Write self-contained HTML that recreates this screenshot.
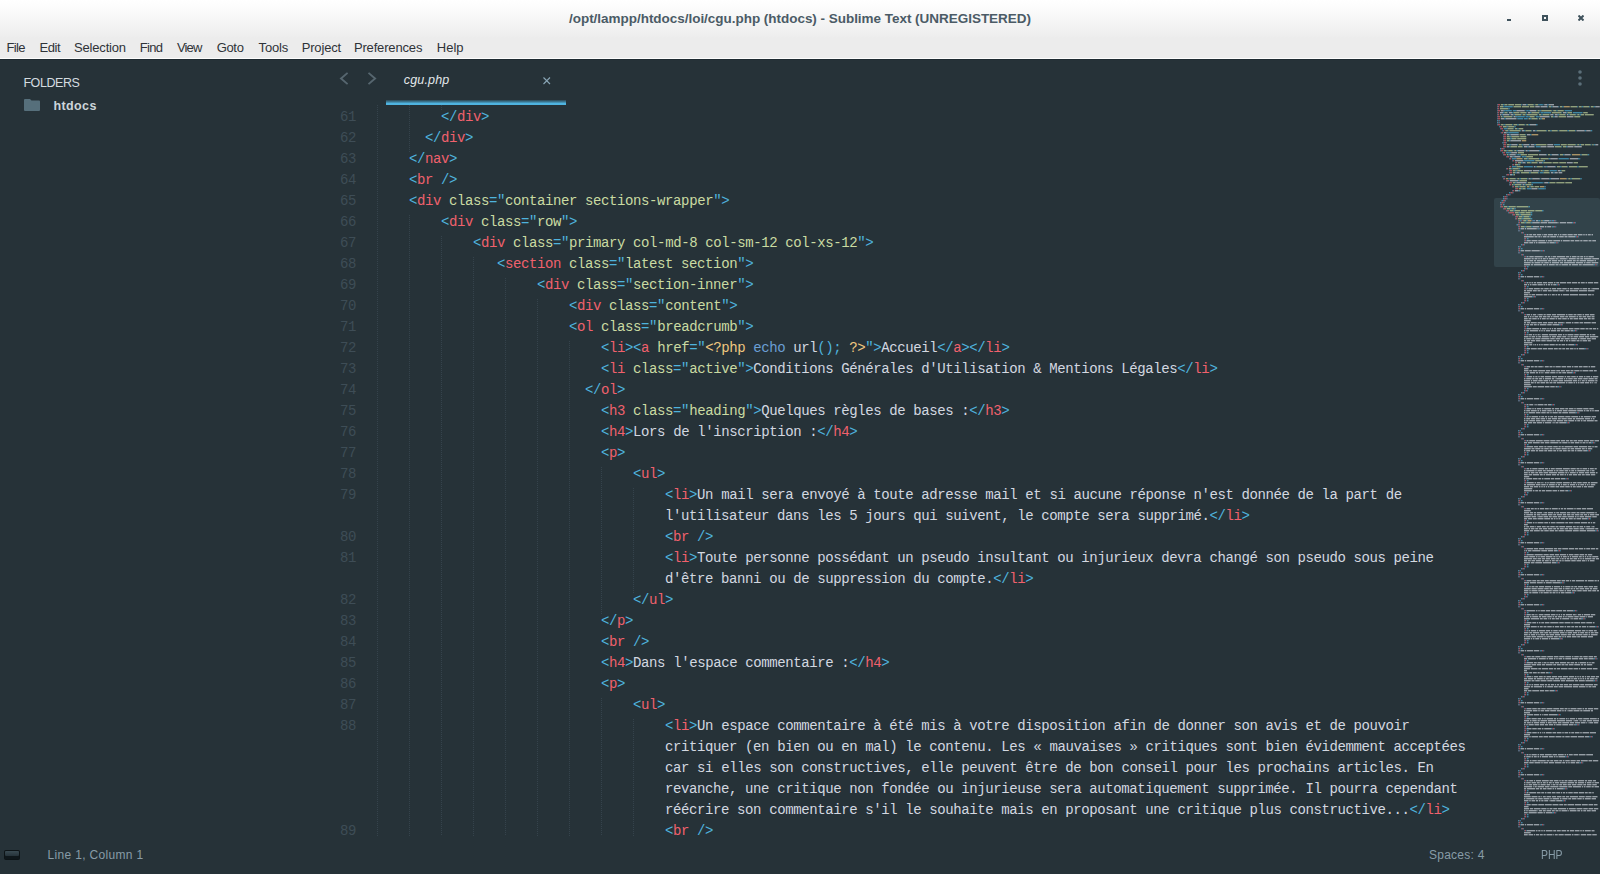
<!DOCTYPE html>
<html><head><meta charset="utf-8">
<style>
*{margin:0;padding:0;box-sizing:border-box}
html,body{width:1600px;height:874px;overflow:hidden;background:#263238}
body{position:relative;font-family:"Liberation Sans",sans-serif}
.abs{position:absolute}
.lb{position:absolute;white-space:pre;line-height:16px}
#titlebar{position:absolute;left:0;top:0;width:1600px;height:58px;background:linear-gradient(#ffffff 0px,#fbfbfb 10px,#efefef 34px,#ececec 38px,#ececec 58px)}
#wline{position:absolute;left:0;top:58px;width:1600px;height:1px;background:#fdfdfd}
#dline{position:absolute;left:0;top:59px;width:1600px;height:1px;background:#1e2a31}
#title{position:absolute;left:0;top:10px;width:1600px;text-align:center;font-weight:bold;font-size:13px;color:#4b5b66;line-height:16px}
.menu{position:absolute;top:40px;font-size:12.5px;color:#2f3338;line-height:14px}
.wb{position:absolute;background:#3f525c}
.r{position:absolute;left:377px;height:21px;line-height:21px;white-space:pre;font-family:"Liberation Mono",monospace;font-size:14px;letter-spacing:-0.4px;color:#d3d8e0}
.ln{position:absolute;left:300px;width:56px;text-align:right;height:21px;line-height:21px;font-family:"Liberation Mono",monospace;font-size:14px;letter-spacing:-0.4px;color:#3e4d56}
.p{color:#4fb3dd} .t{color:#f0616d} .a{color:#cadba2} .s{color:#cadba2} .x{color:#d3d8e0} .ph{color:#f0c880} .k{color:#6a9fd4} .f{color:#d3d8e0}
.g{position:absolute;width:1px;background:repeating-linear-gradient(to bottom,#35434c 0px,#35434c 1px,transparent 1px,transparent 2px)}
#tabline{position:absolute;left:386px;top:100px;width:180px;height:5px;background:linear-gradient(rgba(79,180,224,0.15),rgba(79,180,224,0.6) 40%,#4fb4e0 70%,#4fb4e0)}
</style></head><body>
<div id="titlebar"></div>
<div id="wline"></div>
<div id="dline"></div>
<div class="wb" style="left:1507px;top:19px;width:4px;height:2px"></div>
<div class="wb" style="left:1542px;top:15px;width:6px;height:6px;background:transparent;border:2px solid #3f525c"></div>
<svg class="abs" style="left:1578px;top:15px" width="6" height="6" viewBox="0 0 6 6"><path d="M0.5 0.5L5.5 5.5M5.5 0.5L0.5 5.5" stroke="#3f525c" stroke-width="2"/></svg>

<svg class="abs" style="left:24px;top:99px" width="16" height="12" viewBox="0 0 16 12"><path d="M0 1Q0 0 1 0H6L7.5 1.5H15Q16 1.5 16 2.5V11Q16 12 15 12H1Q0 12 0 11Z" fill="#566f7b"/></svg>

<svg class="abs" style="left:330px;top:62px" width="60" height="30" viewBox="0 0 60 30"><path d="M17.6 10.9L11 16.5L17.6 22.1M38.5 10.9L45.1 16.5L38.5 22.1" fill="none" stroke="#56666f" stroke-width="1.9"/></svg>
<svg class="abs" style="left:543px;top:77px" width="8" height="8" viewBox="0 0 8 8"><path d="M0.5 0.5L7 7M7 0.5L0.5 7" stroke="#89a6b6" stroke-width="1.1"/></svg>
<div id="tabline"></div>
<svg class="abs" style="left:1576px;top:69px" width="8" height="18" viewBox="0 0 8 18"><circle cx="4" cy="3" r="1.8" fill="#5b6f79"/><circle cx="4" cy="9" r="1.8" fill="#5b6f79"/><circle cx="4" cy="15" r="1.8" fill="#5b6f79"/></svg>

<div class="g" style="left:377px;top:105px;height:731px"></div>
<div class="g" style="left:409px;top:105px;height:47px"></div>
<div class="g" style="left:409px;top:215px;height:621px"></div>
<div class="g" style="left:441px;top:105px;height:5px"></div>
<div class="g" style="left:441px;top:236px;height:600px"></div>
<div class="g" style="left:473px;top:257px;height:579px"></div>
<div class="g" style="left:505px;top:278px;height:558px"></div>
<div class="g" style="left:537px;top:299px;height:537px"></div>
<div class="g" style="left:569px;top:341px;height:495px"></div>
<div class="g" style="left:601px;top:467px;height:147px"></div>
<div class="g" style="left:601px;top:698px;height:138px"></div>
<div class="g" style="left:633px;top:488px;height:105px"></div>
<div class="g" style="left:633px;top:719px;height:117px"></div>
<div class="r" style="top:106.5px">        <span class="p">&lt;/</span><span class="t">div</span><span class="p">&gt;</span></div>
<div class="ln" style="top:106.5px">61</div>
<div class="r" style="top:127.5px">      <span class="p">&lt;/</span><span class="t">div</span><span class="p">&gt;</span></div>
<div class="ln" style="top:127.5px">62</div>
<div class="r" style="top:148.5px">    <span class="p">&lt;/</span><span class="t">nav</span><span class="p">&gt;</span></div>
<div class="ln" style="top:148.5px">63</div>
<div class="r" style="top:169.5px">    <span class="p">&lt;</span><span class="t">br</span> <span class="p">/&gt;</span></div>
<div class="ln" style="top:169.5px">64</div>
<div class="r" style="top:190.5px">    <span class="p">&lt;</span><span class="t">div</span> <span class="a">class</span><span class="p">="</span><span class="s">container sections-wrapper</span><span class="p">"&gt;</span></div>
<div class="ln" style="top:190.5px">65</div>
<div class="r" style="top:211.5px">        <span class="p">&lt;</span><span class="t">div</span> <span class="a">class</span><span class="p">="</span><span class="s">row</span><span class="p">"&gt;</span></div>
<div class="ln" style="top:211.5px">66</div>
<div class="r" style="top:232.5px">            <span class="p">&lt;</span><span class="t">div</span> <span class="a">class</span><span class="p">="</span><span class="s">primary col-md-8 col-sm-12 col-xs-12</span><span class="p">"&gt;</span></div>
<div class="ln" style="top:232.5px">67</div>
<div class="r" style="top:253.5px">               <span class="p">&lt;</span><span class="t">section</span> <span class="a">class</span><span class="p">="</span><span class="s">latest section</span><span class="p">"&gt;</span></div>
<div class="ln" style="top:253.5px">68</div>
<div class="r" style="top:274.5px">                    <span class="p">&lt;</span><span class="t">div</span> <span class="a">class</span><span class="p">="</span><span class="s">section-inner</span><span class="p">"&gt;</span></div>
<div class="ln" style="top:274.5px">69</div>
<div class="r" style="top:295.5px">                        <span class="p">&lt;</span><span class="t">div</span> <span class="a">class</span><span class="p">="</span><span class="s">content</span><span class="p">"&gt;</span></div>
<div class="ln" style="top:295.5px">70</div>
<div class="r" style="top:316.5px">                        <span class="p">&lt;</span><span class="t">ol</span> <span class="a">class</span><span class="p">="</span><span class="s">breadcrumb</span><span class="p">"&gt;</span></div>
<div class="ln" style="top:316.5px">71</div>
<div class="r" style="top:337.5px">                            <span class="p">&lt;</span><span class="t">li</span><span class="p">&gt;&lt;</span><span class="t">a</span> <span class="a">href</span><span class="p">="</span><span class="ph">&lt;?php</span> <span class="k">echo</span> <span class="f">url</span><span class="p">();</span> <span class="ph">?&gt;</span><span class="p">"&gt;</span><span class="x">Accueil</span><span class="p">&lt;/</span><span class="t">a</span><span class="p">&gt;&lt;/</span><span class="t">li</span><span class="p">&gt;</span></div>
<div class="ln" style="top:337.5px">72</div>
<div class="r" style="top:358.5px">                            <span class="p">&lt;</span><span class="t">li</span> <span class="a">class</span><span class="p">="</span><span class="s">active</span><span class="p">"&gt;</span><span class="x">Conditions</span> <span class="x">Générales</span> <span class="x">d'Utilisation</span> <span class="x">&amp;</span> <span class="x">Mentions</span> <span class="x">Légales</span><span class="p">&lt;/</span><span class="t">li</span><span class="p">&gt;</span></div>
<div class="ln" style="top:358.5px">73</div>
<div class="r" style="top:379.5px">                          <span class="p">&lt;/</span><span class="t">ol</span><span class="p">&gt;</span></div>
<div class="ln" style="top:379.5px">74</div>
<div class="r" style="top:400.5px">                            <span class="p">&lt;</span><span class="t">h3</span> <span class="a">class</span><span class="p">="</span><span class="s">heading</span><span class="p">"&gt;</span><span class="x">Quelques</span> <span class="x">règles</span> <span class="x">de</span> <span class="x">bases</span> <span class="x">:</span><span class="p">&lt;/</span><span class="t">h3</span><span class="p">&gt;</span></div>
<div class="ln" style="top:400.5px">75</div>
<div class="r" style="top:421.5px">                            <span class="p">&lt;</span><span class="t">h4</span><span class="p">&gt;</span><span class="x">Lors</span> <span class="x">de</span> <span class="x">l'inscription</span> <span class="x">:</span><span class="p">&lt;/</span><span class="t">h4</span><span class="p">&gt;</span></div>
<div class="ln" style="top:421.5px">76</div>
<div class="r" style="top:442.5px">                            <span class="p">&lt;</span><span class="t">p</span><span class="p">&gt;</span></div>
<div class="ln" style="top:442.5px">77</div>
<div class="r" style="top:463.5px">                                <span class="p">&lt;</span><span class="t">ul</span><span class="p">&gt;</span></div>
<div class="ln" style="top:463.5px">78</div>
<div class="r" style="top:484.5px">                                    <span class="p">&lt;</span><span class="t">li</span><span class="p">&gt;</span><span class="x">Un</span> <span class="x">mail</span> <span class="x">sera</span> <span class="x">envoyé</span> <span class="x">à</span> <span class="x">toute</span> <span class="x">adresse</span> <span class="x">mail</span> <span class="x">et</span> <span class="x">si</span> <span class="x">aucune</span> <span class="x">réponse</span> <span class="x">n'est</span> <span class="x">donnée</span> <span class="x">de</span> <span class="x">la</span> <span class="x">part</span> <span class="x">de</span></div>
<div class="ln" style="top:484.5px">79</div>
<div class="r" style="top:505.5px">                                    <span class="x">l'utilisateur</span> <span class="x">dans</span> <span class="x">les</span> <span class="x">5</span> <span class="x">jours</span> <span class="x">qui</span> <span class="x">suivent,</span> <span class="x">le</span> <span class="x">compte</span> <span class="x">sera</span> <span class="x">supprimé.</span><span class="p">&lt;/</span><span class="t">li</span><span class="p">&gt;</span></div>
<div class="r" style="top:526.5px">                                    <span class="p">&lt;</span><span class="t">br</span> <span class="p">/&gt;</span></div>
<div class="ln" style="top:526.5px">80</div>
<div class="r" style="top:547.5px">                                    <span class="p">&lt;</span><span class="t">li</span><span class="p">&gt;</span><span class="x">Toute</span> <span class="x">personne</span> <span class="x">possédant</span> <span class="x">un</span> <span class="x">pseudo</span> <span class="x">insultant</span> <span class="x">ou</span> <span class="x">injurieux</span> <span class="x">devra</span> <span class="x">changé</span> <span class="x">son</span> <span class="x">pseudo</span> <span class="x">sous</span> <span class="x">peine</span></div>
<div class="ln" style="top:547.5px">81</div>
<div class="r" style="top:568.5px">                                    <span class="x">d'être</span> <span class="x">banni</span> <span class="x">ou</span> <span class="x">de</span> <span class="x">suppression</span> <span class="x">du</span> <span class="x">compte.</span><span class="p">&lt;/</span><span class="t">li</span><span class="p">&gt;</span></div>
<div class="r" style="top:589.5px">                                <span class="p">&lt;/</span><span class="t">ul</span><span class="p">&gt;</span></div>
<div class="ln" style="top:589.5px">82</div>
<div class="r" style="top:610.5px">                            <span class="p">&lt;/</span><span class="t">p</span><span class="p">&gt;</span></div>
<div class="ln" style="top:610.5px">83</div>
<div class="r" style="top:631.5px">                            <span class="p">&lt;</span><span class="t">br</span> <span class="p">/&gt;</span></div>
<div class="ln" style="top:631.5px">84</div>
<div class="r" style="top:652.5px">                            <span class="p">&lt;</span><span class="t">h4</span><span class="p">&gt;</span><span class="x">Dans</span> <span class="x">l'espace</span> <span class="x">commentaire</span> <span class="x">:</span><span class="p">&lt;/</span><span class="t">h4</span><span class="p">&gt;</span></div>
<div class="ln" style="top:652.5px">85</div>
<div class="r" style="top:673.5px">                            <span class="p">&lt;</span><span class="t">p</span><span class="p">&gt;</span></div>
<div class="ln" style="top:673.5px">86</div>
<div class="r" style="top:694.5px">                                <span class="p">&lt;</span><span class="t">ul</span><span class="p">&gt;</span></div>
<div class="ln" style="top:694.5px">87</div>
<div class="r" style="top:715.5px">                                    <span class="p">&lt;</span><span class="t">li</span><span class="p">&gt;</span><span class="x">Un</span> <span class="x">espace</span> <span class="x">commentaire</span> <span class="x">à</span> <span class="x">été</span> <span class="x">mis</span> <span class="x">à</span> <span class="x">votre</span> <span class="x">disposition</span> <span class="x">afin</span> <span class="x">de</span> <span class="x">donner</span> <span class="x">son</span> <span class="x">avis</span> <span class="x">et</span> <span class="x">de</span> <span class="x">pouvoir</span></div>
<div class="ln" style="top:715.5px">88</div>
<div class="r" style="top:736.5px">                                    <span class="x">critiquer</span> <span class="x">(en</span> <span class="x">bien</span> <span class="x">ou</span> <span class="x">en</span> <span class="x">mal)</span> <span class="x">le</span> <span class="x">contenu.</span> <span class="x">Les</span> <span class="x">«</span> <span class="x">mauvaises</span> <span class="x">»</span> <span class="x">critiques</span> <span class="x">sont</span> <span class="x">bien</span> <span class="x">évidemment</span> <span class="x">acceptées</span></div>
<div class="r" style="top:757.5px">                                    <span class="x">car</span> <span class="x">si</span> <span class="x">elles</span> <span class="x">son</span> <span class="x">constructives,</span> <span class="x">elle</span> <span class="x">peuvent</span> <span class="x">être</span> <span class="x">de</span> <span class="x">bon</span> <span class="x">conseil</span> <span class="x">pour</span> <span class="x">les</span> <span class="x">prochains</span> <span class="x">articles.</span> <span class="x">En</span></div>
<div class="r" style="top:778.5px">                                    <span class="x">revanche,</span> <span class="x">une</span> <span class="x">critique</span> <span class="x">non</span> <span class="x">fondée</span> <span class="x">ou</span> <span class="x">injurieuse</span> <span class="x">sera</span> <span class="x">automatiquement</span> <span class="x">supprimée.</span> <span class="x">Il</span> <span class="x">pourra</span> <span class="x">cependant</span></div>
<div class="r" style="top:799.5px">                                    <span class="x">réécrire</span> <span class="x">son</span> <span class="x">commentaire</span> <span class="x">s'il</span> <span class="x">le</span> <span class="x">souhaite</span> <span class="x">mais</span> <span class="x">en</span> <span class="x">proposant</span> <span class="x">une</span> <span class="x">critique</span> <span class="x">plus</span> <span class="x">constructive...</span><span class="p">&lt;/</span><span class="t">li</span><span class="p">&gt;</span></div>
<div class="r" style="top:820.5px">                                    <span class="p">&lt;</span><span class="t">br</span> <span class="p">/&gt;</span></div>
<div class="ln" style="top:820.5px">89</div>

<svg class="abs" style="left:0;top:0" width="1600" height="874">
<rect x="1494" y="198" width="106" height="69" rx="2" fill="#32434a"/>
<defs><filter id="bl" x="-1%" y="-1%" width="102%" height="102%"><feGaussianBlur stdDeviation="0.35"/></filter></defs>
<g opacity="0.65" filter="url(#bl)">
<rect x="1497.00" y="104.0" width="0.75" height="1.4" fill="#4fb3dd"/>
<rect x="1497.75" y="104.0" width="2.25" height="1.4" fill="#f0616d"/>
<rect x="1500.75" y="104.0" width="2.25" height="1.4" fill="#cadba2"/>
<rect x="1503.00" y="104.0" width="1.50" height="1.4" fill="#4fb3dd"/>
<rect x="1504.50" y="104.0" width="3.00" height="1.4" fill="#cadba2"/>
<rect x="1508.25" y="104.0" width="6.00" height="1.4" fill="#cadba2"/>
<rect x="1515.00" y="104.0" width="6.00" height="1.4" fill="#cadba2"/>
<rect x="1521.00" y="104.0" width="0.75" height="1.4" fill="#4fb3dd"/>
<rect x="1522.50" y="104.0" width="3.75" height="1.4" fill="#d3d8e0"/>
<rect x="1526.25" y="104.0" width="1.50" height="1.4" fill="#4fb3dd"/>
<rect x="1527.75" y="104.0" width="6.00" height="1.4" fill="#cadba2"/>
<rect x="1533.75" y="104.0" width="0.75" height="1.4" fill="#4fb3dd"/>
<rect x="1535.25" y="104.0" width="3.00" height="1.4" fill="#cadba2"/>
<rect x="1538.25" y="104.0" width="1.50" height="1.4" fill="#4fb3dd"/>
<rect x="1539.75" y="104.0" width="3.00" height="1.4" fill="#4fb3dd"/>
<rect x="1542.75" y="104.0" width="0.75" height="1.4" fill="#4fb3dd"/>
<rect x="1544.25" y="104.0" width="3.00" height="1.4" fill="#d3d8e0"/>
<rect x="1547.25" y="104.0" width="1.50" height="1.4" fill="#4fb3dd"/>
<rect x="1548.75" y="104.0" width="5.25" height="1.4" fill="#d3d8e0"/>
<rect x="1497.00" y="106.0" width="0.75" height="1.4" fill="#4fb3dd"/>
<rect x="1497.75" y="106.0" width="1.50" height="1.4" fill="#f0616d"/>
<rect x="1500.00" y="106.0" width="3.00" height="1.4" fill="#cadba2"/>
<rect x="1503.00" y="106.0" width="1.50" height="1.4" fill="#4fb3dd"/>
<rect x="1504.50" y="106.0" width="8.25" height="1.4" fill="#4fb3dd"/>
<rect x="1513.50" y="106.0" width="7.50" height="1.4" fill="#cadba2"/>
<rect x="1521.75" y="106.0" width="7.50" height="1.4" fill="#cadba2"/>
<rect x="1530.00" y="106.0" width="4.50" height="1.4" fill="#cadba2"/>
<rect x="1535.25" y="106.0" width="4.50" height="1.4" fill="#d3d8e0"/>
<rect x="1540.50" y="106.0" width="6.75" height="1.4" fill="#d3d8e0"/>
<rect x="1547.25" y="106.0" width="0.75" height="1.4" fill="#4fb3dd"/>
<rect x="1548.75" y="106.0" width="2.25" height="1.4" fill="#cadba2"/>
<rect x="1551.00" y="106.0" width="1.50" height="1.4" fill="#4fb3dd"/>
<rect x="1552.50" y="106.0" width="6.00" height="1.4" fill="#d3d8e0"/>
<rect x="1558.50" y="106.0" width="0.75" height="1.4" fill="#4fb3dd"/>
<rect x="1560.00" y="106.0" width="2.25" height="1.4" fill="#cadba2"/>
<rect x="1562.25" y="106.0" width="1.50" height="1.4" fill="#4fb3dd"/>
<rect x="1563.75" y="106.0" width="6.00" height="1.4" fill="#f0c880"/>
<rect x="1570.50" y="106.0" width="6.75" height="1.4" fill="#cadba2"/>
<rect x="1577.25" y="106.0" width="0.75" height="1.4" fill="#4fb3dd"/>
<rect x="1578.75" y="106.0" width="3.00" height="1.4" fill="#cadba2"/>
<rect x="1581.75" y="106.0" width="1.50" height="1.4" fill="#4fb3dd"/>
<rect x="1583.25" y="106.0" width="6.00" height="1.4" fill="#cadba2"/>
<rect x="1589.25" y="106.0" width="0.75" height="1.4" fill="#4fb3dd"/>
<rect x="1590.75" y="106.0" width="3.00" height="1.4" fill="#cadba2"/>
<rect x="1593.75" y="106.0" width="1.50" height="1.4" fill="#4fb3dd"/>
<rect x="1595.25" y="106.0" width="4.50" height="1.4" fill="#d3d8e0"/>
<rect x="1497.00" y="108.0" width="0.75" height="1.4" fill="#4fb3dd"/>
<rect x="1497.75" y="108.0" width="1.50" height="1.4" fill="#f0616d"/>
<rect x="1500.00" y="108.0" width="8.25" height="1.4" fill="#cadba2"/>
<rect x="1508.25" y="108.0" width="1.50" height="1.4" fill="#4fb3dd"/>
<rect x="1497.00" y="110.0" width="0.75" height="1.4" fill="#4fb3dd"/>
<rect x="1497.75" y="110.0" width="2.25" height="1.4" fill="#f0616d"/>
<rect x="1500.75" y="110.0" width="3.00" height="1.4" fill="#d3d8e0"/>
<rect x="1503.75" y="110.0" width="1.50" height="1.4" fill="#4fb3dd"/>
<rect x="1505.25" y="110.0" width="6.00" height="1.4" fill="#4fb3dd"/>
<rect x="1511.25" y="110.0" width="0.75" height="1.4" fill="#4fb3dd"/>
<rect x="1512.75" y="110.0" width="2.25" height="1.4" fill="#4fb3dd"/>
<rect x="1515.00" y="110.0" width="1.50" height="1.4" fill="#4fb3dd"/>
<rect x="1516.50" y="110.0" width="8.25" height="1.4" fill="#d3d8e0"/>
<rect x="1524.75" y="110.0" width="0.75" height="1.4" fill="#4fb3dd"/>
<rect x="1526.25" y="110.0" width="2.25" height="1.4" fill="#4fb3dd"/>
<rect x="1528.50" y="110.0" width="1.50" height="1.4" fill="#4fb3dd"/>
<rect x="1530.00" y="110.0" width="6.00" height="1.4" fill="#d3d8e0"/>
<rect x="1536.00" y="110.0" width="0.75" height="1.4" fill="#4fb3dd"/>
<rect x="1537.50" y="110.0" width="2.25" height="1.4" fill="#cadba2"/>
<rect x="1539.75" y="110.0" width="1.50" height="1.4" fill="#4fb3dd"/>
<rect x="1541.25" y="110.0" width="10.50" height="1.4" fill="#cadba2"/>
<rect x="1551.75" y="110.0" width="0.75" height="1.4" fill="#4fb3dd"/>
<rect x="1553.25" y="110.0" width="3.00" height="1.4" fill="#cadba2"/>
<rect x="1556.25" y="110.0" width="1.50" height="1.4" fill="#4fb3dd"/>
<rect x="1557.75" y="110.0" width="6.00" height="1.4" fill="#cadba2"/>
<rect x="1564.50" y="110.0" width="7.50" height="1.4" fill="#4fb3dd"/>
<rect x="1497.00" y="112.0" width="0.75" height="1.4" fill="#4fb3dd"/>
<rect x="1497.75" y="112.0" width="1.50" height="1.4" fill="#f0616d"/>
<rect x="1500.00" y="112.0" width="3.00" height="1.4" fill="#d3d8e0"/>
<rect x="1503.00" y="112.0" width="1.50" height="1.4" fill="#4fb3dd"/>
<rect x="1504.50" y="112.0" width="3.00" height="1.4" fill="#cadba2"/>
<rect x="1507.50" y="112.0" width="0.75" height="1.4" fill="#4fb3dd"/>
<rect x="1509.00" y="112.0" width="3.00" height="1.4" fill="#d3d8e0"/>
<rect x="1512.00" y="112.0" width="1.50" height="1.4" fill="#4fb3dd"/>
<rect x="1513.50" y="112.0" width="6.00" height="1.4" fill="#cadba2"/>
<rect x="1520.25" y="112.0" width="6.00" height="1.4" fill="#cadba2"/>
<rect x="1526.25" y="112.0" width="0.75" height="1.4" fill="#4fb3dd"/>
<rect x="1527.75" y="112.0" width="2.25" height="1.4" fill="#d3d8e0"/>
<rect x="1530.00" y="112.0" width="1.50" height="1.4" fill="#4fb3dd"/>
<rect x="1531.50" y="112.0" width="7.50" height="1.4" fill="#cadba2"/>
<rect x="1539.00" y="112.0" width="0.75" height="1.4" fill="#4fb3dd"/>
<rect x="1540.50" y="112.0" width="3.00" height="1.4" fill="#4fb3dd"/>
<rect x="1543.50" y="112.0" width="1.50" height="1.4" fill="#4fb3dd"/>
<rect x="1545.00" y="112.0" width="6.00" height="1.4" fill="#4fb3dd"/>
<rect x="1551.75" y="112.0" width="9.75" height="1.4" fill="#cadba2"/>
<rect x="1561.50" y="112.0" width="0.75" height="1.4" fill="#4fb3dd"/>
<rect x="1563.00" y="112.0" width="3.00" height="1.4" fill="#d3d8e0"/>
<rect x="1566.00" y="112.0" width="1.50" height="1.4" fill="#4fb3dd"/>
<rect x="1567.50" y="112.0" width="4.50" height="1.4" fill="#cadba2"/>
<rect x="1572.75" y="112.0" width="9.75" height="1.4" fill="#4fb3dd"/>
<rect x="1583.25" y="112.0" width="4.50" height="1.4" fill="#cadba2"/>
<rect x="1497.00" y="114.0" width="0.75" height="1.4" fill="#4fb3dd"/>
<rect x="1497.75" y="114.0" width="1.50" height="1.4" fill="#f0616d"/>
<rect x="1500.00" y="114.0" width="1.50" height="1.4" fill="#d3d8e0"/>
<rect x="1501.50" y="114.0" width="1.50" height="1.4" fill="#4fb3dd"/>
<rect x="1503.00" y="114.0" width="6.00" height="1.4" fill="#d3d8e0"/>
<rect x="1509.00" y="114.0" width="0.75" height="1.4" fill="#4fb3dd"/>
<rect x="1510.50" y="114.0" width="3.00" height="1.4" fill="#d3d8e0"/>
<rect x="1513.50" y="114.0" width="1.50" height="1.4" fill="#4fb3dd"/>
<rect x="1515.00" y="114.0" width="6.00" height="1.4" fill="#cadba2"/>
<rect x="1521.00" y="114.0" width="0.75" height="1.4" fill="#4fb3dd"/>
<rect x="1522.50" y="114.0" width="3.00" height="1.4" fill="#cadba2"/>
<rect x="1525.50" y="114.0" width="1.50" height="1.4" fill="#4fb3dd"/>
<rect x="1527.00" y="114.0" width="10.50" height="1.4" fill="#cadba2"/>
<rect x="1537.50" y="114.0" width="0.75" height="1.4" fill="#4fb3dd"/>
<rect x="1539.00" y="114.0" width="2.25" height="1.4" fill="#cadba2"/>
<rect x="1541.25" y="114.0" width="1.50" height="1.4" fill="#4fb3dd"/>
<rect x="1542.75" y="114.0" width="6.75" height="1.4" fill="#cadba2"/>
<rect x="1550.25" y="114.0" width="3.00" height="1.4" fill="#d3d8e0"/>
<rect x="1553.25" y="114.0" width="0.75" height="1.4" fill="#4fb3dd"/>
<rect x="1554.75" y="114.0" width="3.00" height="1.4" fill="#d3d8e0"/>
<rect x="1557.75" y="114.0" width="1.50" height="1.4" fill="#4fb3dd"/>
<rect x="1559.25" y="114.0" width="6.00" height="1.4" fill="#cadba2"/>
<rect x="1565.25" y="114.0" width="0.75" height="1.4" fill="#4fb3dd"/>
<rect x="1566.75" y="114.0" width="1.50" height="1.4" fill="#d3d8e0"/>
<rect x="1568.25" y="114.0" width="1.50" height="1.4" fill="#4fb3dd"/>
<rect x="1569.75" y="114.0" width="6.00" height="1.4" fill="#cadba2"/>
<rect x="1575.75" y="114.0" width="0.75" height="1.4" fill="#4fb3dd"/>
<rect x="1577.25" y="114.0" width="2.25" height="1.4" fill="#cadba2"/>
<rect x="1579.50" y="114.0" width="1.50" height="1.4" fill="#4fb3dd"/>
<rect x="1581.00" y="114.0" width="3.00" height="1.4" fill="#cadba2"/>
<rect x="1584.75" y="114.0" width="9.00" height="1.4" fill="#cadba2"/>
<rect x="1497.00" y="116.0" width="0.75" height="1.4" fill="#4fb3dd"/>
<rect x="1497.75" y="116.0" width="2.25" height="1.4" fill="#f0616d"/>
<rect x="1500.75" y="116.0" width="1.50" height="1.4" fill="#cadba2"/>
<rect x="1502.25" y="116.0" width="1.50" height="1.4" fill="#4fb3dd"/>
<rect x="1503.75" y="116.0" width="8.25" height="1.4" fill="#cadba2"/>
<rect x="1512.00" y="116.0" width="0.75" height="1.4" fill="#4fb3dd"/>
<rect x="1513.50" y="116.0" width="2.25" height="1.4" fill="#d3d8e0"/>
<rect x="1515.75" y="116.0" width="1.50" height="1.4" fill="#4fb3dd"/>
<rect x="1517.25" y="116.0" width="6.75" height="1.4" fill="#4fb3dd"/>
<rect x="1524.00" y="116.0" width="0.75" height="1.4" fill="#4fb3dd"/>
<rect x="1525.50" y="116.0" width="3.00" height="1.4" fill="#4fb3dd"/>
<rect x="1528.50" y="116.0" width="1.50" height="1.4" fill="#4fb3dd"/>
<rect x="1530.00" y="116.0" width="4.50" height="1.4" fill="#cadba2"/>
<rect x="1534.50" y="116.0" width="0.75" height="1.4" fill="#4fb3dd"/>
<rect x="1536.00" y="116.0" width="2.25" height="1.4" fill="#4fb3dd"/>
<rect x="1538.25" y="116.0" width="1.50" height="1.4" fill="#4fb3dd"/>
<rect x="1539.75" y="116.0" width="9.75" height="1.4" fill="#d3d8e0"/>
<rect x="1549.50" y="116.0" width="0.75" height="1.4" fill="#4fb3dd"/>
<rect x="1551.00" y="116.0" width="2.25" height="1.4" fill="#cadba2"/>
<rect x="1553.25" y="116.0" width="1.50" height="1.4" fill="#4fb3dd"/>
<rect x="1554.75" y="116.0" width="3.00" height="1.4" fill="#d3d8e0"/>
<rect x="1558.50" y="116.0" width="7.50" height="1.4" fill="#cadba2"/>
<rect x="1566.75" y="116.0" width="6.75" height="1.4" fill="#d3d8e0"/>
<rect x="1574.25" y="116.0" width="6.00" height="1.4" fill="#cadba2"/>
<rect x="1497.00" y="118.0" width="0.75" height="1.4" fill="#4fb3dd"/>
<rect x="1497.75" y="118.0" width="2.25" height="1.4" fill="#f0616d"/>
<rect x="1500.75" y="118.0" width="3.75" height="1.4" fill="#d3d8e0"/>
<rect x="1504.50" y="118.0" width="1.50" height="1.4" fill="#4fb3dd"/>
<rect x="1506.00" y="118.0" width="10.50" height="1.4" fill="#d3d8e0"/>
<rect x="1517.25" y="118.0" width="6.00" height="1.4" fill="#4fb3dd"/>
<rect x="1524.00" y="118.0" width="3.00" height="1.4" fill="#4fb3dd"/>
<rect x="1527.00" y="118.0" width="0.75" height="1.4" fill="#4fb3dd"/>
<rect x="1528.50" y="118.0" width="1.50" height="1.4" fill="#cadba2"/>
<rect x="1530.00" y="118.0" width="1.50" height="1.4" fill="#4fb3dd"/>
<rect x="1531.50" y="118.0" width="6.00" height="1.4" fill="#cadba2"/>
<rect x="1537.50" y="118.0" width="0.75" height="1.4" fill="#4fb3dd"/>
<rect x="1539.00" y="118.0" width="1.50" height="1.4" fill="#cadba2"/>
<rect x="1540.50" y="118.0" width="1.50" height="1.4" fill="#4fb3dd"/>
<rect x="1542.00" y="118.0" width="3.00" height="1.4" fill="#f0c880"/>
<rect x="1497.00" y="120.0" width="1.50" height="1.4" fill="#4fb3dd"/>
<rect x="1498.50" y="120.0" width="0.75" height="1.4" fill="#f0616d"/>
<rect x="1499.25" y="120.0" width="0.75" height="1.4" fill="#4fb3dd"/>
<rect x="1497.00" y="122.0" width="1.50" height="1.4" fill="#4fb3dd"/>
<rect x="1498.50" y="122.0" width="0.75" height="1.4" fill="#f0616d"/>
<rect x="1499.25" y="122.0" width="0.75" height="1.4" fill="#4fb3dd"/>
<rect x="1497.00" y="124.0" width="0.75" height="1.4" fill="#4fb3dd"/>
<rect x="1497.75" y="124.0" width="2.25" height="1.4" fill="#f0616d"/>
<rect x="1500.75" y="124.0" width="3.00" height="1.4" fill="#cadba2"/>
<rect x="1503.75" y="124.0" width="1.50" height="1.4" fill="#4fb3dd"/>
<rect x="1505.25" y="124.0" width="6.75" height="1.4" fill="#cadba2"/>
<rect x="1512.00" y="124.0" width="0.75" height="1.4" fill="#4fb3dd"/>
<rect x="1513.50" y="124.0" width="3.75" height="1.4" fill="#cadba2"/>
<rect x="1517.25" y="124.0" width="1.50" height="1.4" fill="#4fb3dd"/>
<rect x="1518.75" y="124.0" width="6.00" height="1.4" fill="#cadba2"/>
<rect x="1524.75" y="124.0" width="0.75" height="1.4" fill="#4fb3dd"/>
<rect x="1526.25" y="124.0" width="2.25" height="1.4" fill="#cadba2"/>
<rect x="1528.50" y="124.0" width="1.50" height="1.4" fill="#4fb3dd"/>
<rect x="1530.00" y="124.0" width="6.00" height="1.4" fill="#d3d8e0"/>
<rect x="1536.00" y="124.0" width="1.50" height="1.4" fill="#4fb3dd"/>
<rect x="1499.25" y="126.0" width="0.75" height="1.4" fill="#4fb3dd"/>
<rect x="1500.00" y="126.0" width="2.25" height="1.4" fill="#f0616d"/>
<rect x="1503.00" y="126.0" width="3.75" height="1.4" fill="#cadba2"/>
<rect x="1506.75" y="126.0" width="1.50" height="1.4" fill="#4fb3dd"/>
<rect x="1508.25" y="126.0" width="6.00" height="1.4" fill="#cadba2"/>
<rect x="1514.25" y="126.0" width="1.50" height="1.4" fill="#4fb3dd"/>
<rect x="1500.00" y="128.0" width="0.75" height="1.4" fill="#4fb3dd"/>
<rect x="1500.75" y="128.0" width="2.25" height="1.4" fill="#f0616d"/>
<rect x="1503.75" y="128.0" width="2.25" height="1.4" fill="#4fb3dd"/>
<rect x="1506.00" y="128.0" width="1.50" height="1.4" fill="#4fb3dd"/>
<rect x="1507.50" y="128.0" width="6.00" height="1.4" fill="#cadba2"/>
<rect x="1513.50" y="128.0" width="0.75" height="1.4" fill="#4fb3dd"/>
<rect x="1515.00" y="128.0" width="2.25" height="1.4" fill="#cadba2"/>
<rect x="1517.25" y="128.0" width="1.50" height="1.4" fill="#4fb3dd"/>
<rect x="1518.75" y="128.0" width="4.50" height="1.4" fill="#cadba2"/>
<rect x="1502.25" y="130.0" width="0.75" height="1.4" fill="#4fb3dd"/>
<rect x="1503.00" y="130.0" width="1.50" height="1.4" fill="#f0616d"/>
<rect x="1505.25" y="130.0" width="3.00" height="1.4" fill="#cadba2"/>
<rect x="1508.25" y="130.0" width="1.50" height="1.4" fill="#4fb3dd"/>
<rect x="1509.75" y="130.0" width="10.50" height="1.4" fill="#cadba2"/>
<rect x="1520.25" y="130.0" width="0.75" height="1.4" fill="#4fb3dd"/>
<rect x="1521.75" y="130.0" width="2.25" height="1.4" fill="#d3d8e0"/>
<rect x="1524.00" y="130.0" width="1.50" height="1.4" fill="#4fb3dd"/>
<rect x="1525.50" y="130.0" width="6.00" height="1.4" fill="#cadba2"/>
<rect x="1531.50" y="130.0" width="0.75" height="1.4" fill="#4fb3dd"/>
<rect x="1533.00" y="130.0" width="2.25" height="1.4" fill="#d3d8e0"/>
<rect x="1535.25" y="130.0" width="1.50" height="1.4" fill="#4fb3dd"/>
<rect x="1536.75" y="130.0" width="9.75" height="1.4" fill="#cadba2"/>
<rect x="1546.50" y="130.0" width="0.75" height="1.4" fill="#4fb3dd"/>
<rect x="1548.00" y="130.0" width="2.25" height="1.4" fill="#cadba2"/>
<rect x="1550.25" y="130.0" width="1.50" height="1.4" fill="#4fb3dd"/>
<rect x="1551.75" y="130.0" width="6.00" height="1.4" fill="#cadba2"/>
<rect x="1557.75" y="130.0" width="0.75" height="1.4" fill="#4fb3dd"/>
<rect x="1559.25" y="130.0" width="8.25" height="1.4" fill="#cadba2"/>
<rect x="1567.50" y="130.0" width="1.50" height="1.4" fill="#4fb3dd"/>
<rect x="1569.00" y="130.0" width="6.00" height="1.4" fill="#cadba2"/>
<rect x="1575.00" y="130.0" width="0.75" height="1.4" fill="#4fb3dd"/>
<rect x="1576.50" y="130.0" width="8.25" height="1.4" fill="#d3d8e0"/>
<rect x="1584.75" y="130.0" width="1.50" height="1.4" fill="#4fb3dd"/>
<rect x="1586.25" y="130.0" width="4.50" height="1.4" fill="#d3d8e0"/>
<rect x="1590.75" y="130.0" width="1.50" height="1.4" fill="#4fb3dd"/>
<rect x="1500.75" y="132.0" width="0.75" height="1.4" fill="#4fb3dd"/>
<rect x="1501.50" y="132.0" width="1.50" height="1.4" fill="#f0616d"/>
<rect x="1503.75" y="132.0" width="3.00" height="1.4" fill="#d3d8e0"/>
<rect x="1506.75" y="132.0" width="1.50" height="1.4" fill="#4fb3dd"/>
<rect x="1508.25" y="132.0" width="10.50" height="1.4" fill="#4fb3dd"/>
<rect x="1503.00" y="134.0" width="0.75" height="1.4" fill="#4fb3dd"/>
<rect x="1503.75" y="134.0" width="2.25" height="1.4" fill="#f0616d"/>
<rect x="1506.75" y="134.0" width="2.25" height="1.4" fill="#d3d8e0"/>
<rect x="1509.00" y="134.0" width="1.50" height="1.4" fill="#4fb3dd"/>
<rect x="1510.50" y="134.0" width="8.25" height="1.4" fill="#d3d8e0"/>
<rect x="1519.50" y="134.0" width="6.00" height="1.4" fill="#cadba2"/>
<rect x="1525.50" y="134.0" width="0.75" height="1.4" fill="#4fb3dd"/>
<rect x="1527.00" y="134.0" width="3.00" height="1.4" fill="#d3d8e0"/>
<rect x="1530.00" y="134.0" width="1.50" height="1.4" fill="#4fb3dd"/>
<rect x="1531.50" y="134.0" width="6.75" height="1.4" fill="#f0c880"/>
<rect x="1503.00" y="136.0" width="0.75" height="1.4" fill="#4fb3dd"/>
<rect x="1503.75" y="136.0" width="2.25" height="1.4" fill="#f0616d"/>
<rect x="1506.75" y="136.0" width="3.00" height="1.4" fill="#cadba2"/>
<rect x="1509.75" y="136.0" width="1.50" height="1.4" fill="#4fb3dd"/>
<rect x="1511.25" y="136.0" width="8.25" height="1.4" fill="#cadba2"/>
<rect x="1520.25" y="136.0" width="6.00" height="1.4" fill="#cadba2"/>
<rect x="1503.00" y="138.0" width="0.75" height="1.4" fill="#4fb3dd"/>
<rect x="1503.75" y="138.0" width="2.25" height="1.4" fill="#f0616d"/>
<rect x="1506.75" y="138.0" width="3.75" height="1.4" fill="#cadba2"/>
<rect x="1510.50" y="138.0" width="1.50" height="1.4" fill="#4fb3dd"/>
<rect x="1512.00" y="138.0" width="4.50" height="1.4" fill="#cadba2"/>
<rect x="1517.25" y="138.0" width="9.00" height="1.4" fill="#cadba2"/>
<rect x="1503.00" y="140.0" width="0.75" height="1.4" fill="#4fb3dd"/>
<rect x="1503.75" y="140.0" width="2.25" height="1.4" fill="#f0616d"/>
<rect x="1506.75" y="140.0" width="2.25" height="1.4" fill="#cadba2"/>
<rect x="1509.00" y="140.0" width="1.50" height="1.4" fill="#4fb3dd"/>
<rect x="1510.50" y="140.0" width="10.50" height="1.4" fill="#d3d8e0"/>
<rect x="1521.75" y="140.0" width="4.50" height="1.4" fill="#f0c880"/>
<rect x="1502.25" y="142.0" width="1.50" height="1.4" fill="#4fb3dd"/>
<rect x="1503.75" y="142.0" width="2.25" height="1.4" fill="#f0616d"/>
<rect x="1506.00" y="142.0" width="0.75" height="1.4" fill="#4fb3dd"/>
<rect x="1503.00" y="144.0" width="0.75" height="1.4" fill="#4fb3dd"/>
<rect x="1503.75" y="144.0" width="2.25" height="1.4" fill="#f0616d"/>
<rect x="1506.75" y="144.0" width="3.00" height="1.4" fill="#cadba2"/>
<rect x="1509.75" y="144.0" width="1.50" height="1.4" fill="#4fb3dd"/>
<rect x="1511.25" y="144.0" width="6.00" height="1.4" fill="#d3d8e0"/>
<rect x="1517.25" y="144.0" width="0.75" height="1.4" fill="#4fb3dd"/>
<rect x="1518.75" y="144.0" width="3.00" height="1.4" fill="#cadba2"/>
<rect x="1521.75" y="144.0" width="1.50" height="1.4" fill="#4fb3dd"/>
<rect x="1523.25" y="144.0" width="6.00" height="1.4" fill="#d3d8e0"/>
<rect x="1529.25" y="144.0" width="0.75" height="1.4" fill="#4fb3dd"/>
<rect x="1530.75" y="144.0" width="3.75" height="1.4" fill="#d3d8e0"/>
<rect x="1534.50" y="144.0" width="1.50" height="1.4" fill="#4fb3dd"/>
<rect x="1536.00" y="144.0" width="10.50" height="1.4" fill="#cadba2"/>
<rect x="1547.25" y="144.0" width="6.00" height="1.4" fill="#d3d8e0"/>
<rect x="1554.00" y="144.0" width="6.00" height="1.4" fill="#4fb3dd"/>
<rect x="1560.75" y="144.0" width="6.00" height="1.4" fill="#cadba2"/>
<rect x="1567.50" y="144.0" width="8.25" height="1.4" fill="#cadba2"/>
<rect x="1575.75" y="144.0" width="0.75" height="1.4" fill="#4fb3dd"/>
<rect x="1577.25" y="144.0" width="2.25" height="1.4" fill="#cadba2"/>
<rect x="1579.50" y="144.0" width="1.50" height="1.4" fill="#4fb3dd"/>
<rect x="1581.00" y="144.0" width="3.00" height="1.4" fill="#cadba2"/>
<rect x="1584.75" y="144.0" width="6.00" height="1.4" fill="#cadba2"/>
<rect x="1590.75" y="144.0" width="0.75" height="1.4" fill="#4fb3dd"/>
<rect x="1592.25" y="144.0" width="1.50" height="1.4" fill="#cadba2"/>
<rect x="1593.75" y="144.0" width="1.50" height="1.4" fill="#4fb3dd"/>
<rect x="1595.25" y="144.0" width="3.00" height="1.4" fill="#d3d8e0"/>
<rect x="1503.00" y="146.0" width="0.75" height="1.4" fill="#4fb3dd"/>
<rect x="1503.75" y="146.0" width="2.25" height="1.4" fill="#f0616d"/>
<rect x="1506.75" y="146.0" width="2.25" height="1.4" fill="#d3d8e0"/>
<rect x="1509.00" y="146.0" width="1.50" height="1.4" fill="#4fb3dd"/>
<rect x="1510.50" y="146.0" width="6.75" height="1.4" fill="#cadba2"/>
<rect x="1518.00" y="146.0" width="4.50" height="1.4" fill="#cadba2"/>
<rect x="1522.50" y="146.0" width="0.75" height="1.4" fill="#4fb3dd"/>
<rect x="1524.00" y="146.0" width="3.00" height="1.4" fill="#d3d8e0"/>
<rect x="1527.00" y="146.0" width="1.50" height="1.4" fill="#4fb3dd"/>
<rect x="1528.50" y="146.0" width="6.00" height="1.4" fill="#d3d8e0"/>
<rect x="1534.50" y="146.0" width="0.75" height="1.4" fill="#4fb3dd"/>
<rect x="1536.00" y="146.0" width="3.00" height="1.4" fill="#4fb3dd"/>
<rect x="1539.00" y="146.0" width="1.50" height="1.4" fill="#4fb3dd"/>
<rect x="1540.50" y="146.0" width="6.00" height="1.4" fill="#d3d8e0"/>
<rect x="1547.25" y="146.0" width="6.75" height="1.4" fill="#d3d8e0"/>
<rect x="1554.75" y="146.0" width="6.75" height="1.4" fill="#cadba2"/>
<rect x="1561.50" y="146.0" width="0.75" height="1.4" fill="#4fb3dd"/>
<rect x="1563.00" y="146.0" width="3.00" height="1.4" fill="#cadba2"/>
<rect x="1566.00" y="146.0" width="1.50" height="1.4" fill="#4fb3dd"/>
<rect x="1567.50" y="146.0" width="6.00" height="1.4" fill="#d3d8e0"/>
<rect x="1574.25" y="146.0" width="7.50" height="1.4" fill="#d3d8e0"/>
<rect x="1500.00" y="148.0" width="1.50" height="1.4" fill="#4fb3dd"/>
<rect x="1501.50" y="148.0" width="2.25" height="1.4" fill="#f0616d"/>
<rect x="1503.75" y="148.0" width="0.75" height="1.4" fill="#4fb3dd"/>
<rect x="1500.00" y="150.0" width="0.75" height="1.4" fill="#4fb3dd"/>
<rect x="1500.75" y="150.0" width="2.25" height="1.4" fill="#f0616d"/>
<rect x="1503.75" y="150.0" width="3.00" height="1.4" fill="#cadba2"/>
<rect x="1506.75" y="150.0" width="1.50" height="1.4" fill="#4fb3dd"/>
<rect x="1508.25" y="150.0" width="4.50" height="1.4" fill="#cadba2"/>
<rect x="1512.75" y="150.0" width="0.75" height="1.4" fill="#4fb3dd"/>
<rect x="1514.25" y="150.0" width="2.25" height="1.4" fill="#cadba2"/>
<rect x="1516.50" y="150.0" width="1.50" height="1.4" fill="#4fb3dd"/>
<rect x="1518.00" y="150.0" width="6.00" height="1.4" fill="#d3d8e0"/>
<rect x="1524.00" y="150.0" width="0.75" height="1.4" fill="#4fb3dd"/>
<rect x="1525.50" y="150.0" width="2.25" height="1.4" fill="#d3d8e0"/>
<rect x="1527.75" y="150.0" width="1.50" height="1.4" fill="#4fb3dd"/>
<rect x="1529.25" y="150.0" width="9.75" height="1.4" fill="#d3d8e0"/>
<rect x="1539.00" y="150.0" width="1.50" height="1.4" fill="#4fb3dd"/>
<rect x="1502.25" y="152.0" width="0.75" height="1.4" fill="#4fb3dd"/>
<rect x="1503.00" y="152.0" width="2.25" height="1.4" fill="#f0616d"/>
<rect x="1506.00" y="152.0" width="3.75" height="1.4" fill="#4fb3dd"/>
<rect x="1509.75" y="152.0" width="1.50" height="1.4" fill="#4fb3dd"/>
<rect x="1511.25" y="152.0" width="6.00" height="1.4" fill="#d3d8e0"/>
<rect x="1518.00" y="152.0" width="6.00" height="1.4" fill="#cadba2"/>
<rect x="1503.00" y="154.0" width="0.75" height="1.4" fill="#4fb3dd"/>
<rect x="1503.75" y="154.0" width="2.25" height="1.4" fill="#f0616d"/>
<rect x="1506.75" y="154.0" width="1.50" height="1.4" fill="#cadba2"/>
<rect x="1508.25" y="154.0" width="1.50" height="1.4" fill="#4fb3dd"/>
<rect x="1509.75" y="154.0" width="6.00" height="1.4" fill="#d3d8e0"/>
<rect x="1515.75" y="154.0" width="0.75" height="1.4" fill="#4fb3dd"/>
<rect x="1517.25" y="154.0" width="2.25" height="1.4" fill="#4fb3dd"/>
<rect x="1519.50" y="154.0" width="1.50" height="1.4" fill="#4fb3dd"/>
<rect x="1521.00" y="154.0" width="6.00" height="1.4" fill="#cadba2"/>
<rect x="1527.75" y="154.0" width="10.50" height="1.4" fill="#cadba2"/>
<rect x="1539.00" y="154.0" width="7.50" height="1.4" fill="#d3d8e0"/>
<rect x="1546.50" y="154.0" width="0.75" height="1.4" fill="#4fb3dd"/>
<rect x="1548.00" y="154.0" width="2.25" height="1.4" fill="#cadba2"/>
<rect x="1550.25" y="154.0" width="1.50" height="1.4" fill="#4fb3dd"/>
<rect x="1551.75" y="154.0" width="6.75" height="1.4" fill="#d3d8e0"/>
<rect x="1558.50" y="154.0" width="0.75" height="1.4" fill="#4fb3dd"/>
<rect x="1560.00" y="154.0" width="3.00" height="1.4" fill="#cadba2"/>
<rect x="1563.00" y="154.0" width="1.50" height="1.4" fill="#4fb3dd"/>
<rect x="1564.50" y="154.0" width="6.00" height="1.4" fill="#d3d8e0"/>
<rect x="1570.50" y="154.0" width="0.75" height="1.4" fill="#4fb3dd"/>
<rect x="1572.00" y="154.0" width="8.25" height="1.4" fill="#f0c880"/>
<rect x="1580.25" y="154.0" width="1.50" height="1.4" fill="#4fb3dd"/>
<rect x="1581.75" y="154.0" width="6.00" height="1.4" fill="#cadba2"/>
<rect x="1587.75" y="154.0" width="1.50" height="1.4" fill="#4fb3dd"/>
<rect x="1506.00" y="156.0" width="0.75" height="1.4" fill="#4fb3dd"/>
<rect x="1506.75" y="156.0" width="2.25" height="1.4" fill="#f0616d"/>
<rect x="1509.75" y="156.0" width="3.00" height="1.4" fill="#d3d8e0"/>
<rect x="1512.75" y="156.0" width="1.50" height="1.4" fill="#4fb3dd"/>
<rect x="1514.25" y="156.0" width="6.00" height="1.4" fill="#d3d8e0"/>
<rect x="1520.25" y="156.0" width="0.75" height="1.4" fill="#4fb3dd"/>
<rect x="1521.75" y="156.0" width="3.00" height="1.4" fill="#4fb3dd"/>
<rect x="1524.75" y="156.0" width="1.50" height="1.4" fill="#4fb3dd"/>
<rect x="1526.25" y="156.0" width="6.75" height="1.4" fill="#cadba2"/>
<rect x="1509.00" y="158.0" width="0.75" height="1.4" fill="#4fb3dd"/>
<rect x="1509.75" y="158.0" width="1.50" height="1.4" fill="#f0616d"/>
<rect x="1512.00" y="158.0" width="3.00" height="1.4" fill="#4fb3dd"/>
<rect x="1515.00" y="158.0" width="1.50" height="1.4" fill="#4fb3dd"/>
<rect x="1516.50" y="158.0" width="6.00" height="1.4" fill="#f0c880"/>
<rect x="1522.50" y="158.0" width="0.75" height="1.4" fill="#4fb3dd"/>
<rect x="1524.00" y="158.0" width="3.00" height="1.4" fill="#cadba2"/>
<rect x="1527.00" y="158.0" width="1.50" height="1.4" fill="#4fb3dd"/>
<rect x="1528.50" y="158.0" width="10.50" height="1.4" fill="#cadba2"/>
<rect x="1539.00" y="158.0" width="0.75" height="1.4" fill="#4fb3dd"/>
<rect x="1540.50" y="158.0" width="8.25" height="1.4" fill="#cadba2"/>
<rect x="1548.75" y="158.0" width="1.50" height="1.4" fill="#4fb3dd"/>
<rect x="1550.25" y="158.0" width="7.50" height="1.4" fill="#d3d8e0"/>
<rect x="1558.50" y="158.0" width="9.75" height="1.4" fill="#4fb3dd"/>
<rect x="1568.25" y="158.0" width="0.75" height="1.4" fill="#4fb3dd"/>
<rect x="1569.75" y="158.0" width="8.25" height="1.4" fill="#d3d8e0"/>
<rect x="1578.00" y="158.0" width="1.50" height="1.4" fill="#4fb3dd"/>
<rect x="1579.50" y="158.0" width="0.75" height="1.4" fill="#4fb3dd"/>
<rect x="1512.00" y="160.0" width="0.75" height="1.4" fill="#4fb3dd"/>
<rect x="1512.75" y="160.0" width="1.50" height="1.4" fill="#f0616d"/>
<rect x="1515.00" y="160.0" width="8.25" height="1.4" fill="#d3d8e0"/>
<rect x="1523.25" y="160.0" width="1.50" height="1.4" fill="#4fb3dd"/>
<rect x="1524.75" y="160.0" width="9.75" height="1.4" fill="#4fb3dd"/>
<rect x="1535.25" y="160.0" width="8.25" height="1.4" fill="#cadba2"/>
<rect x="1543.50" y="160.0" width="1.50" height="1.4" fill="#4fb3dd"/>
<rect x="1515.00" y="162.0" width="0.75" height="1.4" fill="#4fb3dd"/>
<rect x="1515.75" y="162.0" width="1.50" height="1.4" fill="#f0616d"/>
<rect x="1518.00" y="162.0" width="3.00" height="1.4" fill="#cadba2"/>
<rect x="1521.00" y="162.0" width="1.50" height="1.4" fill="#4fb3dd"/>
<rect x="1522.50" y="162.0" width="3.00" height="1.4" fill="#d3d8e0"/>
<rect x="1525.50" y="162.0" width="0.75" height="1.4" fill="#4fb3dd"/>
<rect x="1527.00" y="162.0" width="3.00" height="1.4" fill="#cadba2"/>
<rect x="1530.00" y="162.0" width="1.50" height="1.4" fill="#4fb3dd"/>
<rect x="1531.50" y="162.0" width="6.00" height="1.4" fill="#cadba2"/>
<rect x="1537.50" y="162.0" width="0.75" height="1.4" fill="#4fb3dd"/>
<rect x="1539.00" y="162.0" width="3.00" height="1.4" fill="#d3d8e0"/>
<rect x="1542.00" y="162.0" width="1.50" height="1.4" fill="#4fb3dd"/>
<rect x="1543.50" y="162.0" width="8.25" height="1.4" fill="#cadba2"/>
<rect x="1552.50" y="162.0" width="6.00" height="1.4" fill="#cadba2"/>
<rect x="1559.25" y="162.0" width="6.75" height="1.4" fill="#cadba2"/>
<rect x="1566.75" y="162.0" width="6.00" height="1.4" fill="#d3d8e0"/>
<rect x="1573.50" y="162.0" width="4.50" height="1.4" fill="#cadba2"/>
<rect x="1512.00" y="164.0" width="0.75" height="1.4" fill="#4fb3dd"/>
<rect x="1512.75" y="164.0" width="1.50" height="1.4" fill="#f0616d"/>
<rect x="1515.00" y="164.0" width="3.00" height="1.4" fill="#cadba2"/>
<rect x="1518.00" y="164.0" width="1.50" height="1.4" fill="#4fb3dd"/>
<rect x="1519.50" y="164.0" width="0.75" height="1.4" fill="#d3d8e0"/>
<rect x="1509.00" y="166.0" width="0.75" height="1.4" fill="#4fb3dd"/>
<rect x="1509.75" y="166.0" width="1.50" height="1.4" fill="#f0616d"/>
<rect x="1512.00" y="166.0" width="3.00" height="1.4" fill="#4fb3dd"/>
<rect x="1515.00" y="166.0" width="1.50" height="1.4" fill="#4fb3dd"/>
<rect x="1516.50" y="166.0" width="6.75" height="1.4" fill="#cadba2"/>
<rect x="1524.00" y="166.0" width="8.25" height="1.4" fill="#4fb3dd"/>
<rect x="1532.25" y="166.0" width="0.75" height="1.4" fill="#4fb3dd"/>
<rect x="1533.75" y="166.0" width="1.50" height="1.4" fill="#d3d8e0"/>
<rect x="1535.25" y="166.0" width="1.50" height="1.4" fill="#4fb3dd"/>
<rect x="1536.75" y="166.0" width="6.00" height="1.4" fill="#cadba2"/>
<rect x="1542.75" y="166.0" width="0.75" height="1.4" fill="#4fb3dd"/>
<rect x="1544.25" y="166.0" width="1.50" height="1.4" fill="#d3d8e0"/>
<rect x="1545.75" y="166.0" width="1.50" height="1.4" fill="#4fb3dd"/>
<rect x="1547.25" y="166.0" width="8.25" height="1.4" fill="#d3d8e0"/>
<rect x="1555.50" y="166.0" width="0.75" height="1.4" fill="#4fb3dd"/>
<rect x="1557.00" y="166.0" width="3.00" height="1.4" fill="#cadba2"/>
<rect x="1560.00" y="166.0" width="1.50" height="1.4" fill="#4fb3dd"/>
<rect x="1561.50" y="166.0" width="6.00" height="1.4" fill="#cadba2"/>
<rect x="1567.50" y="166.0" width="0.75" height="1.4" fill="#4fb3dd"/>
<rect x="1569.00" y="166.0" width="8.25" height="1.4" fill="#cadba2"/>
<rect x="1577.25" y="166.0" width="1.50" height="1.4" fill="#4fb3dd"/>
<rect x="1578.75" y="166.0" width="9.00" height="1.4" fill="#cadba2"/>
<rect x="1506.00" y="168.0" width="0.75" height="1.4" fill="#4fb3dd"/>
<rect x="1506.75" y="168.0" width="1.50" height="1.4" fill="#f0616d"/>
<rect x="1509.00" y="168.0" width="2.25" height="1.4" fill="#cadba2"/>
<rect x="1511.25" y="168.0" width="1.50" height="1.4" fill="#4fb3dd"/>
<rect x="1512.75" y="168.0" width="6.00" height="1.4" fill="#cadba2"/>
<rect x="1518.75" y="168.0" width="1.50" height="1.4" fill="#4fb3dd"/>
<rect x="1509.00" y="170.0" width="0.75" height="1.4" fill="#4fb3dd"/>
<rect x="1509.75" y="170.0" width="2.25" height="1.4" fill="#f0616d"/>
<rect x="1512.75" y="170.0" width="3.00" height="1.4" fill="#cadba2"/>
<rect x="1515.75" y="170.0" width="1.50" height="1.4" fill="#4fb3dd"/>
<rect x="1517.25" y="170.0" width="6.00" height="1.4" fill="#cadba2"/>
<rect x="1524.00" y="170.0" width="8.25" height="1.4" fill="#d3d8e0"/>
<rect x="1533.00" y="170.0" width="6.00" height="1.4" fill="#d3d8e0"/>
<rect x="1539.00" y="170.0" width="0.75" height="1.4" fill="#4fb3dd"/>
<rect x="1540.50" y="170.0" width="2.25" height="1.4" fill="#cadba2"/>
<rect x="1542.75" y="170.0" width="1.50" height="1.4" fill="#4fb3dd"/>
<rect x="1544.25" y="170.0" width="4.50" height="1.4" fill="#cadba2"/>
<rect x="1549.50" y="170.0" width="6.75" height="1.4" fill="#4fb3dd"/>
<rect x="1556.25" y="170.0" width="0.75" height="1.4" fill="#4fb3dd"/>
<rect x="1557.75" y="170.0" width="2.25" height="1.4" fill="#d3d8e0"/>
<rect x="1560.00" y="170.0" width="1.50" height="1.4" fill="#4fb3dd"/>
<rect x="1561.50" y="170.0" width="3.75" height="1.4" fill="#cadba2"/>
<rect x="1509.00" y="172.0" width="0.75" height="1.4" fill="#4fb3dd"/>
<rect x="1509.75" y="172.0" width="2.25" height="1.4" fill="#f0616d"/>
<rect x="1512.75" y="172.0" width="2.25" height="1.4" fill="#cadba2"/>
<rect x="1515.00" y="172.0" width="1.50" height="1.4" fill="#4fb3dd"/>
<rect x="1516.50" y="172.0" width="3.00" height="1.4" fill="#d3d8e0"/>
<rect x="1519.50" y="172.0" width="0.75" height="1.4" fill="#4fb3dd"/>
<rect x="1521.00" y="172.0" width="8.25" height="1.4" fill="#cadba2"/>
<rect x="1529.25" y="172.0" width="1.50" height="1.4" fill="#4fb3dd"/>
<rect x="1530.75" y="172.0" width="7.50" height="1.4" fill="#cadba2"/>
<rect x="1538.25" y="172.0" width="0.75" height="1.4" fill="#4fb3dd"/>
<rect x="1539.75" y="172.0" width="2.25" height="1.4" fill="#4fb3dd"/>
<rect x="1542.00" y="172.0" width="1.50" height="1.4" fill="#4fb3dd"/>
<rect x="1543.50" y="172.0" width="6.00" height="1.4" fill="#cadba2"/>
<rect x="1549.50" y="172.0" width="0.75" height="1.4" fill="#4fb3dd"/>
<rect x="1551.00" y="172.0" width="2.25" height="1.4" fill="#d3d8e0"/>
<rect x="1553.25" y="172.0" width="1.50" height="1.4" fill="#4fb3dd"/>
<rect x="1554.75" y="172.0" width="3.00" height="1.4" fill="#d3d8e0"/>
<rect x="1558.50" y="172.0" width="3.75" height="1.4" fill="#d3d8e0"/>
<rect x="1506.00" y="174.0" width="0.75" height="1.4" fill="#4fb3dd"/>
<rect x="1506.75" y="174.0" width="2.25" height="1.4" fill="#f0616d"/>
<rect x="1509.75" y="174.0" width="2.25" height="1.4" fill="#d3d8e0"/>
<rect x="1512.00" y="174.0" width="1.50" height="1.4" fill="#4fb3dd"/>
<rect x="1513.50" y="174.0" width="1.50" height="1.4" fill="#cadba2"/>
<rect x="1502.25" y="176.0" width="1.50" height="1.4" fill="#4fb3dd"/>
<rect x="1503.75" y="176.0" width="0.75" height="1.4" fill="#f0616d"/>
<rect x="1504.50" y="176.0" width="0.75" height="1.4" fill="#4fb3dd"/>
<rect x="1503.00" y="178.0" width="0.75" height="1.4" fill="#4fb3dd"/>
<rect x="1503.75" y="178.0" width="1.50" height="1.4" fill="#f0616d"/>
<rect x="1506.00" y="178.0" width="2.25" height="1.4" fill="#f0c880"/>
<rect x="1508.25" y="178.0" width="1.50" height="1.4" fill="#4fb3dd"/>
<rect x="1509.75" y="178.0" width="6.00" height="1.4" fill="#cadba2"/>
<rect x="1515.75" y="178.0" width="0.75" height="1.4" fill="#4fb3dd"/>
<rect x="1517.25" y="178.0" width="2.25" height="1.4" fill="#cadba2"/>
<rect x="1519.50" y="178.0" width="1.50" height="1.4" fill="#4fb3dd"/>
<rect x="1521.00" y="178.0" width="6.00" height="1.4" fill="#cadba2"/>
<rect x="1527.00" y="178.0" width="0.75" height="1.4" fill="#4fb3dd"/>
<rect x="1528.50" y="178.0" width="2.25" height="1.4" fill="#d3d8e0"/>
<rect x="1530.75" y="178.0" width="1.50" height="1.4" fill="#4fb3dd"/>
<rect x="1532.25" y="178.0" width="7.50" height="1.4" fill="#d3d8e0"/>
<rect x="1539.75" y="178.0" width="0.75" height="1.4" fill="#4fb3dd"/>
<rect x="1541.25" y="178.0" width="8.25" height="1.4" fill="#d3d8e0"/>
<rect x="1549.50" y="178.0" width="1.50" height="1.4" fill="#4fb3dd"/>
<rect x="1551.00" y="178.0" width="8.25" height="1.4" fill="#d3d8e0"/>
<rect x="1560.00" y="178.0" width="6.75" height="1.4" fill="#f0c880"/>
<rect x="1566.75" y="178.0" width="0.75" height="1.4" fill="#4fb3dd"/>
<rect x="1568.25" y="178.0" width="2.25" height="1.4" fill="#cadba2"/>
<rect x="1570.50" y="178.0" width="1.50" height="1.4" fill="#4fb3dd"/>
<rect x="1572.00" y="178.0" width="8.25" height="1.4" fill="#cadba2"/>
<rect x="1580.25" y="178.0" width="1.50" height="1.4" fill="#4fb3dd"/>
<rect x="1506.00" y="180.0" width="0.75" height="1.4" fill="#4fb3dd"/>
<rect x="1506.75" y="180.0" width="2.25" height="1.4" fill="#f0616d"/>
<rect x="1509.75" y="180.0" width="8.25" height="1.4" fill="#d3d8e0"/>
<rect x="1518.00" y="180.0" width="1.50" height="1.4" fill="#4fb3dd"/>
<rect x="1519.50" y="180.0" width="7.50" height="1.4" fill="#cadba2"/>
<rect x="1509.00" y="182.0" width="0.75" height="1.4" fill="#4fb3dd"/>
<rect x="1509.75" y="182.0" width="2.25" height="1.4" fill="#f0616d"/>
<rect x="1512.75" y="182.0" width="2.25" height="1.4" fill="#cadba2"/>
<rect x="1515.00" y="182.0" width="1.50" height="1.4" fill="#4fb3dd"/>
<rect x="1516.50" y="182.0" width="9.75" height="1.4" fill="#d3d8e0"/>
<rect x="1526.25" y="182.0" width="0.75" height="1.4" fill="#4fb3dd"/>
<rect x="1527.75" y="182.0" width="3.75" height="1.4" fill="#cadba2"/>
<rect x="1531.50" y="182.0" width="1.50" height="1.4" fill="#4fb3dd"/>
<rect x="1533.00" y="182.0" width="9.75" height="1.4" fill="#4fb3dd"/>
<rect x="1542.75" y="182.0" width="0.75" height="1.4" fill="#4fb3dd"/>
<rect x="1544.25" y="182.0" width="3.75" height="1.4" fill="#d3d8e0"/>
<rect x="1548.00" y="182.0" width="1.50" height="1.4" fill="#4fb3dd"/>
<rect x="1549.50" y="182.0" width="6.00" height="1.4" fill="#cadba2"/>
<rect x="1556.25" y="182.0" width="8.25" height="1.4" fill="#cadba2"/>
<rect x="1565.25" y="182.0" width="6.75" height="1.4" fill="#cadba2"/>
<rect x="1509.00" y="184.0" width="0.75" height="1.4" fill="#4fb3dd"/>
<rect x="1509.75" y="184.0" width="1.50" height="1.4" fill="#f0616d"/>
<rect x="1512.00" y="184.0" width="1.50" height="1.4" fill="#cadba2"/>
<rect x="1513.50" y="184.0" width="1.50" height="1.4" fill="#4fb3dd"/>
<rect x="1515.00" y="184.0" width="6.00" height="1.4" fill="#cadba2"/>
<rect x="1521.00" y="184.0" width="0.75" height="1.4" fill="#4fb3dd"/>
<rect x="1522.50" y="184.0" width="1.50" height="1.4" fill="#d3d8e0"/>
<rect x="1524.00" y="184.0" width="1.50" height="1.4" fill="#4fb3dd"/>
<rect x="1525.50" y="184.0" width="6.00" height="1.4" fill="#cadba2"/>
<rect x="1531.50" y="184.0" width="1.50" height="1.4" fill="#4fb3dd"/>
<rect x="1512.00" y="186.0" width="0.75" height="1.4" fill="#4fb3dd"/>
<rect x="1512.75" y="186.0" width="1.50" height="1.4" fill="#f0616d"/>
<rect x="1515.00" y="186.0" width="3.00" height="1.4" fill="#cadba2"/>
<rect x="1518.00" y="186.0" width="1.50" height="1.4" fill="#4fb3dd"/>
<rect x="1519.50" y="186.0" width="6.00" height="1.4" fill="#cadba2"/>
<rect x="1525.50" y="186.0" width="0.75" height="1.4" fill="#4fb3dd"/>
<rect x="1527.00" y="186.0" width="2.25" height="1.4" fill="#f0c880"/>
<rect x="1529.25" y="186.0" width="1.50" height="1.4" fill="#4fb3dd"/>
<rect x="1530.75" y="186.0" width="3.00" height="1.4" fill="#cadba2"/>
<rect x="1534.50" y="186.0" width="4.50" height="1.4" fill="#cadba2"/>
<rect x="1539.75" y="186.0" width="4.50" height="1.4" fill="#f0c880"/>
<rect x="1544.25" y="186.0" width="1.50" height="1.4" fill="#4fb3dd"/>
<rect x="1515.00" y="188.0" width="0.75" height="1.4" fill="#4fb3dd"/>
<rect x="1515.75" y="188.0" width="2.25" height="1.4" fill="#f0616d"/>
<rect x="1518.75" y="188.0" width="2.25" height="1.4" fill="#f0c880"/>
<rect x="1521.00" y="188.0" width="1.50" height="1.4" fill="#4fb3dd"/>
<rect x="1522.50" y="188.0" width="3.00" height="1.4" fill="#cadba2"/>
<rect x="1525.50" y="188.0" width="0.75" height="1.4" fill="#4fb3dd"/>
<rect x="1527.00" y="188.0" width="3.00" height="1.4" fill="#4fb3dd"/>
<rect x="1530.00" y="188.0" width="1.50" height="1.4" fill="#4fb3dd"/>
<rect x="1531.50" y="188.0" width="6.00" height="1.4" fill="#d3d8e0"/>
<rect x="1538.25" y="188.0" width="6.00" height="1.4" fill="#4fb3dd"/>
<rect x="1544.25" y="188.0" width="1.50" height="1.4" fill="#4fb3dd"/>
<rect x="1512.00" y="190.0" width="0.75" height="1.4" fill="#4fb3dd"/>
<rect x="1512.75" y="190.0" width="1.50" height="1.4" fill="#f0616d"/>
<rect x="1515.00" y="190.0" width="3.00" height="1.4" fill="#d3d8e0"/>
<rect x="1518.00" y="190.0" width="1.50" height="1.4" fill="#4fb3dd"/>
<rect x="1519.50" y="190.0" width="0.75" height="1.4" fill="#d3d8e0"/>
<rect x="1509.00" y="192.0" width="1.50" height="1.4" fill="#4fb3dd"/>
<rect x="1510.50" y="192.0" width="2.25" height="1.4" fill="#f0616d"/>
<rect x="1512.75" y="192.0" width="0.75" height="1.4" fill="#4fb3dd"/>
<rect x="1506.00" y="194.0" width="1.50" height="1.4" fill="#4fb3dd"/>
<rect x="1507.50" y="194.0" width="2.25" height="1.4" fill="#f0616d"/>
<rect x="1509.75" y="194.0" width="0.75" height="1.4" fill="#4fb3dd"/>
<rect x="1503.00" y="196.0" width="1.50" height="1.4" fill="#4fb3dd"/>
<rect x="1504.50" y="196.0" width="2.25" height="1.4" fill="#f0616d"/>
<rect x="1506.75" y="196.0" width="0.75" height="1.4" fill="#4fb3dd"/>
<rect x="1503.00" y="198.0" width="1.50" height="1.4" fill="#4fb3dd"/>
<rect x="1504.50" y="198.0" width="2.25" height="1.4" fill="#f0616d"/>
<rect x="1506.75" y="198.0" width="0.75" height="1.4" fill="#4fb3dd"/>
<rect x="1501.50" y="200.0" width="1.50" height="1.4" fill="#4fb3dd"/>
<rect x="1503.00" y="200.0" width="2.25" height="1.4" fill="#f0616d"/>
<rect x="1505.25" y="200.0" width="0.75" height="1.4" fill="#4fb3dd"/>
<rect x="1500.00" y="202.0" width="1.50" height="1.4" fill="#4fb3dd"/>
<rect x="1501.50" y="202.0" width="2.25" height="1.4" fill="#f0616d"/>
<rect x="1503.75" y="202.0" width="0.75" height="1.4" fill="#4fb3dd"/>
<rect x="1500.00" y="204.0" width="0.75" height="1.4" fill="#4fb3dd"/>
<rect x="1500.75" y="204.0" width="1.50" height="1.4" fill="#f0616d"/>
<rect x="1503.00" y="204.0" width="1.50" height="1.4" fill="#4fb3dd"/>
<rect x="1500.00" y="206.0" width="0.75" height="1.4" fill="#4fb3dd"/>
<rect x="1500.75" y="206.0" width="2.25" height="1.4" fill="#f0616d"/>
<rect x="1503.75" y="206.0" width="3.75" height="1.4" fill="#cadba2"/>
<rect x="1507.50" y="206.0" width="1.50" height="1.4" fill="#4fb3dd"/>
<rect x="1509.00" y="206.0" width="6.75" height="1.4" fill="#cadba2"/>
<rect x="1516.50" y="206.0" width="12.00" height="1.4" fill="#cadba2"/>
<rect x="1528.50" y="206.0" width="1.50" height="1.4" fill="#4fb3dd"/>
<rect x="1503.00" y="208.0" width="0.75" height="1.4" fill="#4fb3dd"/>
<rect x="1503.75" y="208.0" width="2.25" height="1.4" fill="#f0616d"/>
<rect x="1506.75" y="208.0" width="3.75" height="1.4" fill="#cadba2"/>
<rect x="1510.50" y="208.0" width="1.50" height="1.4" fill="#4fb3dd"/>
<rect x="1512.00" y="208.0" width="2.25" height="1.4" fill="#cadba2"/>
<rect x="1514.25" y="208.0" width="1.50" height="1.4" fill="#4fb3dd"/>
<rect x="1506.00" y="210.0" width="0.75" height="1.4" fill="#4fb3dd"/>
<rect x="1506.75" y="210.0" width="2.25" height="1.4" fill="#f0616d"/>
<rect x="1509.75" y="210.0" width="3.75" height="1.4" fill="#cadba2"/>
<rect x="1513.50" y="210.0" width="1.50" height="1.4" fill="#4fb3dd"/>
<rect x="1515.00" y="210.0" width="5.25" height="1.4" fill="#cadba2"/>
<rect x="1521.00" y="210.0" width="6.00" height="1.4" fill="#cadba2"/>
<rect x="1527.75" y="210.0" width="6.75" height="1.4" fill="#cadba2"/>
<rect x="1535.25" y="210.0" width="6.75" height="1.4" fill="#cadba2"/>
<rect x="1542.00" y="210.0" width="1.50" height="1.4" fill="#4fb3dd"/>
<rect x="1508.25" y="212.0" width="0.75" height="1.4" fill="#4fb3dd"/>
<rect x="1509.00" y="212.0" width="5.25" height="1.4" fill="#f0616d"/>
<rect x="1515.00" y="212.0" width="3.75" height="1.4" fill="#cadba2"/>
<rect x="1518.75" y="212.0" width="1.50" height="1.4" fill="#4fb3dd"/>
<rect x="1520.25" y="212.0" width="4.50" height="1.4" fill="#cadba2"/>
<rect x="1525.50" y="212.0" width="5.25" height="1.4" fill="#cadba2"/>
<rect x="1530.75" y="212.0" width="1.50" height="1.4" fill="#4fb3dd"/>
<rect x="1512.00" y="214.0" width="0.75" height="1.4" fill="#4fb3dd"/>
<rect x="1512.75" y="214.0" width="2.25" height="1.4" fill="#f0616d"/>
<rect x="1515.75" y="214.0" width="3.75" height="1.4" fill="#cadba2"/>
<rect x="1519.50" y="214.0" width="1.50" height="1.4" fill="#4fb3dd"/>
<rect x="1521.00" y="214.0" width="9.75" height="1.4" fill="#cadba2"/>
<rect x="1530.75" y="214.0" width="1.50" height="1.4" fill="#4fb3dd"/>
<rect x="1515.00" y="216.0" width="0.75" height="1.4" fill="#4fb3dd"/>
<rect x="1515.75" y="216.0" width="2.25" height="1.4" fill="#f0616d"/>
<rect x="1518.75" y="216.0" width="3.75" height="1.4" fill="#cadba2"/>
<rect x="1522.50" y="216.0" width="1.50" height="1.4" fill="#4fb3dd"/>
<rect x="1524.00" y="216.0" width="5.25" height="1.4" fill="#cadba2"/>
<rect x="1529.25" y="216.0" width="1.50" height="1.4" fill="#4fb3dd"/>
<rect x="1515.00" y="218.0" width="0.75" height="1.4" fill="#4fb3dd"/>
<rect x="1515.75" y="218.0" width="1.50" height="1.4" fill="#f0616d"/>
<rect x="1518.00" y="218.0" width="3.75" height="1.4" fill="#cadba2"/>
<rect x="1521.75" y="218.0" width="1.50" height="1.4" fill="#4fb3dd"/>
<rect x="1523.25" y="218.0" width="7.50" height="1.4" fill="#cadba2"/>
<rect x="1530.75" y="218.0" width="1.50" height="1.4" fill="#4fb3dd"/>
<rect x="1518.00" y="220.0" width="0.75" height="1.4" fill="#4fb3dd"/>
<rect x="1518.75" y="220.0" width="1.50" height="1.4" fill="#f0616d"/>
<rect x="1520.25" y="220.0" width="1.50" height="1.4" fill="#4fb3dd"/>
<rect x="1521.75" y="220.0" width="0.75" height="1.4" fill="#f0616d"/>
<rect x="1523.25" y="220.0" width="3.00" height="1.4" fill="#cadba2"/>
<rect x="1526.25" y="220.0" width="1.50" height="1.4" fill="#4fb3dd"/>
<rect x="1527.75" y="220.0" width="3.75" height="1.4" fill="#f0c880"/>
<rect x="1532.25" y="220.0" width="3.00" height="1.4" fill="#6a9fd4"/>
<rect x="1536.00" y="220.0" width="2.25" height="1.4" fill="#d3d8e0"/>
<rect x="1538.25" y="220.0" width="2.25" height="1.4" fill="#4fb3dd"/>
<rect x="1541.25" y="220.0" width="1.50" height="1.4" fill="#f0c880"/>
<rect x="1542.75" y="220.0" width="1.50" height="1.4" fill="#4fb3dd"/>
<rect x="1544.25" y="220.0" width="5.25" height="1.4" fill="#d3d8e0"/>
<rect x="1549.50" y="220.0" width="1.50" height="1.4" fill="#4fb3dd"/>
<rect x="1551.00" y="220.0" width="0.75" height="1.4" fill="#f0616d"/>
<rect x="1551.75" y="220.0" width="2.25" height="1.4" fill="#4fb3dd"/>
<rect x="1554.00" y="220.0" width="1.50" height="1.4" fill="#f0616d"/>
<rect x="1555.50" y="220.0" width="0.75" height="1.4" fill="#4fb3dd"/>
<rect x="1518.00" y="222.0" width="0.75" height="1.4" fill="#4fb3dd"/>
<rect x="1518.75" y="222.0" width="1.50" height="1.4" fill="#f0616d"/>
<rect x="1521.00" y="222.0" width="3.75" height="1.4" fill="#cadba2"/>
<rect x="1524.75" y="222.0" width="1.50" height="1.4" fill="#4fb3dd"/>
<rect x="1526.25" y="222.0" width="4.50" height="1.4" fill="#cadba2"/>
<rect x="1530.75" y="222.0" width="1.50" height="1.4" fill="#4fb3dd"/>
<rect x="1532.25" y="222.0" width="7.50" height="1.4" fill="#d3d8e0"/>
<rect x="1540.50" y="222.0" width="6.75" height="1.4" fill="#d3d8e0"/>
<rect x="1548.00" y="222.0" width="9.75" height="1.4" fill="#d3d8e0"/>
<rect x="1558.50" y="222.0" width="0.75" height="1.4" fill="#d3d8e0"/>
<rect x="1560.00" y="222.0" width="6.00" height="1.4" fill="#d3d8e0"/>
<rect x="1566.75" y="222.0" width="5.25" height="1.4" fill="#d3d8e0"/>
<rect x="1572.00" y="222.0" width="1.50" height="1.4" fill="#4fb3dd"/>
<rect x="1573.50" y="222.0" width="1.50" height="1.4" fill="#f0616d"/>
<rect x="1575.00" y="222.0" width="0.75" height="1.4" fill="#4fb3dd"/>
<rect x="1516.50" y="224.0" width="1.50" height="1.4" fill="#4fb3dd"/>
<rect x="1518.00" y="224.0" width="1.50" height="1.4" fill="#f0616d"/>
<rect x="1519.50" y="224.0" width="0.75" height="1.4" fill="#4fb3dd"/>
<rect x="1518.00" y="226.0" width="0.75" height="1.4" fill="#4fb3dd"/>
<rect x="1518.75" y="226.0" width="1.50" height="1.4" fill="#f0616d"/>
<rect x="1521.00" y="226.0" width="3.75" height="1.4" fill="#cadba2"/>
<rect x="1524.75" y="226.0" width="1.50" height="1.4" fill="#4fb3dd"/>
<rect x="1526.25" y="226.0" width="5.25" height="1.4" fill="#cadba2"/>
<rect x="1531.50" y="226.0" width="1.50" height="1.4" fill="#4fb3dd"/>
<rect x="1533.00" y="226.0" width="6.00" height="1.4" fill="#d3d8e0"/>
<rect x="1539.75" y="226.0" width="4.50" height="1.4" fill="#d3d8e0"/>
<rect x="1545.00" y="226.0" width="1.50" height="1.4" fill="#d3d8e0"/>
<rect x="1547.25" y="226.0" width="3.75" height="1.4" fill="#d3d8e0"/>
<rect x="1551.75" y="226.0" width="0.75" height="1.4" fill="#d3d8e0"/>
<rect x="1552.50" y="226.0" width="1.50" height="1.4" fill="#4fb3dd"/>
<rect x="1554.00" y="226.0" width="1.50" height="1.4" fill="#f0616d"/>
<rect x="1555.50" y="226.0" width="0.75" height="1.4" fill="#4fb3dd"/>
<rect x="1518.00" y="228.0" width="0.75" height="1.4" fill="#4fb3dd"/>
<rect x="1518.75" y="228.0" width="1.50" height="1.4" fill="#f0616d"/>
<rect x="1520.25" y="228.0" width="0.75" height="1.4" fill="#4fb3dd"/>
<rect x="1521.00" y="228.0" width="3.00" height="1.4" fill="#d3d8e0"/>
<rect x="1524.75" y="228.0" width="1.50" height="1.4" fill="#d3d8e0"/>
<rect x="1527.00" y="228.0" width="9.75" height="1.4" fill="#d3d8e0"/>
<rect x="1537.50" y="228.0" width="0.75" height="1.4" fill="#d3d8e0"/>
<rect x="1538.25" y="228.0" width="1.50" height="1.4" fill="#4fb3dd"/>
<rect x="1539.75" y="228.0" width="1.50" height="1.4" fill="#f0616d"/>
<rect x="1541.25" y="228.0" width="0.75" height="1.4" fill="#4fb3dd"/>
<rect x="1518.00" y="230.0" width="0.75" height="1.4" fill="#4fb3dd"/>
<rect x="1518.75" y="230.0" width="0.75" height="1.4" fill="#f0616d"/>
<rect x="1519.50" y="230.0" width="0.75" height="1.4" fill="#4fb3dd"/>
<rect x="1521.00" y="232.0" width="0.75" height="1.4" fill="#4fb3dd"/>
<rect x="1521.75" y="232.0" width="1.50" height="1.4" fill="#f0616d"/>
<rect x="1523.25" y="232.0" width="0.75" height="1.4" fill="#4fb3dd"/>
<rect x="1524.00" y="234.0" width="0.75" height="1.4" fill="#4fb3dd"/>
<rect x="1524.75" y="234.0" width="1.50" height="1.4" fill="#f0616d"/>
<rect x="1526.25" y="234.0" width="0.75" height="1.4" fill="#4fb3dd"/>
<rect x="1527.00" y="234.0" width="1.50" height="1.4" fill="#d3d8e0"/>
<rect x="1529.25" y="234.0" width="3.00" height="1.4" fill="#d3d8e0"/>
<rect x="1533.00" y="234.0" width="3.00" height="1.4" fill="#d3d8e0"/>
<rect x="1536.75" y="234.0" width="4.50" height="1.4" fill="#d3d8e0"/>
<rect x="1542.00" y="234.0" width="0.75" height="1.4" fill="#d3d8e0"/>
<rect x="1543.50" y="234.0" width="3.75" height="1.4" fill="#d3d8e0"/>
<rect x="1548.00" y="234.0" width="5.25" height="1.4" fill="#d3d8e0"/>
<rect x="1554.00" y="234.0" width="3.00" height="1.4" fill="#d3d8e0"/>
<rect x="1557.75" y="234.0" width="1.50" height="1.4" fill="#d3d8e0"/>
<rect x="1560.00" y="234.0" width="1.50" height="1.4" fill="#d3d8e0"/>
<rect x="1562.25" y="234.0" width="4.50" height="1.4" fill="#d3d8e0"/>
<rect x="1567.50" y="234.0" width="5.25" height="1.4" fill="#d3d8e0"/>
<rect x="1573.50" y="234.0" width="3.75" height="1.4" fill="#d3d8e0"/>
<rect x="1578.00" y="234.0" width="4.50" height="1.4" fill="#d3d8e0"/>
<rect x="1583.25" y="234.0" width="1.50" height="1.4" fill="#d3d8e0"/>
<rect x="1585.50" y="234.0" width="1.50" height="1.4" fill="#d3d8e0"/>
<rect x="1587.75" y="234.0" width="3.00" height="1.4" fill="#d3d8e0"/>
<rect x="1591.50" y="234.0" width="1.50" height="1.4" fill="#d3d8e0"/>
<rect x="1524.00" y="236.0" width="9.75" height="1.4" fill="#d3d8e0"/>
<rect x="1534.50" y="236.0" width="3.00" height="1.4" fill="#d3d8e0"/>
<rect x="1538.25" y="236.0" width="2.25" height="1.4" fill="#d3d8e0"/>
<rect x="1541.25" y="236.0" width="0.75" height="1.4" fill="#d3d8e0"/>
<rect x="1542.75" y="236.0" width="3.75" height="1.4" fill="#d3d8e0"/>
<rect x="1547.25" y="236.0" width="2.25" height="1.4" fill="#d3d8e0"/>
<rect x="1550.25" y="236.0" width="6.00" height="1.4" fill="#d3d8e0"/>
<rect x="1557.00" y="236.0" width="1.50" height="1.4" fill="#d3d8e0"/>
<rect x="1559.25" y="236.0" width="4.50" height="1.4" fill="#d3d8e0"/>
<rect x="1564.50" y="236.0" width="3.00" height="1.4" fill="#d3d8e0"/>
<rect x="1568.25" y="236.0" width="6.75" height="1.4" fill="#d3d8e0"/>
<rect x="1575.00" y="236.0" width="1.50" height="1.4" fill="#4fb3dd"/>
<rect x="1576.50" y="236.0" width="1.50" height="1.4" fill="#f0616d"/>
<rect x="1578.00" y="236.0" width="0.75" height="1.4" fill="#4fb3dd"/>
<rect x="1524.00" y="238.0" width="0.75" height="1.4" fill="#4fb3dd"/>
<rect x="1524.75" y="238.0" width="1.50" height="1.4" fill="#f0616d"/>
<rect x="1527.00" y="238.0" width="1.50" height="1.4" fill="#4fb3dd"/>
<rect x="1524.00" y="240.0" width="0.75" height="1.4" fill="#4fb3dd"/>
<rect x="1524.75" y="240.0" width="1.50" height="1.4" fill="#f0616d"/>
<rect x="1526.25" y="240.0" width="0.75" height="1.4" fill="#4fb3dd"/>
<rect x="1527.00" y="240.0" width="3.75" height="1.4" fill="#d3d8e0"/>
<rect x="1531.50" y="240.0" width="6.00" height="1.4" fill="#d3d8e0"/>
<rect x="1538.25" y="240.0" width="6.75" height="1.4" fill="#d3d8e0"/>
<rect x="1545.75" y="240.0" width="1.50" height="1.4" fill="#d3d8e0"/>
<rect x="1548.00" y="240.0" width="4.50" height="1.4" fill="#d3d8e0"/>
<rect x="1553.25" y="240.0" width="6.75" height="1.4" fill="#d3d8e0"/>
<rect x="1560.75" y="240.0" width="1.50" height="1.4" fill="#d3d8e0"/>
<rect x="1563.00" y="240.0" width="6.75" height="1.4" fill="#d3d8e0"/>
<rect x="1570.50" y="240.0" width="3.75" height="1.4" fill="#d3d8e0"/>
<rect x="1575.00" y="240.0" width="4.50" height="1.4" fill="#d3d8e0"/>
<rect x="1580.25" y="240.0" width="2.25" height="1.4" fill="#d3d8e0"/>
<rect x="1583.25" y="240.0" width="4.50" height="1.4" fill="#d3d8e0"/>
<rect x="1588.50" y="240.0" width="3.00" height="1.4" fill="#d3d8e0"/>
<rect x="1592.25" y="240.0" width="3.75" height="1.4" fill="#d3d8e0"/>
<rect x="1524.00" y="242.0" width="4.50" height="1.4" fill="#d3d8e0"/>
<rect x="1529.25" y="242.0" width="3.75" height="1.4" fill="#d3d8e0"/>
<rect x="1533.75" y="242.0" width="1.50" height="1.4" fill="#d3d8e0"/>
<rect x="1536.00" y="242.0" width="1.50" height="1.4" fill="#d3d8e0"/>
<rect x="1538.25" y="242.0" width="8.25" height="1.4" fill="#d3d8e0"/>
<rect x="1547.25" y="242.0" width="1.50" height="1.4" fill="#d3d8e0"/>
<rect x="1549.50" y="242.0" width="5.25" height="1.4" fill="#d3d8e0"/>
<rect x="1554.75" y="242.0" width="1.50" height="1.4" fill="#4fb3dd"/>
<rect x="1556.25" y="242.0" width="1.50" height="1.4" fill="#f0616d"/>
<rect x="1557.75" y="242.0" width="0.75" height="1.4" fill="#4fb3dd"/>
<rect x="1521.00" y="244.0" width="1.50" height="1.4" fill="#4fb3dd"/>
<rect x="1522.50" y="244.0" width="1.50" height="1.4" fill="#f0616d"/>
<rect x="1524.00" y="244.0" width="0.75" height="1.4" fill="#4fb3dd"/>
<rect x="1518.00" y="246.0" width="1.50" height="1.4" fill="#4fb3dd"/>
<rect x="1519.50" y="246.0" width="0.75" height="1.4" fill="#f0616d"/>
<rect x="1520.25" y="246.0" width="0.75" height="1.4" fill="#4fb3dd"/>
<rect x="1518.00" y="248.0" width="0.75" height="1.4" fill="#4fb3dd"/>
<rect x="1518.75" y="248.0" width="1.50" height="1.4" fill="#f0616d"/>
<rect x="1521.00" y="248.0" width="1.50" height="1.4" fill="#4fb3dd"/>
<rect x="1518.00" y="250.0" width="0.75" height="1.4" fill="#4fb3dd"/>
<rect x="1518.75" y="250.0" width="1.50" height="1.4" fill="#f0616d"/>
<rect x="1520.25" y="250.0" width="0.75" height="1.4" fill="#4fb3dd"/>
<rect x="1521.00" y="250.0" width="3.00" height="1.4" fill="#d3d8e0"/>
<rect x="1524.75" y="250.0" width="6.00" height="1.4" fill="#d3d8e0"/>
<rect x="1531.50" y="250.0" width="8.25" height="1.4" fill="#d3d8e0"/>
<rect x="1540.50" y="250.0" width="0.75" height="1.4" fill="#d3d8e0"/>
<rect x="1541.25" y="250.0" width="1.50" height="1.4" fill="#4fb3dd"/>
<rect x="1542.75" y="250.0" width="1.50" height="1.4" fill="#f0616d"/>
<rect x="1544.25" y="250.0" width="0.75" height="1.4" fill="#4fb3dd"/>
<rect x="1518.00" y="252.0" width="0.75" height="1.4" fill="#4fb3dd"/>
<rect x="1518.75" y="252.0" width="0.75" height="1.4" fill="#f0616d"/>
<rect x="1519.50" y="252.0" width="0.75" height="1.4" fill="#4fb3dd"/>
<rect x="1521.00" y="254.0" width="0.75" height="1.4" fill="#4fb3dd"/>
<rect x="1521.75" y="254.0" width="1.50" height="1.4" fill="#f0616d"/>
<rect x="1523.25" y="254.0" width="0.75" height="1.4" fill="#4fb3dd"/>
<rect x="1524.00" y="256.0" width="0.75" height="1.4" fill="#4fb3dd"/>
<rect x="1524.75" y="256.0" width="1.50" height="1.4" fill="#f0616d"/>
<rect x="1526.25" y="256.0" width="0.75" height="1.4" fill="#4fb3dd"/>
<rect x="1527.00" y="256.0" width="1.50" height="1.4" fill="#d3d8e0"/>
<rect x="1529.25" y="256.0" width="4.50" height="1.4" fill="#d3d8e0"/>
<rect x="1534.50" y="256.0" width="8.25" height="1.4" fill="#d3d8e0"/>
<rect x="1543.50" y="256.0" width="0.75" height="1.4" fill="#d3d8e0"/>
<rect x="1545.00" y="256.0" width="2.25" height="1.4" fill="#d3d8e0"/>
<rect x="1548.00" y="256.0" width="2.25" height="1.4" fill="#d3d8e0"/>
<rect x="1551.00" y="256.0" width="0.75" height="1.4" fill="#d3d8e0"/>
<rect x="1552.50" y="256.0" width="3.75" height="1.4" fill="#d3d8e0"/>
<rect x="1557.00" y="256.0" width="8.25" height="1.4" fill="#d3d8e0"/>
<rect x="1566.00" y="256.0" width="3.00" height="1.4" fill="#d3d8e0"/>
<rect x="1569.75" y="256.0" width="1.50" height="1.4" fill="#d3d8e0"/>
<rect x="1572.00" y="256.0" width="4.50" height="1.4" fill="#d3d8e0"/>
<rect x="1577.25" y="256.0" width="2.25" height="1.4" fill="#d3d8e0"/>
<rect x="1580.25" y="256.0" width="3.00" height="1.4" fill="#d3d8e0"/>
<rect x="1584.00" y="256.0" width="1.50" height="1.4" fill="#d3d8e0"/>
<rect x="1586.25" y="256.0" width="1.50" height="1.4" fill="#d3d8e0"/>
<rect x="1588.50" y="256.0" width="5.25" height="1.4" fill="#d3d8e0"/>
<rect x="1524.00" y="258.0" width="6.75" height="1.4" fill="#d3d8e0"/>
<rect x="1531.50" y="258.0" width="2.25" height="1.4" fill="#d3d8e0"/>
<rect x="1534.50" y="258.0" width="3.00" height="1.4" fill="#d3d8e0"/>
<rect x="1538.25" y="258.0" width="1.50" height="1.4" fill="#d3d8e0"/>
<rect x="1540.50" y="258.0" width="1.50" height="1.4" fill="#d3d8e0"/>
<rect x="1542.75" y="258.0" width="3.00" height="1.4" fill="#d3d8e0"/>
<rect x="1546.50" y="258.0" width="1.50" height="1.4" fill="#d3d8e0"/>
<rect x="1548.75" y="258.0" width="6.00" height="1.4" fill="#d3d8e0"/>
<rect x="1555.50" y="258.0" width="2.25" height="1.4" fill="#d3d8e0"/>
<rect x="1558.50" y="258.0" width="0.75" height="1.4" fill="#d3d8e0"/>
<rect x="1560.00" y="258.0" width="6.75" height="1.4" fill="#d3d8e0"/>
<rect x="1567.50" y="258.0" width="0.75" height="1.4" fill="#d3d8e0"/>
<rect x="1569.00" y="258.0" width="6.75" height="1.4" fill="#d3d8e0"/>
<rect x="1576.50" y="258.0" width="3.00" height="1.4" fill="#d3d8e0"/>
<rect x="1580.25" y="258.0" width="3.00" height="1.4" fill="#d3d8e0"/>
<rect x="1584.00" y="258.0" width="7.50" height="1.4" fill="#d3d8e0"/>
<rect x="1592.25" y="258.0" width="6.75" height="1.4" fill="#d3d8e0"/>
<rect x="1524.00" y="260.0" width="2.25" height="1.4" fill="#d3d8e0"/>
<rect x="1527.00" y="260.0" width="1.50" height="1.4" fill="#d3d8e0"/>
<rect x="1529.25" y="260.0" width="3.75" height="1.4" fill="#d3d8e0"/>
<rect x="1533.75" y="260.0" width="2.25" height="1.4" fill="#d3d8e0"/>
<rect x="1536.75" y="260.0" width="10.50" height="1.4" fill="#d3d8e0"/>
<rect x="1548.00" y="260.0" width="3.00" height="1.4" fill="#d3d8e0"/>
<rect x="1551.75" y="260.0" width="5.25" height="1.4" fill="#d3d8e0"/>
<rect x="1557.75" y="260.0" width="3.00" height="1.4" fill="#d3d8e0"/>
<rect x="1561.50" y="260.0" width="1.50" height="1.4" fill="#d3d8e0"/>
<rect x="1563.75" y="260.0" width="2.25" height="1.4" fill="#d3d8e0"/>
<rect x="1566.75" y="260.0" width="5.25" height="1.4" fill="#d3d8e0"/>
<rect x="1572.75" y="260.0" width="3.00" height="1.4" fill="#d3d8e0"/>
<rect x="1576.50" y="260.0" width="2.25" height="1.4" fill="#d3d8e0"/>
<rect x="1579.50" y="260.0" width="6.75" height="1.4" fill="#d3d8e0"/>
<rect x="1587.00" y="260.0" width="6.75" height="1.4" fill="#d3d8e0"/>
<rect x="1594.50" y="260.0" width="1.50" height="1.4" fill="#d3d8e0"/>
<rect x="1524.00" y="262.0" width="6.75" height="1.4" fill="#d3d8e0"/>
<rect x="1531.50" y="262.0" width="2.25" height="1.4" fill="#d3d8e0"/>
<rect x="1534.50" y="262.0" width="6.00" height="1.4" fill="#d3d8e0"/>
<rect x="1541.25" y="262.0" width="2.25" height="1.4" fill="#d3d8e0"/>
<rect x="1544.25" y="262.0" width="4.50" height="1.4" fill="#d3d8e0"/>
<rect x="1549.50" y="262.0" width="1.50" height="1.4" fill="#d3d8e0"/>
<rect x="1551.75" y="262.0" width="7.50" height="1.4" fill="#d3d8e0"/>
<rect x="1560.00" y="262.0" width="3.00" height="1.4" fill="#d3d8e0"/>
<rect x="1563.75" y="262.0" width="11.25" height="1.4" fill="#d3d8e0"/>
<rect x="1575.75" y="262.0" width="7.50" height="1.4" fill="#d3d8e0"/>
<rect x="1584.00" y="262.0" width="1.50" height="1.4" fill="#d3d8e0"/>
<rect x="1586.25" y="262.0" width="4.50" height="1.4" fill="#d3d8e0"/>
<rect x="1591.50" y="262.0" width="6.75" height="1.4" fill="#d3d8e0"/>
<rect x="1524.00" y="264.0" width="6.00" height="1.4" fill="#d3d8e0"/>
<rect x="1530.75" y="264.0" width="2.25" height="1.4" fill="#d3d8e0"/>
<rect x="1533.75" y="264.0" width="8.25" height="1.4" fill="#d3d8e0"/>
<rect x="1542.75" y="264.0" width="3.00" height="1.4" fill="#d3d8e0"/>
<rect x="1546.50" y="264.0" width="1.50" height="1.4" fill="#d3d8e0"/>
<rect x="1548.75" y="264.0" width="6.00" height="1.4" fill="#d3d8e0"/>
<rect x="1555.50" y="264.0" width="3.00" height="1.4" fill="#d3d8e0"/>
<rect x="1559.25" y="264.0" width="1.50" height="1.4" fill="#d3d8e0"/>
<rect x="1561.50" y="264.0" width="6.75" height="1.4" fill="#d3d8e0"/>
<rect x="1569.00" y="264.0" width="2.25" height="1.4" fill="#d3d8e0"/>
<rect x="1572.00" y="264.0" width="6.00" height="1.4" fill="#d3d8e0"/>
<rect x="1578.75" y="264.0" width="3.00" height="1.4" fill="#d3d8e0"/>
<rect x="1582.50" y="264.0" width="11.25" height="1.4" fill="#d3d8e0"/>
<rect x="1593.75" y="264.0" width="1.50" height="1.4" fill="#4fb3dd"/>
<rect x="1595.25" y="264.0" width="1.50" height="1.4" fill="#f0616d"/>
<rect x="1596.75" y="264.0" width="0.75" height="1.4" fill="#4fb3dd"/>
<rect x="1524.00" y="266.0" width="0.75" height="1.4" fill="#4fb3dd"/>
<rect x="1524.75" y="266.0" width="1.50" height="1.4" fill="#f0616d"/>
<rect x="1527.00" y="266.0" width="1.50" height="1.4" fill="#4fb3dd"/>
<rect x="1524.00" y="268.0" width="1.50" height="1.4" fill="#4fb3dd"/>
<rect x="1525.50" y="268.0" width="1.50" height="1.4" fill="#f0616d"/>
<rect x="1527.00" y="268.0" width="0.75" height="1.4" fill="#4fb3dd"/>
<rect x="1521.00" y="270.0" width="1.50" height="1.4" fill="#4fb3dd"/>
<rect x="1522.50" y="270.0" width="1.50" height="1.4" fill="#f0616d"/>
<rect x="1524.00" y="270.0" width="0.75" height="1.4" fill="#4fb3dd"/>
<rect x="1518.00" y="272.0" width="1.50" height="1.4" fill="#4fb3dd"/>
<rect x="1519.50" y="272.0" width="0.75" height="1.4" fill="#f0616d"/>
<rect x="1520.25" y="272.0" width="0.75" height="1.4" fill="#4fb3dd"/>
<rect x="1518.00" y="274.0" width="0.75" height="1.4" fill="#4fb3dd"/>
<rect x="1518.75" y="274.0" width="1.50" height="1.4" fill="#f0616d"/>
<rect x="1521.00" y="274.0" width="1.50" height="1.4" fill="#4fb3dd"/>
<rect x="1518.00" y="276.0" width="0.75" height="1.4" fill="#4fb3dd"/>
<rect x="1518.75" y="276.0" width="1.50" height="1.4" fill="#f0616d"/>
<rect x="1520.25" y="276.0" width="0.75" height="1.4" fill="#4fb3dd"/>
<rect x="1521.00" y="276.0" width="3.00" height="1.4" fill="#d3d8e0"/>
<rect x="1524.75" y="276.0" width="1.50" height="1.4" fill="#d3d8e0"/>
<rect x="1527.00" y="276.0" width="6.00" height="1.4" fill="#d3d8e0"/>
<rect x="1533.75" y="276.0" width="5.25" height="1.4" fill="#d3d8e0"/>
<rect x="1539.75" y="276.0" width="0.75" height="1.4" fill="#d3d8e0"/>
<rect x="1540.50" y="276.0" width="1.50" height="1.4" fill="#4fb3dd"/>
<rect x="1542.00" y="276.0" width="1.50" height="1.4" fill="#f0616d"/>
<rect x="1543.50" y="276.0" width="0.75" height="1.4" fill="#4fb3dd"/>
<rect x="1518.00" y="278.0" width="0.75" height="1.4" fill="#4fb3dd"/>
<rect x="1518.75" y="278.0" width="0.75" height="1.4" fill="#f0616d"/>
<rect x="1519.50" y="278.0" width="0.75" height="1.4" fill="#4fb3dd"/>
<rect x="1521.00" y="280.0" width="0.75" height="1.4" fill="#4fb3dd"/>
<rect x="1521.75" y="280.0" width="1.50" height="1.4" fill="#f0616d"/>
<rect x="1523.25" y="280.0" width="0.75" height="1.4" fill="#4fb3dd"/>
<rect x="1524.00" y="282.0" width="0.75" height="1.4" fill="#4fb3dd"/>
<rect x="1524.75" y="282.0" width="1.50" height="1.4" fill="#f0616d"/>
<rect x="1526.25" y="282.0" width="0.75" height="1.4" fill="#4fb3dd"/>
<rect x="1527.00" y="282.0" width="1.50" height="1.4" fill="#d3d8e0"/>
<rect x="1529.25" y="282.0" width="1.50" height="1.4" fill="#d3d8e0"/>
<rect x="1531.50" y="282.0" width="1.50" height="1.4" fill="#d3d8e0"/>
<rect x="1533.75" y="282.0" width="2.25" height="1.4" fill="#d3d8e0"/>
<rect x="1536.75" y="282.0" width="5.25" height="1.4" fill="#d3d8e0"/>
<rect x="1542.75" y="282.0" width="4.50" height="1.4" fill="#d3d8e0"/>
<rect x="1548.00" y="282.0" width="5.25" height="1.4" fill="#d3d8e0"/>
<rect x="1554.00" y="282.0" width="1.50" height="1.4" fill="#d3d8e0"/>
<rect x="1556.25" y="282.0" width="3.00" height="1.4" fill="#d3d8e0"/>
<rect x="1560.00" y="282.0" width="6.00" height="1.4" fill="#d3d8e0"/>
<rect x="1566.75" y="282.0" width="4.50" height="1.4" fill="#d3d8e0"/>
<rect x="1572.00" y="282.0" width="5.25" height="1.4" fill="#d3d8e0"/>
<rect x="1578.00" y="282.0" width="2.25" height="1.4" fill="#d3d8e0"/>
<rect x="1581.00" y="282.0" width="3.75" height="1.4" fill="#d3d8e0"/>
<rect x="1585.50" y="282.0" width="1.50" height="1.4" fill="#d3d8e0"/>
<rect x="1587.75" y="282.0" width="5.25" height="1.4" fill="#d3d8e0"/>
<rect x="1593.75" y="282.0" width="4.50" height="1.4" fill="#d3d8e0"/>
<rect x="1524.00" y="284.0" width="3.00" height="1.4" fill="#d3d8e0"/>
<rect x="1527.75" y="284.0" width="1.50" height="1.4" fill="#d3d8e0"/>
<rect x="1530.00" y="284.0" width="1.50" height="1.4" fill="#d3d8e0"/>
<rect x="1532.25" y="284.0" width="4.50" height="1.4" fill="#d3d8e0"/>
<rect x="1537.50" y="284.0" width="5.25" height="1.4" fill="#d3d8e0"/>
<rect x="1543.50" y="284.0" width="1.50" height="1.4" fill="#d3d8e0"/>
<rect x="1545.75" y="284.0" width="1.50" height="1.4" fill="#d3d8e0"/>
<rect x="1548.00" y="284.0" width="2.25" height="1.4" fill="#d3d8e0"/>
<rect x="1551.00" y="284.0" width="1.50" height="1.4" fill="#d3d8e0"/>
<rect x="1553.25" y="284.0" width="3.00" height="1.4" fill="#d3d8e0"/>
<rect x="1556.25" y="284.0" width="1.50" height="1.4" fill="#4fb3dd"/>
<rect x="1557.75" y="284.0" width="1.50" height="1.4" fill="#f0616d"/>
<rect x="1559.25" y="284.0" width="0.75" height="1.4" fill="#4fb3dd"/>
<rect x="1524.00" y="286.0" width="0.75" height="1.4" fill="#4fb3dd"/>
<rect x="1524.75" y="286.0" width="1.50" height="1.4" fill="#f0616d"/>
<rect x="1527.00" y="286.0" width="1.50" height="1.4" fill="#4fb3dd"/>
<rect x="1524.00" y="288.0" width="0.75" height="1.4" fill="#4fb3dd"/>
<rect x="1524.75" y="288.0" width="1.50" height="1.4" fill="#f0616d"/>
<rect x="1526.25" y="288.0" width="0.75" height="1.4" fill="#4fb3dd"/>
<rect x="1527.00" y="288.0" width="0.75" height="1.4" fill="#d3d8e0"/>
<rect x="1528.50" y="288.0" width="4.50" height="1.4" fill="#d3d8e0"/>
<rect x="1533.75" y="288.0" width="6.00" height="1.4" fill="#d3d8e0"/>
<rect x="1540.50" y="288.0" width="3.00" height="1.4" fill="#d3d8e0"/>
<rect x="1544.25" y="288.0" width="4.50" height="1.4" fill="#d3d8e0"/>
<rect x="1549.50" y="288.0" width="1.50" height="1.4" fill="#d3d8e0"/>
<rect x="1551.75" y="288.0" width="4.50" height="1.4" fill="#d3d8e0"/>
<rect x="1557.00" y="288.0" width="4.50" height="1.4" fill="#d3d8e0"/>
<rect x="1562.25" y="288.0" width="4.50" height="1.4" fill="#d3d8e0"/>
<rect x="1567.50" y="288.0" width="1.50" height="1.4" fill="#d3d8e0"/>
<rect x="1569.75" y="288.0" width="3.00" height="1.4" fill="#d3d8e0"/>
<rect x="1573.50" y="288.0" width="6.00" height="1.4" fill="#d3d8e0"/>
<rect x="1580.25" y="288.0" width="1.50" height="1.4" fill="#d3d8e0"/>
<rect x="1582.50" y="288.0" width="4.50" height="1.4" fill="#d3d8e0"/>
<rect x="1587.75" y="288.0" width="2.25" height="1.4" fill="#d3d8e0"/>
<rect x="1590.75" y="288.0" width="0.75" height="1.4" fill="#d3d8e0"/>
<rect x="1592.25" y="288.0" width="6.75" height="1.4" fill="#d3d8e0"/>
<rect x="1524.00" y="290.0" width="2.25" height="1.4" fill="#d3d8e0"/>
<rect x="1527.00" y="290.0" width="5.25" height="1.4" fill="#d3d8e0"/>
<rect x="1533.00" y="290.0" width="3.75" height="1.4" fill="#d3d8e0"/>
<rect x="1537.50" y="290.0" width="3.00" height="1.4" fill="#d3d8e0"/>
<rect x="1541.25" y="290.0" width="0.75" height="1.4" fill="#d3d8e0"/>
<rect x="1542.75" y="290.0" width="4.50" height="1.4" fill="#d3d8e0"/>
<rect x="1548.00" y="290.0" width="3.75" height="1.4" fill="#d3d8e0"/>
<rect x="1552.50" y="290.0" width="6.00" height="1.4" fill="#d3d8e0"/>
<rect x="1559.25" y="290.0" width="4.50" height="1.4" fill="#d3d8e0"/>
<rect x="1564.50" y="290.0" width="0.75" height="1.4" fill="#d3d8e0"/>
<rect x="1566.00" y="290.0" width="3.00" height="1.4" fill="#d3d8e0"/>
<rect x="1569.75" y="290.0" width="8.25" height="1.4" fill="#d3d8e0"/>
<rect x="1578.75" y="290.0" width="8.25" height="1.4" fill="#d3d8e0"/>
<rect x="1587.75" y="290.0" width="6.75" height="1.4" fill="#d3d8e0"/>
<rect x="1524.00" y="292.0" width="6.00" height="1.4" fill="#d3d8e0"/>
<rect x="1524.00" y="294.0" width="4.50" height="1.4" fill="#d3d8e0"/>
<rect x="1529.25" y="294.0" width="1.50" height="1.4" fill="#d3d8e0"/>
<rect x="1531.50" y="294.0" width="3.75" height="1.4" fill="#d3d8e0"/>
<rect x="1536.00" y="294.0" width="6.75" height="1.4" fill="#d3d8e0"/>
<rect x="1543.50" y="294.0" width="3.75" height="1.4" fill="#d3d8e0"/>
<rect x="1548.00" y="294.0" width="1.50" height="1.4" fill="#d3d8e0"/>
<rect x="1550.25" y="294.0" width="0.75" height="1.4" fill="#d3d8e0"/>
<rect x="1551.75" y="294.0" width="3.00" height="1.4" fill="#d3d8e0"/>
<rect x="1555.50" y="294.0" width="1.50" height="1.4" fill="#d3d8e0"/>
<rect x="1557.75" y="294.0" width="2.25" height="1.4" fill="#d3d8e0"/>
<rect x="1560.75" y="294.0" width="1.50" height="1.4" fill="#d3d8e0"/>
<rect x="1563.00" y="294.0" width="6.00" height="1.4" fill="#d3d8e0"/>
<rect x="1569.75" y="294.0" width="8.25" height="1.4" fill="#d3d8e0"/>
<rect x="1578.75" y="294.0" width="8.25" height="1.4" fill="#d3d8e0"/>
<rect x="1587.75" y="294.0" width="3.75" height="1.4" fill="#d3d8e0"/>
<rect x="1592.25" y="294.0" width="1.50" height="1.4" fill="#d3d8e0"/>
<rect x="1524.00" y="296.0" width="8.25" height="1.4" fill="#d3d8e0"/>
<rect x="1532.25" y="296.0" width="1.50" height="1.4" fill="#4fb3dd"/>
<rect x="1533.75" y="296.0" width="1.50" height="1.4" fill="#f0616d"/>
<rect x="1535.25" y="296.0" width="0.75" height="1.4" fill="#4fb3dd"/>
<rect x="1524.00" y="298.0" width="0.75" height="1.4" fill="#4fb3dd"/>
<rect x="1524.75" y="298.0" width="1.50" height="1.4" fill="#f0616d"/>
<rect x="1527.00" y="298.0" width="1.50" height="1.4" fill="#4fb3dd"/>
<rect x="1524.00" y="300.0" width="0.75" height="1.4" fill="#4fb3dd"/>
<rect x="1524.75" y="300.0" width="1.50" height="1.4" fill="#f0616d"/>
<rect x="1527.00" y="300.0" width="1.50" height="1.4" fill="#4fb3dd"/>
<rect x="1521.00" y="302.0" width="1.50" height="1.4" fill="#4fb3dd"/>
<rect x="1522.50" y="302.0" width="1.50" height="1.4" fill="#f0616d"/>
<rect x="1524.00" y="302.0" width="0.75" height="1.4" fill="#4fb3dd"/>
<rect x="1518.00" y="304.0" width="1.50" height="1.4" fill="#4fb3dd"/>
<rect x="1519.50" y="304.0" width="0.75" height="1.4" fill="#f0616d"/>
<rect x="1520.25" y="304.0" width="0.75" height="1.4" fill="#4fb3dd"/>
<rect x="1518.00" y="306.0" width="0.75" height="1.4" fill="#4fb3dd"/>
<rect x="1518.75" y="306.0" width="1.50" height="1.4" fill="#f0616d"/>
<rect x="1521.00" y="306.0" width="1.50" height="1.4" fill="#4fb3dd"/>
<rect x="1518.00" y="308.0" width="0.75" height="1.4" fill="#4fb3dd"/>
<rect x="1518.75" y="308.0" width="1.50" height="1.4" fill="#f0616d"/>
<rect x="1520.25" y="308.0" width="0.75" height="1.4" fill="#4fb3dd"/>
<rect x="1521.00" y="308.0" width="3.00" height="1.4" fill="#d3d8e0"/>
<rect x="1524.75" y="308.0" width="1.50" height="1.4" fill="#d3d8e0"/>
<rect x="1527.00" y="308.0" width="6.00" height="1.4" fill="#d3d8e0"/>
<rect x="1533.75" y="308.0" width="5.25" height="1.4" fill="#d3d8e0"/>
<rect x="1539.75" y="308.0" width="0.75" height="1.4" fill="#d3d8e0"/>
<rect x="1540.50" y="308.0" width="1.50" height="1.4" fill="#4fb3dd"/>
<rect x="1542.00" y="308.0" width="1.50" height="1.4" fill="#f0616d"/>
<rect x="1543.50" y="308.0" width="0.75" height="1.4" fill="#4fb3dd"/>
<rect x="1518.00" y="310.0" width="0.75" height="1.4" fill="#4fb3dd"/>
<rect x="1518.75" y="310.0" width="0.75" height="1.4" fill="#f0616d"/>
<rect x="1519.50" y="310.0" width="0.75" height="1.4" fill="#4fb3dd"/>
<rect x="1521.00" y="312.0" width="0.75" height="1.4" fill="#4fb3dd"/>
<rect x="1521.75" y="312.0" width="1.50" height="1.4" fill="#f0616d"/>
<rect x="1523.25" y="312.0" width="0.75" height="1.4" fill="#4fb3dd"/>
<rect x="1524.00" y="314.0" width="0.75" height="1.4" fill="#4fb3dd"/>
<rect x="1524.75" y="314.0" width="1.50" height="1.4" fill="#f0616d"/>
<rect x="1526.25" y="314.0" width="0.75" height="1.4" fill="#4fb3dd"/>
<rect x="1527.00" y="314.0" width="3.00" height="1.4" fill="#d3d8e0"/>
<rect x="1530.75" y="314.0" width="1.50" height="1.4" fill="#d3d8e0"/>
<rect x="1533.00" y="314.0" width="3.00" height="1.4" fill="#d3d8e0"/>
<rect x="1536.75" y="314.0" width="0.75" height="1.4" fill="#d3d8e0"/>
<rect x="1538.25" y="314.0" width="4.50" height="1.4" fill="#d3d8e0"/>
<rect x="1543.50" y="314.0" width="2.25" height="1.4" fill="#d3d8e0"/>
<rect x="1546.50" y="314.0" width="4.50" height="1.4" fill="#d3d8e0"/>
<rect x="1551.75" y="314.0" width="4.50" height="1.4" fill="#d3d8e0"/>
<rect x="1557.00" y="314.0" width="8.25" height="1.4" fill="#d3d8e0"/>
<rect x="1566.00" y="314.0" width="1.50" height="1.4" fill="#d3d8e0"/>
<rect x="1568.25" y="314.0" width="4.50" height="1.4" fill="#d3d8e0"/>
<rect x="1573.50" y="314.0" width="3.00" height="1.4" fill="#d3d8e0"/>
<rect x="1577.25" y="314.0" width="4.50" height="1.4" fill="#d3d8e0"/>
<rect x="1582.50" y="314.0" width="1.50" height="1.4" fill="#d3d8e0"/>
<rect x="1584.75" y="314.0" width="4.50" height="1.4" fill="#d3d8e0"/>
<rect x="1590.00" y="314.0" width="4.50" height="1.4" fill="#d3d8e0"/>
<rect x="1524.00" y="316.0" width="3.00" height="1.4" fill="#d3d8e0"/>
<rect x="1527.75" y="316.0" width="1.50" height="1.4" fill="#d3d8e0"/>
<rect x="1530.00" y="316.0" width="1.50" height="1.4" fill="#d3d8e0"/>
<rect x="1532.25" y="316.0" width="1.50" height="1.4" fill="#d3d8e0"/>
<rect x="1534.50" y="316.0" width="3.75" height="1.4" fill="#d3d8e0"/>
<rect x="1539.00" y="316.0" width="3.00" height="1.4" fill="#d3d8e0"/>
<rect x="1542.75" y="316.0" width="3.75" height="1.4" fill="#d3d8e0"/>
<rect x="1547.25" y="316.0" width="3.00" height="1.4" fill="#d3d8e0"/>
<rect x="1551.00" y="316.0" width="1.50" height="1.4" fill="#d3d8e0"/>
<rect x="1553.25" y="316.0" width="6.00" height="1.4" fill="#d3d8e0"/>
<rect x="1560.00" y="316.0" width="4.50" height="1.4" fill="#d3d8e0"/>
<rect x="1565.25" y="316.0" width="3.00" height="1.4" fill="#d3d8e0"/>
<rect x="1569.00" y="316.0" width="6.75" height="1.4" fill="#d3d8e0"/>
<rect x="1576.50" y="316.0" width="1.50" height="1.4" fill="#d3d8e0"/>
<rect x="1578.75" y="316.0" width="3.00" height="1.4" fill="#d3d8e0"/>
<rect x="1582.50" y="316.0" width="3.75" height="1.4" fill="#d3d8e0"/>
<rect x="1587.00" y="316.0" width="3.75" height="1.4" fill="#d3d8e0"/>
<rect x="1591.50" y="316.0" width="3.00" height="1.4" fill="#d3d8e0"/>
<rect x="1524.00" y="318.0" width="3.75" height="1.4" fill="#d3d8e0"/>
<rect x="1528.50" y="318.0" width="3.00" height="1.4" fill="#d3d8e0"/>
<rect x="1532.25" y="318.0" width="4.50" height="1.4" fill="#d3d8e0"/>
<rect x="1537.50" y="318.0" width="1.50" height="1.4" fill="#d3d8e0"/>
<rect x="1539.75" y="318.0" width="1.50" height="1.4" fill="#d3d8e0"/>
<rect x="1542.00" y="318.0" width="3.75" height="1.4" fill="#d3d8e0"/>
<rect x="1546.50" y="318.0" width="2.25" height="1.4" fill="#d3d8e0"/>
<rect x="1549.50" y="318.0" width="5.25" height="1.4" fill="#d3d8e0"/>
<rect x="1555.50" y="318.0" width="1.50" height="1.4" fill="#d3d8e0"/>
<rect x="1557.75" y="318.0" width="3.75" height="1.4" fill="#d3d8e0"/>
<rect x="1562.25" y="318.0" width="4.50" height="1.4" fill="#d3d8e0"/>
<rect x="1567.50" y="318.0" width="1.50" height="1.4" fill="#d3d8e0"/>
<rect x="1569.75" y="318.0" width="3.00" height="1.4" fill="#d3d8e0"/>
<rect x="1573.50" y="318.0" width="4.50" height="1.4" fill="#d3d8e0"/>
<rect x="1578.75" y="318.0" width="4.50" height="1.4" fill="#d3d8e0"/>
<rect x="1584.00" y="318.0" width="3.00" height="1.4" fill="#d3d8e0"/>
<rect x="1587.75" y="318.0" width="3.00" height="1.4" fill="#d3d8e0"/>
<rect x="1591.50" y="318.0" width="3.00" height="1.4" fill="#d3d8e0"/>
<rect x="1524.00" y="320.0" width="6.75" height="1.4" fill="#d3d8e0"/>
<rect x="1524.00" y="322.0" width="2.25" height="1.4" fill="#d3d8e0"/>
<rect x="1527.00" y="322.0" width="3.00" height="1.4" fill="#d3d8e0"/>
<rect x="1530.75" y="322.0" width="6.00" height="1.4" fill="#d3d8e0"/>
<rect x="1537.50" y="322.0" width="4.50" height="1.4" fill="#d3d8e0"/>
<rect x="1542.75" y="322.0" width="4.50" height="1.4" fill="#d3d8e0"/>
<rect x="1548.00" y="322.0" width="5.25" height="1.4" fill="#d3d8e0"/>
<rect x="1554.00" y="322.0" width="3.00" height="1.4" fill="#d3d8e0"/>
<rect x="1557.75" y="322.0" width="6.00" height="1.4" fill="#d3d8e0"/>
<rect x="1564.50" y="322.0" width="0.75" height="1.4" fill="#d3d8e0"/>
<rect x="1566.00" y="322.0" width="5.25" height="1.4" fill="#d3d8e0"/>
<rect x="1572.00" y="322.0" width="1.50" height="1.4" fill="#d3d8e0"/>
<rect x="1574.25" y="322.0" width="4.50" height="1.4" fill="#d3d8e0"/>
<rect x="1579.50" y="322.0" width="3.75" height="1.4" fill="#d3d8e0"/>
<rect x="1584.00" y="322.0" width="6.75" height="1.4" fill="#d3d8e0"/>
<rect x="1591.50" y="322.0" width="4.50" height="1.4" fill="#d3d8e0"/>
<rect x="1524.00" y="324.0" width="1.50" height="1.4" fill="#d3d8e0"/>
<rect x="1526.25" y="324.0" width="3.00" height="1.4" fill="#d3d8e0"/>
<rect x="1530.00" y="324.0" width="3.00" height="1.4" fill="#d3d8e0"/>
<rect x="1533.75" y="324.0" width="3.00" height="1.4" fill="#d3d8e0"/>
<rect x="1537.50" y="324.0" width="1.50" height="1.4" fill="#d3d8e0"/>
<rect x="1539.75" y="324.0" width="6.75" height="1.4" fill="#d3d8e0"/>
<rect x="1547.25" y="324.0" width="4.50" height="1.4" fill="#d3d8e0"/>
<rect x="1552.50" y="324.0" width="6.75" height="1.4" fill="#d3d8e0"/>
<rect x="1559.25" y="324.0" width="1.50" height="1.4" fill="#4fb3dd"/>
<rect x="1560.75" y="324.0" width="1.50" height="1.4" fill="#f0616d"/>
<rect x="1562.25" y="324.0" width="0.75" height="1.4" fill="#4fb3dd"/>
<rect x="1524.00" y="326.0" width="0.75" height="1.4" fill="#4fb3dd"/>
<rect x="1524.75" y="326.0" width="1.50" height="1.4" fill="#f0616d"/>
<rect x="1527.00" y="326.0" width="1.50" height="1.4" fill="#4fb3dd"/>
<rect x="1524.00" y="328.0" width="0.75" height="1.4" fill="#4fb3dd"/>
<rect x="1524.75" y="328.0" width="1.50" height="1.4" fill="#f0616d"/>
<rect x="1526.25" y="328.0" width="0.75" height="1.4" fill="#4fb3dd"/>
<rect x="1527.00" y="328.0" width="4.50" height="1.4" fill="#d3d8e0"/>
<rect x="1532.25" y="328.0" width="6.75" height="1.4" fill="#d3d8e0"/>
<rect x="1539.75" y="328.0" width="1.50" height="1.4" fill="#d3d8e0"/>
<rect x="1542.00" y="328.0" width="4.50" height="1.4" fill="#d3d8e0"/>
<rect x="1547.25" y="328.0" width="1.50" height="1.4" fill="#d3d8e0"/>
<rect x="1549.50" y="328.0" width="1.50" height="1.4" fill="#d3d8e0"/>
<rect x="1551.75" y="328.0" width="1.50" height="1.4" fill="#d3d8e0"/>
<rect x="1554.00" y="328.0" width="2.25" height="1.4" fill="#d3d8e0"/>
<rect x="1557.00" y="328.0" width="4.50" height="1.4" fill="#d3d8e0"/>
<rect x="1562.25" y="328.0" width="6.00" height="1.4" fill="#d3d8e0"/>
<rect x="1569.00" y="328.0" width="4.50" height="1.4" fill="#d3d8e0"/>
<rect x="1574.25" y="328.0" width="5.25" height="1.4" fill="#d3d8e0"/>
<rect x="1580.25" y="328.0" width="4.50" height="1.4" fill="#d3d8e0"/>
<rect x="1585.50" y="328.0" width="3.00" height="1.4" fill="#d3d8e0"/>
<rect x="1589.25" y="328.0" width="3.00" height="1.4" fill="#d3d8e0"/>
<rect x="1593.00" y="328.0" width="3.00" height="1.4" fill="#d3d8e0"/>
<rect x="1596.75" y="328.0" width="1.50" height="1.4" fill="#d3d8e0"/>
<rect x="1524.00" y="330.0" width="1.50" height="1.4" fill="#d3d8e0"/>
<rect x="1526.25" y="330.0" width="3.00" height="1.4" fill="#d3d8e0"/>
<rect x="1530.00" y="330.0" width="8.25" height="1.4" fill="#d3d8e0"/>
<rect x="1539.00" y="330.0" width="1.50" height="1.4" fill="#d3d8e0"/>
<rect x="1541.25" y="330.0" width="1.50" height="1.4" fill="#d3d8e0"/>
<rect x="1543.50" y="330.0" width="1.50" height="1.4" fill="#d3d8e0"/>
<rect x="1545.75" y="330.0" width="4.50" height="1.4" fill="#d3d8e0"/>
<rect x="1551.00" y="330.0" width="5.25" height="1.4" fill="#d3d8e0"/>
<rect x="1557.00" y="330.0" width="3.00" height="1.4" fill="#d3d8e0"/>
<rect x="1560.75" y="330.0" width="3.00" height="1.4" fill="#d3d8e0"/>
<rect x="1564.50" y="330.0" width="5.25" height="1.4" fill="#d3d8e0"/>
<rect x="1570.50" y="330.0" width="3.00" height="1.4" fill="#d3d8e0"/>
<rect x="1573.50" y="330.0" width="1.50" height="1.4" fill="#4fb3dd"/>
<rect x="1575.00" y="330.0" width="1.50" height="1.4" fill="#f0616d"/>
<rect x="1576.50" y="330.0" width="0.75" height="1.4" fill="#4fb3dd"/>
<rect x="1524.00" y="332.0" width="0.75" height="1.4" fill="#4fb3dd"/>
<rect x="1524.75" y="332.0" width="1.50" height="1.4" fill="#f0616d"/>
<rect x="1527.00" y="332.0" width="1.50" height="1.4" fill="#4fb3dd"/>
<rect x="1524.00" y="334.0" width="0.75" height="1.4" fill="#4fb3dd"/>
<rect x="1524.75" y="334.0" width="1.50" height="1.4" fill="#f0616d"/>
<rect x="1526.25" y="334.0" width="0.75" height="1.4" fill="#4fb3dd"/>
<rect x="1527.00" y="334.0" width="0.75" height="1.4" fill="#d3d8e0"/>
<rect x="1528.50" y="334.0" width="3.75" height="1.4" fill="#d3d8e0"/>
<rect x="1533.00" y="334.0" width="1.50" height="1.4" fill="#d3d8e0"/>
<rect x="1535.25" y="334.0" width="1.50" height="1.4" fill="#d3d8e0"/>
<rect x="1537.50" y="334.0" width="2.25" height="1.4" fill="#d3d8e0"/>
<rect x="1540.50" y="334.0" width="0.75" height="1.4" fill="#d3d8e0"/>
<rect x="1542.00" y="334.0" width="6.00" height="1.4" fill="#d3d8e0"/>
<rect x="1548.75" y="334.0" width="8.25" height="1.4" fill="#d3d8e0"/>
<rect x="1557.75" y="334.0" width="4.50" height="1.4" fill="#d3d8e0"/>
<rect x="1563.00" y="334.0" width="1.50" height="1.4" fill="#d3d8e0"/>
<rect x="1565.25" y="334.0" width="1.50" height="1.4" fill="#d3d8e0"/>
<rect x="1567.50" y="334.0" width="6.00" height="1.4" fill="#d3d8e0"/>
<rect x="1574.25" y="334.0" width="4.50" height="1.4" fill="#d3d8e0"/>
<rect x="1579.50" y="334.0" width="6.75" height="1.4" fill="#d3d8e0"/>
<rect x="1587.00" y="334.0" width="2.25" height="1.4" fill="#d3d8e0"/>
<rect x="1590.00" y="334.0" width="1.50" height="1.4" fill="#d3d8e0"/>
<rect x="1592.25" y="334.0" width="3.00" height="1.4" fill="#d3d8e0"/>
<rect x="1524.00" y="336.0" width="4.50" height="1.4" fill="#d3d8e0"/>
<rect x="1529.25" y="336.0" width="1.50" height="1.4" fill="#d3d8e0"/>
<rect x="1531.50" y="336.0" width="3.75" height="1.4" fill="#d3d8e0"/>
<rect x="1536.00" y="336.0" width="1.50" height="1.4" fill="#d3d8e0"/>
<rect x="1538.25" y="336.0" width="3.00" height="1.4" fill="#d3d8e0"/>
<rect x="1542.00" y="336.0" width="6.75" height="1.4" fill="#d3d8e0"/>
<rect x="1549.50" y="336.0" width="1.50" height="1.4" fill="#d3d8e0"/>
<rect x="1551.75" y="336.0" width="4.50" height="1.4" fill="#d3d8e0"/>
<rect x="1557.00" y="336.0" width="4.50" height="1.4" fill="#d3d8e0"/>
<rect x="1562.25" y="336.0" width="3.75" height="1.4" fill="#d3d8e0"/>
<rect x="1566.75" y="336.0" width="0.75" height="1.4" fill="#d3d8e0"/>
<rect x="1568.25" y="336.0" width="1.50" height="1.4" fill="#d3d8e0"/>
<rect x="1570.50" y="336.0" width="2.25" height="1.4" fill="#d3d8e0"/>
<rect x="1573.50" y="336.0" width="4.50" height="1.4" fill="#d3d8e0"/>
<rect x="1578.75" y="336.0" width="5.25" height="1.4" fill="#d3d8e0"/>
<rect x="1584.75" y="336.0" width="4.50" height="1.4" fill="#d3d8e0"/>
<rect x="1590.00" y="336.0" width="8.25" height="1.4" fill="#d3d8e0"/>
<rect x="1524.00" y="338.0" width="1.50" height="1.4" fill="#d3d8e0"/>
<rect x="1526.25" y="338.0" width="5.25" height="1.4" fill="#d3d8e0"/>
<rect x="1532.25" y="338.0" width="2.25" height="1.4" fill="#d3d8e0"/>
<rect x="1535.25" y="338.0" width="5.25" height="1.4" fill="#d3d8e0"/>
<rect x="1541.25" y="338.0" width="8.25" height="1.4" fill="#d3d8e0"/>
<rect x="1550.25" y="338.0" width="4.50" height="1.4" fill="#d3d8e0"/>
<rect x="1555.50" y="338.0" width="4.50" height="1.4" fill="#d3d8e0"/>
<rect x="1560.75" y="338.0" width="3.00" height="1.4" fill="#d3d8e0"/>
<rect x="1564.50" y="338.0" width="5.25" height="1.4" fill="#d3d8e0"/>
<rect x="1570.50" y="338.0" width="6.75" height="1.4" fill="#d3d8e0"/>
<rect x="1578.00" y="338.0" width="1.50" height="1.4" fill="#d3d8e0"/>
<rect x="1580.25" y="338.0" width="6.00" height="1.4" fill="#d3d8e0"/>
<rect x="1587.00" y="338.0" width="3.75" height="1.4" fill="#d3d8e0"/>
<rect x="1591.50" y="338.0" width="4.50" height="1.4" fill="#d3d8e0"/>
<rect x="1524.00" y="340.0" width="2.25" height="1.4" fill="#d3d8e0"/>
<rect x="1527.00" y="340.0" width="3.00" height="1.4" fill="#d3d8e0"/>
<rect x="1530.75" y="340.0" width="4.50" height="1.4" fill="#d3d8e0"/>
<rect x="1536.00" y="340.0" width="4.50" height="1.4" fill="#d3d8e0"/>
<rect x="1541.25" y="340.0" width="4.50" height="1.4" fill="#d3d8e0"/>
<rect x="1546.50" y="340.0" width="6.00" height="1.4" fill="#d3d8e0"/>
<rect x="1553.25" y="340.0" width="3.00" height="1.4" fill="#d3d8e0"/>
<rect x="1557.00" y="340.0" width="2.25" height="1.4" fill="#d3d8e0"/>
<rect x="1560.00" y="340.0" width="3.00" height="1.4" fill="#d3d8e0"/>
<rect x="1563.75" y="340.0" width="1.50" height="1.4" fill="#d3d8e0"/>
<rect x="1566.00" y="340.0" width="2.25" height="1.4" fill="#d3d8e0"/>
<rect x="1569.00" y="340.0" width="1.50" height="1.4" fill="#d3d8e0"/>
<rect x="1571.25" y="340.0" width="4.50" height="1.4" fill="#d3d8e0"/>
<rect x="1576.50" y="340.0" width="3.00" height="1.4" fill="#d3d8e0"/>
<rect x="1580.25" y="340.0" width="1.50" height="1.4" fill="#d3d8e0"/>
<rect x="1582.50" y="340.0" width="4.50" height="1.4" fill="#d3d8e0"/>
<rect x="1587.75" y="340.0" width="3.00" height="1.4" fill="#d3d8e0"/>
<rect x="1524.00" y="342.0" width="8.25" height="1.4" fill="#d3d8e0"/>
<rect x="1524.00" y="344.0" width="4.50" height="1.4" fill="#d3d8e0"/>
<rect x="1529.25" y="344.0" width="3.00" height="1.4" fill="#d3d8e0"/>
<rect x="1533.00" y="344.0" width="0.75" height="1.4" fill="#d3d8e0"/>
<rect x="1534.50" y="344.0" width="1.50" height="1.4" fill="#d3d8e0"/>
<rect x="1536.75" y="344.0" width="1.50" height="1.4" fill="#d3d8e0"/>
<rect x="1539.00" y="344.0" width="1.50" height="1.4" fill="#d3d8e0"/>
<rect x="1541.25" y="344.0" width="1.50" height="1.4" fill="#d3d8e0"/>
<rect x="1543.50" y="344.0" width="5.25" height="1.4" fill="#d3d8e0"/>
<rect x="1549.50" y="344.0" width="5.25" height="1.4" fill="#d3d8e0"/>
<rect x="1555.50" y="344.0" width="2.25" height="1.4" fill="#d3d8e0"/>
<rect x="1558.50" y="344.0" width="2.25" height="1.4" fill="#d3d8e0"/>
<rect x="1561.50" y="344.0" width="3.75" height="1.4" fill="#d3d8e0"/>
<rect x="1566.00" y="344.0" width="1.50" height="1.4" fill="#d3d8e0"/>
<rect x="1568.25" y="344.0" width="6.00" height="1.4" fill="#d3d8e0"/>
<rect x="1574.25" y="344.0" width="1.50" height="1.4" fill="#4fb3dd"/>
<rect x="1575.75" y="344.0" width="1.50" height="1.4" fill="#f0616d"/>
<rect x="1577.25" y="344.0" width="0.75" height="1.4" fill="#4fb3dd"/>
<rect x="1524.00" y="346.0" width="0.75" height="1.4" fill="#4fb3dd"/>
<rect x="1524.75" y="346.0" width="1.50" height="1.4" fill="#f0616d"/>
<rect x="1527.00" y="346.0" width="1.50" height="1.4" fill="#4fb3dd"/>
<rect x="1524.00" y="348.0" width="0.75" height="1.4" fill="#4fb3dd"/>
<rect x="1524.75" y="348.0" width="1.50" height="1.4" fill="#f0616d"/>
<rect x="1526.25" y="348.0" width="0.75" height="1.4" fill="#4fb3dd"/>
<rect x="1527.00" y="348.0" width="3.00" height="1.4" fill="#d3d8e0"/>
<rect x="1530.75" y="348.0" width="6.00" height="1.4" fill="#d3d8e0"/>
<rect x="1537.50" y="348.0" width="4.50" height="1.4" fill="#d3d8e0"/>
<rect x="1542.75" y="348.0" width="4.50" height="1.4" fill="#d3d8e0"/>
<rect x="1548.00" y="348.0" width="5.25" height="1.4" fill="#d3d8e0"/>
<rect x="1554.00" y="348.0" width="3.75" height="1.4" fill="#d3d8e0"/>
<rect x="1558.50" y="348.0" width="3.00" height="1.4" fill="#d3d8e0"/>
<rect x="1562.25" y="348.0" width="3.00" height="1.4" fill="#d3d8e0"/>
<rect x="1566.00" y="348.0" width="3.00" height="1.4" fill="#d3d8e0"/>
<rect x="1569.75" y="348.0" width="3.75" height="1.4" fill="#d3d8e0"/>
<rect x="1574.25" y="348.0" width="1.50" height="1.4" fill="#d3d8e0"/>
<rect x="1576.50" y="348.0" width="1.50" height="1.4" fill="#d3d8e0"/>
<rect x="1578.75" y="348.0" width="6.00" height="1.4" fill="#d3d8e0"/>
<rect x="1584.75" y="348.0" width="1.50" height="1.4" fill="#4fb3dd"/>
<rect x="1586.25" y="348.0" width="1.50" height="1.4" fill="#f0616d"/>
<rect x="1587.75" y="348.0" width="0.75" height="1.4" fill="#4fb3dd"/>
<rect x="1524.00" y="350.0" width="0.75" height="1.4" fill="#4fb3dd"/>
<rect x="1524.75" y="350.0" width="1.50" height="1.4" fill="#f0616d"/>
<rect x="1527.00" y="350.0" width="1.50" height="1.4" fill="#4fb3dd"/>
<rect x="1524.00" y="352.0" width="0.75" height="1.4" fill="#4fb3dd"/>
<rect x="1524.75" y="352.0" width="1.50" height="1.4" fill="#f0616d"/>
<rect x="1527.00" y="352.0" width="1.50" height="1.4" fill="#4fb3dd"/>
<rect x="1521.00" y="354.0" width="1.50" height="1.4" fill="#4fb3dd"/>
<rect x="1522.50" y="354.0" width="1.50" height="1.4" fill="#f0616d"/>
<rect x="1524.00" y="354.0" width="0.75" height="1.4" fill="#4fb3dd"/>
<rect x="1518.00" y="356.0" width="1.50" height="1.4" fill="#4fb3dd"/>
<rect x="1519.50" y="356.0" width="0.75" height="1.4" fill="#f0616d"/>
<rect x="1520.25" y="356.0" width="0.75" height="1.4" fill="#4fb3dd"/>
<rect x="1518.00" y="358.0" width="0.75" height="1.4" fill="#4fb3dd"/>
<rect x="1518.75" y="358.0" width="1.50" height="1.4" fill="#f0616d"/>
<rect x="1521.00" y="358.0" width="1.50" height="1.4" fill="#4fb3dd"/>
<rect x="1518.00" y="360.0" width="0.75" height="1.4" fill="#4fb3dd"/>
<rect x="1518.75" y="360.0" width="1.50" height="1.4" fill="#f0616d"/>
<rect x="1520.25" y="360.0" width="0.75" height="1.4" fill="#4fb3dd"/>
<rect x="1521.00" y="360.0" width="3.00" height="1.4" fill="#d3d8e0"/>
<rect x="1524.75" y="360.0" width="1.50" height="1.4" fill="#d3d8e0"/>
<rect x="1527.00" y="360.0" width="6.00" height="1.4" fill="#d3d8e0"/>
<rect x="1533.75" y="360.0" width="5.25" height="1.4" fill="#d3d8e0"/>
<rect x="1539.75" y="360.0" width="0.75" height="1.4" fill="#d3d8e0"/>
<rect x="1540.50" y="360.0" width="1.50" height="1.4" fill="#4fb3dd"/>
<rect x="1542.00" y="360.0" width="1.50" height="1.4" fill="#f0616d"/>
<rect x="1543.50" y="360.0" width="0.75" height="1.4" fill="#4fb3dd"/>
<rect x="1518.00" y="362.0" width="0.75" height="1.4" fill="#4fb3dd"/>
<rect x="1518.75" y="362.0" width="0.75" height="1.4" fill="#f0616d"/>
<rect x="1519.50" y="362.0" width="0.75" height="1.4" fill="#4fb3dd"/>
<rect x="1521.00" y="364.0" width="0.75" height="1.4" fill="#4fb3dd"/>
<rect x="1521.75" y="364.0" width="1.50" height="1.4" fill="#f0616d"/>
<rect x="1523.25" y="364.0" width="0.75" height="1.4" fill="#4fb3dd"/>
<rect x="1524.00" y="366.0" width="0.75" height="1.4" fill="#4fb3dd"/>
<rect x="1524.75" y="366.0" width="1.50" height="1.4" fill="#f0616d"/>
<rect x="1526.25" y="366.0" width="0.75" height="1.4" fill="#4fb3dd"/>
<rect x="1527.00" y="366.0" width="3.00" height="1.4" fill="#d3d8e0"/>
<rect x="1530.75" y="366.0" width="3.00" height="1.4" fill="#d3d8e0"/>
<rect x="1534.50" y="366.0" width="3.00" height="1.4" fill="#d3d8e0"/>
<rect x="1538.25" y="366.0" width="4.50" height="1.4" fill="#d3d8e0"/>
<rect x="1543.50" y="366.0" width="0.75" height="1.4" fill="#d3d8e0"/>
<rect x="1545.00" y="366.0" width="3.75" height="1.4" fill="#d3d8e0"/>
<rect x="1549.50" y="366.0" width="3.00" height="1.4" fill="#d3d8e0"/>
<rect x="1553.25" y="366.0" width="1.50" height="1.4" fill="#d3d8e0"/>
<rect x="1555.50" y="366.0" width="5.25" height="1.4" fill="#d3d8e0"/>
<rect x="1561.50" y="366.0" width="4.50" height="1.4" fill="#d3d8e0"/>
<rect x="1566.75" y="366.0" width="4.50" height="1.4" fill="#d3d8e0"/>
<rect x="1572.00" y="366.0" width="1.50" height="1.4" fill="#d3d8e0"/>
<rect x="1574.25" y="366.0" width="3.75" height="1.4" fill="#d3d8e0"/>
<rect x="1578.75" y="366.0" width="3.75" height="1.4" fill="#d3d8e0"/>
<rect x="1583.25" y="366.0" width="4.50" height="1.4" fill="#d3d8e0"/>
<rect x="1588.50" y="366.0" width="1.50" height="1.4" fill="#d3d8e0"/>
<rect x="1590.75" y="366.0" width="4.50" height="1.4" fill="#d3d8e0"/>
<rect x="1524.00" y="368.0" width="4.50" height="1.4" fill="#d3d8e0"/>
<rect x="1524.00" y="370.0" width="4.50" height="1.4" fill="#d3d8e0"/>
<rect x="1529.25" y="370.0" width="3.00" height="1.4" fill="#d3d8e0"/>
<rect x="1533.00" y="370.0" width="4.50" height="1.4" fill="#d3d8e0"/>
<rect x="1538.25" y="370.0" width="6.75" height="1.4" fill="#d3d8e0"/>
<rect x="1545.75" y="370.0" width="4.50" height="1.4" fill="#d3d8e0"/>
<rect x="1551.00" y="370.0" width="4.50" height="1.4" fill="#d3d8e0"/>
<rect x="1556.25" y="370.0" width="3.75" height="1.4" fill="#d3d8e0"/>
<rect x="1560.75" y="370.0" width="4.50" height="1.4" fill="#d3d8e0"/>
<rect x="1566.00" y="370.0" width="3.75" height="1.4" fill="#d3d8e0"/>
<rect x="1570.50" y="370.0" width="3.00" height="1.4" fill="#d3d8e0"/>
<rect x="1574.25" y="370.0" width="5.25" height="1.4" fill="#d3d8e0"/>
<rect x="1580.25" y="370.0" width="1.50" height="1.4" fill="#d3d8e0"/>
<rect x="1582.50" y="370.0" width="6.00" height="1.4" fill="#d3d8e0"/>
<rect x="1589.25" y="370.0" width="3.75" height="1.4" fill="#d3d8e0"/>
<rect x="1593.75" y="370.0" width="3.00" height="1.4" fill="#d3d8e0"/>
<rect x="1524.00" y="372.0" width="1.50" height="1.4" fill="#d3d8e0"/>
<rect x="1526.25" y="372.0" width="3.00" height="1.4" fill="#d3d8e0"/>
<rect x="1530.00" y="372.0" width="5.25" height="1.4" fill="#d3d8e0"/>
<rect x="1536.00" y="372.0" width="2.25" height="1.4" fill="#d3d8e0"/>
<rect x="1539.00" y="372.0" width="1.50" height="1.4" fill="#d3d8e0"/>
<rect x="1541.25" y="372.0" width="1.50" height="1.4" fill="#d3d8e0"/>
<rect x="1543.50" y="372.0" width="0.75" height="1.4" fill="#d3d8e0"/>
<rect x="1545.00" y="372.0" width="4.50" height="1.4" fill="#d3d8e0"/>
<rect x="1550.25" y="372.0" width="5.25" height="1.4" fill="#d3d8e0"/>
<rect x="1556.25" y="372.0" width="1.50" height="1.4" fill="#d3d8e0"/>
<rect x="1558.50" y="372.0" width="3.00" height="1.4" fill="#d3d8e0"/>
<rect x="1562.25" y="372.0" width="3.75" height="1.4" fill="#d3d8e0"/>
<rect x="1566.75" y="372.0" width="5.25" height="1.4" fill="#d3d8e0"/>
<rect x="1572.00" y="372.0" width="1.50" height="1.4" fill="#4fb3dd"/>
<rect x="1573.50" y="372.0" width="1.50" height="1.4" fill="#f0616d"/>
<rect x="1575.00" y="372.0" width="0.75" height="1.4" fill="#4fb3dd"/>
<rect x="1524.00" y="374.0" width="0.75" height="1.4" fill="#4fb3dd"/>
<rect x="1524.75" y="374.0" width="1.50" height="1.4" fill="#f0616d"/>
<rect x="1527.00" y="374.0" width="1.50" height="1.4" fill="#4fb3dd"/>
<rect x="1524.00" y="376.0" width="0.75" height="1.4" fill="#4fb3dd"/>
<rect x="1524.75" y="376.0" width="1.50" height="1.4" fill="#f0616d"/>
<rect x="1526.25" y="376.0" width="0.75" height="1.4" fill="#4fb3dd"/>
<rect x="1527.00" y="376.0" width="5.25" height="1.4" fill="#d3d8e0"/>
<rect x="1533.00" y="376.0" width="1.50" height="1.4" fill="#d3d8e0"/>
<rect x="1535.25" y="376.0" width="2.25" height="1.4" fill="#d3d8e0"/>
<rect x="1538.25" y="376.0" width="1.50" height="1.4" fill="#d3d8e0"/>
<rect x="1540.50" y="376.0" width="3.75" height="1.4" fill="#d3d8e0"/>
<rect x="1545.00" y="376.0" width="6.00" height="1.4" fill="#d3d8e0"/>
<rect x="1551.75" y="376.0" width="5.25" height="1.4" fill="#d3d8e0"/>
<rect x="1557.75" y="376.0" width="6.00" height="1.4" fill="#d3d8e0"/>
<rect x="1564.50" y="376.0" width="1.50" height="1.4" fill="#d3d8e0"/>
<rect x="1566.75" y="376.0" width="3.75" height="1.4" fill="#d3d8e0"/>
<rect x="1571.25" y="376.0" width="4.50" height="1.4" fill="#d3d8e0"/>
<rect x="1576.50" y="376.0" width="1.50" height="1.4" fill="#d3d8e0"/>
<rect x="1578.75" y="376.0" width="4.50" height="1.4" fill="#d3d8e0"/>
<rect x="1584.00" y="376.0" width="1.50" height="1.4" fill="#d3d8e0"/>
<rect x="1586.25" y="376.0" width="3.75" height="1.4" fill="#d3d8e0"/>
<rect x="1590.75" y="376.0" width="1.50" height="1.4" fill="#d3d8e0"/>
<rect x="1593.00" y="376.0" width="5.25" height="1.4" fill="#d3d8e0"/>
<rect x="1524.00" y="378.0" width="1.50" height="1.4" fill="#d3d8e0"/>
<rect x="1526.25" y="378.0" width="5.25" height="1.4" fill="#d3d8e0"/>
<rect x="1532.25" y="378.0" width="2.25" height="1.4" fill="#d3d8e0"/>
<rect x="1535.25" y="378.0" width="3.00" height="1.4" fill="#d3d8e0"/>
<rect x="1539.00" y="378.0" width="3.00" height="1.4" fill="#d3d8e0"/>
<rect x="1542.75" y="378.0" width="1.50" height="1.4" fill="#d3d8e0"/>
<rect x="1545.00" y="378.0" width="6.00" height="1.4" fill="#d3d8e0"/>
<rect x="1551.75" y="378.0" width="2.25" height="1.4" fill="#d3d8e0"/>
<rect x="1554.75" y="378.0" width="0.75" height="1.4" fill="#d3d8e0"/>
<rect x="1556.25" y="378.0" width="6.75" height="1.4" fill="#d3d8e0"/>
<rect x="1563.75" y="378.0" width="1.50" height="1.4" fill="#d3d8e0"/>
<rect x="1566.00" y="378.0" width="1.50" height="1.4" fill="#d3d8e0"/>
<rect x="1568.25" y="378.0" width="4.50" height="1.4" fill="#d3d8e0"/>
<rect x="1573.50" y="378.0" width="3.75" height="1.4" fill="#d3d8e0"/>
<rect x="1578.00" y="378.0" width="4.50" height="1.4" fill="#d3d8e0"/>
<rect x="1583.25" y="378.0" width="4.50" height="1.4" fill="#d3d8e0"/>
<rect x="1588.50" y="378.0" width="5.25" height="1.4" fill="#d3d8e0"/>
<rect x="1594.50" y="378.0" width="3.00" height="1.4" fill="#d3d8e0"/>
<rect x="1524.00" y="380.0" width="6.00" height="1.4" fill="#d3d8e0"/>
<rect x="1530.75" y="380.0" width="1.50" height="1.4" fill="#d3d8e0"/>
<rect x="1533.00" y="380.0" width="4.50" height="1.4" fill="#d3d8e0"/>
<rect x="1538.25" y="380.0" width="4.50" height="1.4" fill="#d3d8e0"/>
<rect x="1543.50" y="380.0" width="4.50" height="1.4" fill="#d3d8e0"/>
<rect x="1548.75" y="380.0" width="1.50" height="1.4" fill="#d3d8e0"/>
<rect x="1551.00" y="380.0" width="1.50" height="1.4" fill="#d3d8e0"/>
<rect x="1553.25" y="380.0" width="4.50" height="1.4" fill="#d3d8e0"/>
<rect x="1558.50" y="380.0" width="4.50" height="1.4" fill="#d3d8e0"/>
<rect x="1563.75" y="380.0" width="8.25" height="1.4" fill="#d3d8e0"/>
<rect x="1572.75" y="380.0" width="4.50" height="1.4" fill="#d3d8e0"/>
<rect x="1578.00" y="380.0" width="1.50" height="1.4" fill="#d3d8e0"/>
<rect x="1580.25" y="380.0" width="0.75" height="1.4" fill="#d3d8e0"/>
<rect x="1581.75" y="380.0" width="3.00" height="1.4" fill="#d3d8e0"/>
<rect x="1585.50" y="380.0" width="1.50" height="1.4" fill="#d3d8e0"/>
<rect x="1587.75" y="380.0" width="6.75" height="1.4" fill="#d3d8e0"/>
<rect x="1595.25" y="380.0" width="2.25" height="1.4" fill="#d3d8e0"/>
<rect x="1524.00" y="382.0" width="6.00" height="1.4" fill="#d3d8e0"/>
<rect x="1530.75" y="382.0" width="3.00" height="1.4" fill="#d3d8e0"/>
<rect x="1534.50" y="382.0" width="1.50" height="1.4" fill="#d3d8e0"/>
<rect x="1536.75" y="382.0" width="3.00" height="1.4" fill="#d3d8e0"/>
<rect x="1540.50" y="382.0" width="4.50" height="1.4" fill="#d3d8e0"/>
<rect x="1545.75" y="382.0" width="3.00" height="1.4" fill="#d3d8e0"/>
<rect x="1549.50" y="382.0" width="3.00" height="1.4" fill="#d3d8e0"/>
<rect x="1553.25" y="382.0" width="3.00" height="1.4" fill="#d3d8e0"/>
<rect x="1557.00" y="382.0" width="8.25" height="1.4" fill="#d3d8e0"/>
<rect x="1566.00" y="382.0" width="1.50" height="1.4" fill="#d3d8e0"/>
<rect x="1568.25" y="382.0" width="4.50" height="1.4" fill="#d3d8e0"/>
<rect x="1573.50" y="382.0" width="1.50" height="1.4" fill="#d3d8e0"/>
<rect x="1575.75" y="382.0" width="1.50" height="1.4" fill="#d3d8e0"/>
<rect x="1578.00" y="382.0" width="1.50" height="1.4" fill="#d3d8e0"/>
<rect x="1580.25" y="382.0" width="3.75" height="1.4" fill="#d3d8e0"/>
<rect x="1584.75" y="382.0" width="4.50" height="1.4" fill="#d3d8e0"/>
<rect x="1590.00" y="382.0" width="1.50" height="1.4" fill="#d3d8e0"/>
<rect x="1592.25" y="382.0" width="0.75" height="1.4" fill="#d3d8e0"/>
<rect x="1593.75" y="382.0" width="0.75" height="1.4" fill="#d3d8e0"/>
<rect x="1595.25" y="382.0" width="1.50" height="1.4" fill="#d3d8e0"/>
<rect x="1524.00" y="384.0" width="6.75" height="1.4" fill="#d3d8e0"/>
<rect x="1524.00" y="386.0" width="8.25" height="1.4" fill="#d3d8e0"/>
<rect x="1533.00" y="386.0" width="3.75" height="1.4" fill="#d3d8e0"/>
<rect x="1537.50" y="386.0" width="6.75" height="1.4" fill="#d3d8e0"/>
<rect x="1545.00" y="386.0" width="4.50" height="1.4" fill="#d3d8e0"/>
<rect x="1550.25" y="386.0" width="4.50" height="1.4" fill="#d3d8e0"/>
<rect x="1555.50" y="386.0" width="2.25" height="1.4" fill="#d3d8e0"/>
<rect x="1557.75" y="386.0" width="1.50" height="1.4" fill="#4fb3dd"/>
<rect x="1559.25" y="386.0" width="1.50" height="1.4" fill="#f0616d"/>
<rect x="1560.75" y="386.0" width="0.75" height="1.4" fill="#4fb3dd"/>
<rect x="1524.00" y="388.0" width="0.75" height="1.4" fill="#4fb3dd"/>
<rect x="1524.75" y="388.0" width="1.50" height="1.4" fill="#f0616d"/>
<rect x="1527.00" y="388.0" width="1.50" height="1.4" fill="#4fb3dd"/>
<rect x="1524.00" y="390.0" width="1.50" height="1.4" fill="#4fb3dd"/>
<rect x="1525.50" y="390.0" width="1.50" height="1.4" fill="#f0616d"/>
<rect x="1527.00" y="390.0" width="0.75" height="1.4" fill="#4fb3dd"/>
<rect x="1521.00" y="392.0" width="1.50" height="1.4" fill="#4fb3dd"/>
<rect x="1522.50" y="392.0" width="1.50" height="1.4" fill="#f0616d"/>
<rect x="1524.00" y="392.0" width="0.75" height="1.4" fill="#4fb3dd"/>
<rect x="1518.00" y="394.0" width="1.50" height="1.4" fill="#4fb3dd"/>
<rect x="1519.50" y="394.0" width="0.75" height="1.4" fill="#f0616d"/>
<rect x="1520.25" y="394.0" width="0.75" height="1.4" fill="#4fb3dd"/>
<rect x="1518.00" y="396.0" width="0.75" height="1.4" fill="#4fb3dd"/>
<rect x="1518.75" y="396.0" width="1.50" height="1.4" fill="#f0616d"/>
<rect x="1521.00" y="396.0" width="1.50" height="1.4" fill="#4fb3dd"/>
<rect x="1518.00" y="398.0" width="0.75" height="1.4" fill="#4fb3dd"/>
<rect x="1518.75" y="398.0" width="1.50" height="1.4" fill="#f0616d"/>
<rect x="1520.25" y="398.0" width="0.75" height="1.4" fill="#4fb3dd"/>
<rect x="1521.00" y="398.0" width="3.00" height="1.4" fill="#d3d8e0"/>
<rect x="1524.75" y="398.0" width="1.50" height="1.4" fill="#d3d8e0"/>
<rect x="1527.00" y="398.0" width="6.00" height="1.4" fill="#d3d8e0"/>
<rect x="1533.75" y="398.0" width="5.25" height="1.4" fill="#d3d8e0"/>
<rect x="1539.75" y="398.0" width="0.75" height="1.4" fill="#d3d8e0"/>
<rect x="1540.50" y="398.0" width="1.50" height="1.4" fill="#4fb3dd"/>
<rect x="1542.00" y="398.0" width="1.50" height="1.4" fill="#f0616d"/>
<rect x="1543.50" y="398.0" width="0.75" height="1.4" fill="#4fb3dd"/>
<rect x="1518.00" y="400.0" width="0.75" height="1.4" fill="#4fb3dd"/>
<rect x="1518.75" y="400.0" width="0.75" height="1.4" fill="#f0616d"/>
<rect x="1519.50" y="400.0" width="0.75" height="1.4" fill="#4fb3dd"/>
<rect x="1521.00" y="402.0" width="0.75" height="1.4" fill="#4fb3dd"/>
<rect x="1521.75" y="402.0" width="1.50" height="1.4" fill="#f0616d"/>
<rect x="1523.25" y="402.0" width="0.75" height="1.4" fill="#4fb3dd"/>
<rect x="1524.00" y="404.0" width="0.75" height="1.4" fill="#4fb3dd"/>
<rect x="1524.75" y="404.0" width="1.50" height="1.4" fill="#f0616d"/>
<rect x="1526.25" y="404.0" width="0.75" height="1.4" fill="#4fb3dd"/>
<rect x="1527.00" y="404.0" width="1.50" height="1.4" fill="#d3d8e0"/>
<rect x="1529.25" y="404.0" width="3.75" height="1.4" fill="#d3d8e0"/>
<rect x="1533.75" y="404.0" width="0.75" height="1.4" fill="#d3d8e0"/>
<rect x="1535.25" y="404.0" width="1.50" height="1.4" fill="#d3d8e0"/>
<rect x="1537.50" y="404.0" width="6.00" height="1.4" fill="#d3d8e0"/>
<rect x="1544.25" y="404.0" width="3.00" height="1.4" fill="#d3d8e0"/>
<rect x="1548.00" y="404.0" width="3.00" height="1.4" fill="#d3d8e0"/>
<rect x="1551.00" y="404.0" width="1.50" height="1.4" fill="#4fb3dd"/>
<rect x="1552.50" y="404.0" width="1.50" height="1.4" fill="#f0616d"/>
<rect x="1554.00" y="404.0" width="0.75" height="1.4" fill="#4fb3dd"/>
<rect x="1524.00" y="406.0" width="0.75" height="1.4" fill="#4fb3dd"/>
<rect x="1524.75" y="406.0" width="1.50" height="1.4" fill="#f0616d"/>
<rect x="1527.00" y="406.0" width="1.50" height="1.4" fill="#4fb3dd"/>
<rect x="1524.00" y="408.0" width="0.75" height="1.4" fill="#4fb3dd"/>
<rect x="1524.75" y="408.0" width="1.50" height="1.4" fill="#f0616d"/>
<rect x="1526.25" y="408.0" width="0.75" height="1.4" fill="#4fb3dd"/>
<rect x="1527.00" y="408.0" width="4.50" height="1.4" fill="#d3d8e0"/>
<rect x="1532.25" y="408.0" width="1.50" height="1.4" fill="#d3d8e0"/>
<rect x="1534.50" y="408.0" width="1.50" height="1.4" fill="#d3d8e0"/>
<rect x="1536.75" y="408.0" width="4.50" height="1.4" fill="#d3d8e0"/>
<rect x="1542.00" y="408.0" width="1.50" height="1.4" fill="#d3d8e0"/>
<rect x="1544.25" y="408.0" width="6.75" height="1.4" fill="#d3d8e0"/>
<rect x="1551.75" y="408.0" width="2.25" height="1.4" fill="#d3d8e0"/>
<rect x="1554.75" y="408.0" width="4.50" height="1.4" fill="#d3d8e0"/>
<rect x="1560.00" y="408.0" width="4.50" height="1.4" fill="#d3d8e0"/>
<rect x="1565.25" y="408.0" width="3.00" height="1.4" fill="#d3d8e0"/>
<rect x="1569.00" y="408.0" width="4.50" height="1.4" fill="#d3d8e0"/>
<rect x="1574.25" y="408.0" width="1.50" height="1.4" fill="#d3d8e0"/>
<rect x="1576.50" y="408.0" width="6.00" height="1.4" fill="#d3d8e0"/>
<rect x="1583.25" y="408.0" width="5.25" height="1.4" fill="#d3d8e0"/>
<rect x="1589.25" y="408.0" width="4.50" height="1.4" fill="#d3d8e0"/>
<rect x="1524.00" y="410.0" width="1.50" height="1.4" fill="#d3d8e0"/>
<rect x="1526.25" y="410.0" width="3.75" height="1.4" fill="#d3d8e0"/>
<rect x="1530.75" y="410.0" width="6.00" height="1.4" fill="#d3d8e0"/>
<rect x="1537.50" y="410.0" width="1.50" height="1.4" fill="#d3d8e0"/>
<rect x="1539.75" y="410.0" width="1.50" height="1.4" fill="#d3d8e0"/>
<rect x="1542.00" y="410.0" width="4.50" height="1.4" fill="#d3d8e0"/>
<rect x="1547.25" y="410.0" width="4.50" height="1.4" fill="#d3d8e0"/>
<rect x="1552.50" y="410.0" width="1.50" height="1.4" fill="#d3d8e0"/>
<rect x="1554.75" y="410.0" width="1.50" height="1.4" fill="#d3d8e0"/>
<rect x="1557.00" y="410.0" width="5.25" height="1.4" fill="#d3d8e0"/>
<rect x="1563.00" y="410.0" width="4.50" height="1.4" fill="#d3d8e0"/>
<rect x="1568.25" y="410.0" width="8.25" height="1.4" fill="#d3d8e0"/>
<rect x="1577.25" y="410.0" width="6.00" height="1.4" fill="#d3d8e0"/>
<rect x="1584.00" y="410.0" width="1.50" height="1.4" fill="#d3d8e0"/>
<rect x="1586.25" y="410.0" width="3.00" height="1.4" fill="#d3d8e0"/>
<rect x="1590.00" y="410.0" width="1.50" height="1.4" fill="#d3d8e0"/>
<rect x="1592.25" y="410.0" width="1.50" height="1.4" fill="#d3d8e0"/>
<rect x="1594.50" y="410.0" width="4.50" height="1.4" fill="#d3d8e0"/>
<rect x="1524.00" y="412.0" width="1.50" height="1.4" fill="#d3d8e0"/>
<rect x="1526.25" y="412.0" width="1.50" height="1.4" fill="#d3d8e0"/>
<rect x="1528.50" y="412.0" width="6.75" height="1.4" fill="#d3d8e0"/>
<rect x="1536.00" y="412.0" width="4.50" height="1.4" fill="#d3d8e0"/>
<rect x="1541.25" y="412.0" width="4.50" height="1.4" fill="#d3d8e0"/>
<rect x="1546.50" y="412.0" width="3.00" height="1.4" fill="#d3d8e0"/>
<rect x="1550.25" y="412.0" width="1.50" height="1.4" fill="#d3d8e0"/>
<rect x="1552.50" y="412.0" width="5.25" height="1.4" fill="#d3d8e0"/>
<rect x="1558.50" y="412.0" width="3.00" height="1.4" fill="#d3d8e0"/>
<rect x="1562.25" y="412.0" width="6.00" height="1.4" fill="#d3d8e0"/>
<rect x="1569.00" y="412.0" width="6.75" height="1.4" fill="#d3d8e0"/>
<rect x="1575.75" y="412.0" width="1.50" height="1.4" fill="#4fb3dd"/>
<rect x="1577.25" y="412.0" width="1.50" height="1.4" fill="#f0616d"/>
<rect x="1578.75" y="412.0" width="0.75" height="1.4" fill="#4fb3dd"/>
<rect x="1524.00" y="414.0" width="0.75" height="1.4" fill="#4fb3dd"/>
<rect x="1524.75" y="414.0" width="1.50" height="1.4" fill="#f0616d"/>
<rect x="1527.00" y="414.0" width="1.50" height="1.4" fill="#4fb3dd"/>
<rect x="1524.00" y="416.0" width="0.75" height="1.4" fill="#4fb3dd"/>
<rect x="1524.75" y="416.0" width="1.50" height="1.4" fill="#f0616d"/>
<rect x="1526.25" y="416.0" width="0.75" height="1.4" fill="#4fb3dd"/>
<rect x="1527.00" y="416.0" width="1.50" height="1.4" fill="#d3d8e0"/>
<rect x="1529.25" y="416.0" width="1.50" height="1.4" fill="#d3d8e0"/>
<rect x="1531.50" y="416.0" width="6.75" height="1.4" fill="#d3d8e0"/>
<rect x="1539.00" y="416.0" width="1.50" height="1.4" fill="#d3d8e0"/>
<rect x="1541.25" y="416.0" width="3.00" height="1.4" fill="#d3d8e0"/>
<rect x="1545.00" y="416.0" width="2.25" height="1.4" fill="#d3d8e0"/>
<rect x="1548.00" y="416.0" width="1.50" height="1.4" fill="#d3d8e0"/>
<rect x="1550.25" y="416.0" width="3.00" height="1.4" fill="#d3d8e0"/>
<rect x="1554.00" y="416.0" width="3.00" height="1.4" fill="#d3d8e0"/>
<rect x="1557.75" y="416.0" width="6.75" height="1.4" fill="#d3d8e0"/>
<rect x="1565.25" y="416.0" width="5.25" height="1.4" fill="#d3d8e0"/>
<rect x="1571.25" y="416.0" width="6.75" height="1.4" fill="#d3d8e0"/>
<rect x="1578.75" y="416.0" width="1.50" height="1.4" fill="#d3d8e0"/>
<rect x="1581.00" y="416.0" width="2.25" height="1.4" fill="#d3d8e0"/>
<rect x="1584.00" y="416.0" width="6.75" height="1.4" fill="#d3d8e0"/>
<rect x="1591.50" y="416.0" width="4.50" height="1.4" fill="#d3d8e0"/>
<rect x="1524.00" y="418.0" width="1.50" height="1.4" fill="#d3d8e0"/>
<rect x="1526.25" y="418.0" width="3.75" height="1.4" fill="#d3d8e0"/>
<rect x="1530.75" y="418.0" width="4.50" height="1.4" fill="#d3d8e0"/>
<rect x="1536.00" y="418.0" width="3.75" height="1.4" fill="#d3d8e0"/>
<rect x="1540.50" y="418.0" width="4.50" height="1.4" fill="#d3d8e0"/>
<rect x="1545.75" y="418.0" width="1.50" height="1.4" fill="#d3d8e0"/>
<rect x="1548.00" y="418.0" width="3.00" height="1.4" fill="#d3d8e0"/>
<rect x="1551.75" y="418.0" width="5.25" height="1.4" fill="#d3d8e0"/>
<rect x="1557.75" y="418.0" width="3.00" height="1.4" fill="#d3d8e0"/>
<rect x="1561.50" y="418.0" width="5.25" height="1.4" fill="#d3d8e0"/>
<rect x="1567.50" y="418.0" width="4.50" height="1.4" fill="#d3d8e0"/>
<rect x="1572.75" y="418.0" width="2.25" height="1.4" fill="#d3d8e0"/>
<rect x="1575.75" y="418.0" width="8.25" height="1.4" fill="#d3d8e0"/>
<rect x="1584.75" y="418.0" width="5.25" height="1.4" fill="#d3d8e0"/>
<rect x="1590.75" y="418.0" width="1.50" height="1.4" fill="#d3d8e0"/>
<rect x="1593.00" y="418.0" width="1.50" height="1.4" fill="#d3d8e0"/>
<rect x="1524.00" y="420.0" width="1.50" height="1.4" fill="#d3d8e0"/>
<rect x="1526.25" y="420.0" width="2.25" height="1.4" fill="#d3d8e0"/>
<rect x="1529.25" y="420.0" width="6.00" height="1.4" fill="#d3d8e0"/>
<rect x="1536.00" y="420.0" width="4.50" height="1.4" fill="#d3d8e0"/>
<rect x="1541.25" y="420.0" width="4.50" height="1.4" fill="#d3d8e0"/>
<rect x="1546.50" y="420.0" width="6.00" height="1.4" fill="#d3d8e0"/>
<rect x="1553.25" y="420.0" width="3.00" height="1.4" fill="#d3d8e0"/>
<rect x="1557.00" y="420.0" width="6.00" height="1.4" fill="#d3d8e0"/>
<rect x="1563.75" y="420.0" width="3.75" height="1.4" fill="#d3d8e0"/>
<rect x="1568.25" y="420.0" width="6.00" height="1.4" fill="#d3d8e0"/>
<rect x="1575.00" y="420.0" width="1.50" height="1.4" fill="#d3d8e0"/>
<rect x="1577.25" y="420.0" width="3.00" height="1.4" fill="#d3d8e0"/>
<rect x="1581.00" y="420.0" width="1.50" height="1.4" fill="#d3d8e0"/>
<rect x="1583.25" y="420.0" width="3.00" height="1.4" fill="#d3d8e0"/>
<rect x="1587.00" y="420.0" width="6.75" height="1.4" fill="#d3d8e0"/>
<rect x="1594.50" y="420.0" width="3.00" height="1.4" fill="#d3d8e0"/>
<rect x="1524.00" y="422.0" width="3.00" height="1.4" fill="#d3d8e0"/>
<rect x="1527.75" y="422.0" width="4.50" height="1.4" fill="#d3d8e0"/>
<rect x="1533.00" y="422.0" width="3.00" height="1.4" fill="#d3d8e0"/>
<rect x="1536.75" y="422.0" width="5.25" height="1.4" fill="#d3d8e0"/>
<rect x="1542.75" y="422.0" width="1.50" height="1.4" fill="#d3d8e0"/>
<rect x="1545.00" y="422.0" width="6.00" height="1.4" fill="#d3d8e0"/>
<rect x="1551.75" y="422.0" width="0.75" height="1.4" fill="#d3d8e0"/>
<rect x="1553.25" y="422.0" width="1.50" height="1.4" fill="#d3d8e0"/>
<rect x="1555.50" y="422.0" width="3.00" height="1.4" fill="#d3d8e0"/>
<rect x="1559.25" y="422.0" width="6.75" height="1.4" fill="#d3d8e0"/>
<rect x="1566.00" y="422.0" width="1.50" height="1.4" fill="#4fb3dd"/>
<rect x="1567.50" y="422.0" width="1.50" height="1.4" fill="#f0616d"/>
<rect x="1569.00" y="422.0" width="0.75" height="1.4" fill="#4fb3dd"/>
<rect x="1524.00" y="424.0" width="0.75" height="1.4" fill="#4fb3dd"/>
<rect x="1524.75" y="424.0" width="1.50" height="1.4" fill="#f0616d"/>
<rect x="1527.00" y="424.0" width="1.50" height="1.4" fill="#4fb3dd"/>
<rect x="1524.00" y="426.0" width="0.75" height="1.4" fill="#4fb3dd"/>
<rect x="1524.75" y="426.0" width="1.50" height="1.4" fill="#f0616d"/>
<rect x="1527.00" y="426.0" width="1.50" height="1.4" fill="#4fb3dd"/>
<rect x="1521.00" y="428.0" width="1.50" height="1.4" fill="#4fb3dd"/>
<rect x="1522.50" y="428.0" width="1.50" height="1.4" fill="#f0616d"/>
<rect x="1524.00" y="428.0" width="0.75" height="1.4" fill="#4fb3dd"/>
<rect x="1518.00" y="430.0" width="1.50" height="1.4" fill="#4fb3dd"/>
<rect x="1519.50" y="430.0" width="0.75" height="1.4" fill="#f0616d"/>
<rect x="1520.25" y="430.0" width="0.75" height="1.4" fill="#4fb3dd"/>
<rect x="1518.00" y="432.0" width="0.75" height="1.4" fill="#4fb3dd"/>
<rect x="1518.75" y="432.0" width="1.50" height="1.4" fill="#f0616d"/>
<rect x="1521.00" y="432.0" width="1.50" height="1.4" fill="#4fb3dd"/>
<rect x="1518.00" y="434.0" width="0.75" height="1.4" fill="#4fb3dd"/>
<rect x="1518.75" y="434.0" width="1.50" height="1.4" fill="#f0616d"/>
<rect x="1520.25" y="434.0" width="0.75" height="1.4" fill="#4fb3dd"/>
<rect x="1521.00" y="434.0" width="3.00" height="1.4" fill="#d3d8e0"/>
<rect x="1524.75" y="434.0" width="1.50" height="1.4" fill="#d3d8e0"/>
<rect x="1527.00" y="434.0" width="6.00" height="1.4" fill="#d3d8e0"/>
<rect x="1533.75" y="434.0" width="5.25" height="1.4" fill="#d3d8e0"/>
<rect x="1539.75" y="434.0" width="0.75" height="1.4" fill="#d3d8e0"/>
<rect x="1540.50" y="434.0" width="1.50" height="1.4" fill="#4fb3dd"/>
<rect x="1542.00" y="434.0" width="1.50" height="1.4" fill="#f0616d"/>
<rect x="1543.50" y="434.0" width="0.75" height="1.4" fill="#4fb3dd"/>
<rect x="1518.00" y="436.0" width="0.75" height="1.4" fill="#4fb3dd"/>
<rect x="1518.75" y="436.0" width="0.75" height="1.4" fill="#f0616d"/>
<rect x="1519.50" y="436.0" width="0.75" height="1.4" fill="#4fb3dd"/>
<rect x="1521.00" y="438.0" width="0.75" height="1.4" fill="#4fb3dd"/>
<rect x="1521.75" y="438.0" width="1.50" height="1.4" fill="#f0616d"/>
<rect x="1523.25" y="438.0" width="0.75" height="1.4" fill="#4fb3dd"/>
<rect x="1524.00" y="440.0" width="0.75" height="1.4" fill="#4fb3dd"/>
<rect x="1524.75" y="440.0" width="1.50" height="1.4" fill="#f0616d"/>
<rect x="1526.25" y="440.0" width="0.75" height="1.4" fill="#4fb3dd"/>
<rect x="1527.00" y="440.0" width="1.50" height="1.4" fill="#d3d8e0"/>
<rect x="1529.25" y="440.0" width="6.00" height="1.4" fill="#d3d8e0"/>
<rect x="1536.00" y="440.0" width="6.75" height="1.4" fill="#d3d8e0"/>
<rect x="1543.50" y="440.0" width="6.00" height="1.4" fill="#d3d8e0"/>
<rect x="1550.25" y="440.0" width="5.25" height="1.4" fill="#d3d8e0"/>
<rect x="1556.25" y="440.0" width="3.75" height="1.4" fill="#d3d8e0"/>
<rect x="1560.75" y="440.0" width="4.50" height="1.4" fill="#d3d8e0"/>
<rect x="1566.00" y="440.0" width="3.00" height="1.4" fill="#d3d8e0"/>
<rect x="1569.75" y="440.0" width="3.00" height="1.4" fill="#d3d8e0"/>
<rect x="1573.50" y="440.0" width="3.75" height="1.4" fill="#d3d8e0"/>
<rect x="1578.00" y="440.0" width="5.25" height="1.4" fill="#d3d8e0"/>
<rect x="1584.00" y="440.0" width="5.25" height="1.4" fill="#d3d8e0"/>
<rect x="1590.00" y="440.0" width="3.75" height="1.4" fill="#d3d8e0"/>
<rect x="1594.50" y="440.0" width="4.50" height="1.4" fill="#d3d8e0"/>
<rect x="1524.00" y="442.0" width="3.00" height="1.4" fill="#d3d8e0"/>
<rect x="1527.75" y="442.0" width="4.50" height="1.4" fill="#d3d8e0"/>
<rect x="1533.00" y="442.0" width="6.75" height="1.4" fill="#d3d8e0"/>
<rect x="1540.50" y="442.0" width="3.75" height="1.4" fill="#d3d8e0"/>
<rect x="1545.00" y="442.0" width="4.50" height="1.4" fill="#d3d8e0"/>
<rect x="1550.25" y="442.0" width="8.25" height="1.4" fill="#d3d8e0"/>
<rect x="1559.25" y="442.0" width="2.25" height="1.4" fill="#d3d8e0"/>
<rect x="1562.25" y="442.0" width="5.25" height="1.4" fill="#d3d8e0"/>
<rect x="1568.25" y="442.0" width="1.50" height="1.4" fill="#d3d8e0"/>
<rect x="1570.50" y="442.0" width="3.75" height="1.4" fill="#d3d8e0"/>
<rect x="1575.00" y="442.0" width="4.50" height="1.4" fill="#d3d8e0"/>
<rect x="1580.25" y="442.0" width="1.50" height="1.4" fill="#d3d8e0"/>
<rect x="1582.50" y="442.0" width="3.00" height="1.4" fill="#d3d8e0"/>
<rect x="1586.25" y="442.0" width="1.50" height="1.4" fill="#d3d8e0"/>
<rect x="1588.50" y="442.0" width="3.00" height="1.4" fill="#d3d8e0"/>
<rect x="1591.50" y="442.0" width="1.50" height="1.4" fill="#4fb3dd"/>
<rect x="1593.00" y="442.0" width="1.50" height="1.4" fill="#f0616d"/>
<rect x="1594.50" y="442.0" width="0.75" height="1.4" fill="#4fb3dd"/>
<rect x="1524.00" y="444.0" width="0.75" height="1.4" fill="#4fb3dd"/>
<rect x="1524.75" y="444.0" width="1.50" height="1.4" fill="#f0616d"/>
<rect x="1527.00" y="444.0" width="1.50" height="1.4" fill="#4fb3dd"/>
<rect x="1524.00" y="446.0" width="0.75" height="1.4" fill="#4fb3dd"/>
<rect x="1524.75" y="446.0" width="1.50" height="1.4" fill="#f0616d"/>
<rect x="1526.25" y="446.0" width="0.75" height="1.4" fill="#4fb3dd"/>
<rect x="1527.00" y="446.0" width="6.00" height="1.4" fill="#d3d8e0"/>
<rect x="1533.75" y="446.0" width="4.50" height="1.4" fill="#d3d8e0"/>
<rect x="1539.00" y="446.0" width="4.50" height="1.4" fill="#d3d8e0"/>
<rect x="1544.25" y="446.0" width="2.25" height="1.4" fill="#d3d8e0"/>
<rect x="1547.25" y="446.0" width="5.25" height="1.4" fill="#d3d8e0"/>
<rect x="1553.25" y="446.0" width="4.50" height="1.4" fill="#d3d8e0"/>
<rect x="1558.50" y="446.0" width="2.25" height="1.4" fill="#d3d8e0"/>
<rect x="1561.50" y="446.0" width="2.25" height="1.4" fill="#d3d8e0"/>
<rect x="1564.50" y="446.0" width="8.25" height="1.4" fill="#d3d8e0"/>
<rect x="1573.50" y="446.0" width="4.50" height="1.4" fill="#d3d8e0"/>
<rect x="1578.75" y="446.0" width="8.25" height="1.4" fill="#d3d8e0"/>
<rect x="1587.75" y="446.0" width="3.75" height="1.4" fill="#d3d8e0"/>
<rect x="1592.25" y="446.0" width="1.50" height="1.4" fill="#d3d8e0"/>
<rect x="1594.50" y="446.0" width="3.00" height="1.4" fill="#d3d8e0"/>
<rect x="1524.00" y="448.0" width="6.75" height="1.4" fill="#d3d8e0"/>
<rect x="1531.50" y="448.0" width="3.00" height="1.4" fill="#d3d8e0"/>
<rect x="1535.25" y="448.0" width="5.25" height="1.4" fill="#d3d8e0"/>
<rect x="1541.25" y="448.0" width="2.25" height="1.4" fill="#d3d8e0"/>
<rect x="1544.25" y="448.0" width="4.50" height="1.4" fill="#d3d8e0"/>
<rect x="1549.50" y="448.0" width="3.00" height="1.4" fill="#d3d8e0"/>
<rect x="1553.25" y="448.0" width="1.50" height="1.4" fill="#d3d8e0"/>
<rect x="1555.50" y="448.0" width="5.25" height="1.4" fill="#d3d8e0"/>
<rect x="1561.50" y="448.0" width="5.25" height="1.4" fill="#d3d8e0"/>
<rect x="1567.50" y="448.0" width="2.25" height="1.4" fill="#d3d8e0"/>
<rect x="1570.50" y="448.0" width="3.75" height="1.4" fill="#d3d8e0"/>
<rect x="1575.00" y="448.0" width="6.00" height="1.4" fill="#d3d8e0"/>
<rect x="1581.75" y="448.0" width="3.00" height="1.4" fill="#d3d8e0"/>
<rect x="1585.50" y="448.0" width="1.50" height="1.4" fill="#d3d8e0"/>
<rect x="1587.75" y="448.0" width="4.50" height="1.4" fill="#d3d8e0"/>
<rect x="1524.00" y="450.0" width="1.50" height="1.4" fill="#d3d8e0"/>
<rect x="1526.25" y="450.0" width="3.75" height="1.4" fill="#d3d8e0"/>
<rect x="1530.75" y="450.0" width="4.50" height="1.4" fill="#d3d8e0"/>
<rect x="1536.00" y="450.0" width="2.25" height="1.4" fill="#d3d8e0"/>
<rect x="1539.00" y="450.0" width="4.50" height="1.4" fill="#d3d8e0"/>
<rect x="1544.25" y="450.0" width="3.00" height="1.4" fill="#d3d8e0"/>
<rect x="1548.00" y="450.0" width="4.50" height="1.4" fill="#d3d8e0"/>
<rect x="1553.25" y="450.0" width="3.00" height="1.4" fill="#d3d8e0"/>
<rect x="1557.00" y="450.0" width="1.50" height="1.4" fill="#d3d8e0"/>
<rect x="1559.25" y="450.0" width="3.00" height="1.4" fill="#d3d8e0"/>
<rect x="1563.00" y="450.0" width="3.75" height="1.4" fill="#d3d8e0"/>
<rect x="1567.50" y="450.0" width="3.00" height="1.4" fill="#d3d8e0"/>
<rect x="1571.25" y="450.0" width="3.00" height="1.4" fill="#d3d8e0"/>
<rect x="1575.00" y="450.0" width="1.50" height="1.4" fill="#d3d8e0"/>
<rect x="1577.25" y="450.0" width="5.25" height="1.4" fill="#d3d8e0"/>
<rect x="1583.25" y="450.0" width="3.75" height="1.4" fill="#d3d8e0"/>
<rect x="1587.00" y="450.0" width="1.50" height="1.4" fill="#4fb3dd"/>
<rect x="1588.50" y="450.0" width="1.50" height="1.4" fill="#f0616d"/>
<rect x="1590.00" y="450.0" width="0.75" height="1.4" fill="#4fb3dd"/>
<rect x="1524.00" y="452.0" width="0.75" height="1.4" fill="#4fb3dd"/>
<rect x="1524.75" y="452.0" width="1.50" height="1.4" fill="#f0616d"/>
<rect x="1527.00" y="452.0" width="1.50" height="1.4" fill="#4fb3dd"/>
<rect x="1524.00" y="454.0" width="0.75" height="1.4" fill="#4fb3dd"/>
<rect x="1524.75" y="454.0" width="1.50" height="1.4" fill="#f0616d"/>
<rect x="1527.00" y="454.0" width="1.50" height="1.4" fill="#4fb3dd"/>
<rect x="1521.00" y="456.0" width="1.50" height="1.4" fill="#4fb3dd"/>
<rect x="1522.50" y="456.0" width="1.50" height="1.4" fill="#f0616d"/>
<rect x="1524.00" y="456.0" width="0.75" height="1.4" fill="#4fb3dd"/>
<rect x="1518.00" y="458.0" width="1.50" height="1.4" fill="#4fb3dd"/>
<rect x="1519.50" y="458.0" width="0.75" height="1.4" fill="#f0616d"/>
<rect x="1520.25" y="458.0" width="0.75" height="1.4" fill="#4fb3dd"/>
<rect x="1518.00" y="460.0" width="0.75" height="1.4" fill="#4fb3dd"/>
<rect x="1518.75" y="460.0" width="1.50" height="1.4" fill="#f0616d"/>
<rect x="1521.00" y="460.0" width="1.50" height="1.4" fill="#4fb3dd"/>
<rect x="1518.00" y="462.0" width="0.75" height="1.4" fill="#4fb3dd"/>
<rect x="1518.75" y="462.0" width="1.50" height="1.4" fill="#f0616d"/>
<rect x="1520.25" y="462.0" width="0.75" height="1.4" fill="#4fb3dd"/>
<rect x="1521.00" y="462.0" width="3.00" height="1.4" fill="#d3d8e0"/>
<rect x="1524.75" y="462.0" width="1.50" height="1.4" fill="#d3d8e0"/>
<rect x="1527.00" y="462.0" width="6.00" height="1.4" fill="#d3d8e0"/>
<rect x="1533.75" y="462.0" width="5.25" height="1.4" fill="#d3d8e0"/>
<rect x="1539.75" y="462.0" width="0.75" height="1.4" fill="#d3d8e0"/>
<rect x="1540.50" y="462.0" width="1.50" height="1.4" fill="#4fb3dd"/>
<rect x="1542.00" y="462.0" width="1.50" height="1.4" fill="#f0616d"/>
<rect x="1543.50" y="462.0" width="0.75" height="1.4" fill="#4fb3dd"/>
<rect x="1518.00" y="464.0" width="0.75" height="1.4" fill="#4fb3dd"/>
<rect x="1518.75" y="464.0" width="0.75" height="1.4" fill="#f0616d"/>
<rect x="1519.50" y="464.0" width="0.75" height="1.4" fill="#4fb3dd"/>
<rect x="1521.00" y="466.0" width="0.75" height="1.4" fill="#4fb3dd"/>
<rect x="1521.75" y="466.0" width="1.50" height="1.4" fill="#f0616d"/>
<rect x="1523.25" y="466.0" width="0.75" height="1.4" fill="#4fb3dd"/>
<rect x="1524.00" y="468.0" width="0.75" height="1.4" fill="#4fb3dd"/>
<rect x="1524.75" y="468.0" width="1.50" height="1.4" fill="#f0616d"/>
<rect x="1526.25" y="468.0" width="0.75" height="1.4" fill="#4fb3dd"/>
<rect x="1527.00" y="468.0" width="2.25" height="1.4" fill="#d3d8e0"/>
<rect x="1530.00" y="468.0" width="1.50" height="1.4" fill="#d3d8e0"/>
<rect x="1532.25" y="468.0" width="5.25" height="1.4" fill="#d3d8e0"/>
<rect x="1538.25" y="468.0" width="6.00" height="1.4" fill="#d3d8e0"/>
<rect x="1545.00" y="468.0" width="3.00" height="1.4" fill="#d3d8e0"/>
<rect x="1548.75" y="468.0" width="1.50" height="1.4" fill="#d3d8e0"/>
<rect x="1551.00" y="468.0" width="3.75" height="1.4" fill="#d3d8e0"/>
<rect x="1555.50" y="468.0" width="6.75" height="1.4" fill="#d3d8e0"/>
<rect x="1563.00" y="468.0" width="6.75" height="1.4" fill="#d3d8e0"/>
<rect x="1570.50" y="468.0" width="5.25" height="1.4" fill="#d3d8e0"/>
<rect x="1576.50" y="468.0" width="3.00" height="1.4" fill="#d3d8e0"/>
<rect x="1580.25" y="468.0" width="1.50" height="1.4" fill="#d3d8e0"/>
<rect x="1582.50" y="468.0" width="4.50" height="1.4" fill="#d3d8e0"/>
<rect x="1587.75" y="468.0" width="1.50" height="1.4" fill="#d3d8e0"/>
<rect x="1590.00" y="468.0" width="3.75" height="1.4" fill="#d3d8e0"/>
<rect x="1594.50" y="468.0" width="2.25" height="1.4" fill="#d3d8e0"/>
<rect x="1524.00" y="470.0" width="1.50" height="1.4" fill="#d3d8e0"/>
<rect x="1526.25" y="470.0" width="8.25" height="1.4" fill="#d3d8e0"/>
<rect x="1535.25" y="470.0" width="1.50" height="1.4" fill="#d3d8e0"/>
<rect x="1537.50" y="470.0" width="4.50" height="1.4" fill="#d3d8e0"/>
<rect x="1542.75" y="470.0" width="3.00" height="1.4" fill="#d3d8e0"/>
<rect x="1546.50" y="470.0" width="6.75" height="1.4" fill="#d3d8e0"/>
<rect x="1554.00" y="470.0" width="1.50" height="1.4" fill="#d3d8e0"/>
<rect x="1556.25" y="470.0" width="2.25" height="1.4" fill="#d3d8e0"/>
<rect x="1559.25" y="470.0" width="4.50" height="1.4" fill="#d3d8e0"/>
<rect x="1564.50" y="470.0" width="3.75" height="1.4" fill="#d3d8e0"/>
<rect x="1569.00" y="470.0" width="1.50" height="1.4" fill="#d3d8e0"/>
<rect x="1571.25" y="470.0" width="3.00" height="1.4" fill="#d3d8e0"/>
<rect x="1575.00" y="470.0" width="1.50" height="1.4" fill="#d3d8e0"/>
<rect x="1577.25" y="470.0" width="8.25" height="1.4" fill="#d3d8e0"/>
<rect x="1586.25" y="470.0" width="3.00" height="1.4" fill="#d3d8e0"/>
<rect x="1590.00" y="470.0" width="0.75" height="1.4" fill="#d3d8e0"/>
<rect x="1591.50" y="470.0" width="3.00" height="1.4" fill="#d3d8e0"/>
<rect x="1524.00" y="472.0" width="3.75" height="1.4" fill="#d3d8e0"/>
<rect x="1528.50" y="472.0" width="1.50" height="1.4" fill="#d3d8e0"/>
<rect x="1530.75" y="472.0" width="3.75" height="1.4" fill="#d3d8e0"/>
<rect x="1535.25" y="472.0" width="3.00" height="1.4" fill="#d3d8e0"/>
<rect x="1539.00" y="472.0" width="3.75" height="1.4" fill="#d3d8e0"/>
<rect x="1543.50" y="472.0" width="4.50" height="1.4" fill="#d3d8e0"/>
<rect x="1548.75" y="472.0" width="8.25" height="1.4" fill="#d3d8e0"/>
<rect x="1557.75" y="472.0" width="6.75" height="1.4" fill="#d3d8e0"/>
<rect x="1565.25" y="472.0" width="2.25" height="1.4" fill="#d3d8e0"/>
<rect x="1568.25" y="472.0" width="0.75" height="1.4" fill="#d3d8e0"/>
<rect x="1569.75" y="472.0" width="6.00" height="1.4" fill="#d3d8e0"/>
<rect x="1576.50" y="472.0" width="1.50" height="1.4" fill="#d3d8e0"/>
<rect x="1578.75" y="472.0" width="5.25" height="1.4" fill="#d3d8e0"/>
<rect x="1584.75" y="472.0" width="4.50" height="1.4" fill="#d3d8e0"/>
<rect x="1590.00" y="472.0" width="5.25" height="1.4" fill="#d3d8e0"/>
<rect x="1596.00" y="472.0" width="1.50" height="1.4" fill="#d3d8e0"/>
<rect x="1524.00" y="474.0" width="3.75" height="1.4" fill="#d3d8e0"/>
<rect x="1528.50" y="474.0" width="3.75" height="1.4" fill="#d3d8e0"/>
<rect x="1533.00" y="474.0" width="6.00" height="1.4" fill="#d3d8e0"/>
<rect x="1539.75" y="474.0" width="3.00" height="1.4" fill="#d3d8e0"/>
<rect x="1543.50" y="474.0" width="1.50" height="1.4" fill="#d3d8e0"/>
<rect x="1545.75" y="474.0" width="5.25" height="1.4" fill="#d3d8e0"/>
<rect x="1551.75" y="474.0" width="4.50" height="1.4" fill="#d3d8e0"/>
<rect x="1557.00" y="474.0" width="2.25" height="1.4" fill="#d3d8e0"/>
<rect x="1560.00" y="474.0" width="3.75" height="1.4" fill="#d3d8e0"/>
<rect x="1564.50" y="474.0" width="1.50" height="1.4" fill="#d3d8e0"/>
<rect x="1566.75" y="474.0" width="1.50" height="1.4" fill="#d3d8e0"/>
<rect x="1569.00" y="474.0" width="3.00" height="1.4" fill="#d3d8e0"/>
<rect x="1572.75" y="474.0" width="4.50" height="1.4" fill="#d3d8e0"/>
<rect x="1578.00" y="474.0" width="3.00" height="1.4" fill="#d3d8e0"/>
<rect x="1581.75" y="474.0" width="3.00" height="1.4" fill="#d3d8e0"/>
<rect x="1585.50" y="474.0" width="4.50" height="1.4" fill="#d3d8e0"/>
<rect x="1590.75" y="474.0" width="4.50" height="1.4" fill="#d3d8e0"/>
<rect x="1524.00" y="476.0" width="5.25" height="1.4" fill="#d3d8e0"/>
<rect x="1524.00" y="478.0" width="1.50" height="1.4" fill="#d3d8e0"/>
<rect x="1526.25" y="478.0" width="6.00" height="1.4" fill="#d3d8e0"/>
<rect x="1533.00" y="478.0" width="4.50" height="1.4" fill="#d3d8e0"/>
<rect x="1538.25" y="478.0" width="3.00" height="1.4" fill="#d3d8e0"/>
<rect x="1542.00" y="478.0" width="1.50" height="1.4" fill="#d3d8e0"/>
<rect x="1544.25" y="478.0" width="6.00" height="1.4" fill="#d3d8e0"/>
<rect x="1551.00" y="478.0" width="3.00" height="1.4" fill="#d3d8e0"/>
<rect x="1554.75" y="478.0" width="5.25" height="1.4" fill="#d3d8e0"/>
<rect x="1560.75" y="478.0" width="4.50" height="1.4" fill="#d3d8e0"/>
<rect x="1565.25" y="478.0" width="1.50" height="1.4" fill="#4fb3dd"/>
<rect x="1566.75" y="478.0" width="1.50" height="1.4" fill="#f0616d"/>
<rect x="1568.25" y="478.0" width="0.75" height="1.4" fill="#4fb3dd"/>
<rect x="1524.00" y="480.0" width="0.75" height="1.4" fill="#4fb3dd"/>
<rect x="1524.75" y="480.0" width="1.50" height="1.4" fill="#f0616d"/>
<rect x="1527.00" y="480.0" width="1.50" height="1.4" fill="#4fb3dd"/>
<rect x="1524.00" y="482.0" width="0.75" height="1.4" fill="#4fb3dd"/>
<rect x="1524.75" y="482.0" width="1.50" height="1.4" fill="#f0616d"/>
<rect x="1526.25" y="482.0" width="0.75" height="1.4" fill="#4fb3dd"/>
<rect x="1527.00" y="482.0" width="6.75" height="1.4" fill="#d3d8e0"/>
<rect x="1534.50" y="482.0" width="1.50" height="1.4" fill="#d3d8e0"/>
<rect x="1536.75" y="482.0" width="3.75" height="1.4" fill="#d3d8e0"/>
<rect x="1541.25" y="482.0" width="1.50" height="1.4" fill="#d3d8e0"/>
<rect x="1543.50" y="482.0" width="0.75" height="1.4" fill="#d3d8e0"/>
<rect x="1545.00" y="482.0" width="1.50" height="1.4" fill="#d3d8e0"/>
<rect x="1547.25" y="482.0" width="1.50" height="1.4" fill="#d3d8e0"/>
<rect x="1549.50" y="482.0" width="6.00" height="1.4" fill="#d3d8e0"/>
<rect x="1556.25" y="482.0" width="6.00" height="1.4" fill="#d3d8e0"/>
<rect x="1563.00" y="482.0" width="6.75" height="1.4" fill="#d3d8e0"/>
<rect x="1570.50" y="482.0" width="1.50" height="1.4" fill="#d3d8e0"/>
<rect x="1572.75" y="482.0" width="3.75" height="1.4" fill="#d3d8e0"/>
<rect x="1577.25" y="482.0" width="4.50" height="1.4" fill="#d3d8e0"/>
<rect x="1582.50" y="482.0" width="4.50" height="1.4" fill="#d3d8e0"/>
<rect x="1587.75" y="482.0" width="2.25" height="1.4" fill="#d3d8e0"/>
<rect x="1590.75" y="482.0" width="6.75" height="1.4" fill="#d3d8e0"/>
<rect x="1524.00" y="484.0" width="2.25" height="1.4" fill="#d3d8e0"/>
<rect x="1527.00" y="484.0" width="8.25" height="1.4" fill="#d3d8e0"/>
<rect x="1536.00" y="484.0" width="4.50" height="1.4" fill="#d3d8e0"/>
<rect x="1541.25" y="484.0" width="4.50" height="1.4" fill="#d3d8e0"/>
<rect x="1546.50" y="484.0" width="1.50" height="1.4" fill="#d3d8e0"/>
<rect x="1548.75" y="484.0" width="6.00" height="1.4" fill="#d3d8e0"/>
<rect x="1555.50" y="484.0" width="1.50" height="1.4" fill="#d3d8e0"/>
<rect x="1557.75" y="484.0" width="2.25" height="1.4" fill="#d3d8e0"/>
<rect x="1560.75" y="484.0" width="1.50" height="1.4" fill="#d3d8e0"/>
<rect x="1563.00" y="484.0" width="3.75" height="1.4" fill="#d3d8e0"/>
<rect x="1567.50" y="484.0" width="1.50" height="1.4" fill="#d3d8e0"/>
<rect x="1569.75" y="484.0" width="5.25" height="1.4" fill="#d3d8e0"/>
<rect x="1575.75" y="484.0" width="1.50" height="1.4" fill="#d3d8e0"/>
<rect x="1578.00" y="484.0" width="1.50" height="1.4" fill="#d3d8e0"/>
<rect x="1580.25" y="484.0" width="3.75" height="1.4" fill="#d3d8e0"/>
<rect x="1584.75" y="484.0" width="1.50" height="1.4" fill="#d3d8e0"/>
<rect x="1587.00" y="484.0" width="1.50" height="1.4" fill="#d3d8e0"/>
<rect x="1589.25" y="484.0" width="0.75" height="1.4" fill="#d3d8e0"/>
<rect x="1590.75" y="484.0" width="4.50" height="1.4" fill="#d3d8e0"/>
<rect x="1524.00" y="486.0" width="5.25" height="1.4" fill="#d3d8e0"/>
<rect x="1530.00" y="486.0" width="3.00" height="1.4" fill="#d3d8e0"/>
<rect x="1533.75" y="486.0" width="4.50" height="1.4" fill="#d3d8e0"/>
<rect x="1539.00" y="486.0" width="1.50" height="1.4" fill="#d3d8e0"/>
<rect x="1541.25" y="486.0" width="1.50" height="1.4" fill="#d3d8e0"/>
<rect x="1543.50" y="486.0" width="1.50" height="1.4" fill="#d3d8e0"/>
<rect x="1545.75" y="486.0" width="1.50" height="1.4" fill="#d3d8e0"/>
<rect x="1548.00" y="486.0" width="1.50" height="1.4" fill="#d3d8e0"/>
<rect x="1550.25" y="486.0" width="4.50" height="1.4" fill="#d3d8e0"/>
<rect x="1555.50" y="486.0" width="3.75" height="1.4" fill="#d3d8e0"/>
<rect x="1560.00" y="486.0" width="4.50" height="1.4" fill="#d3d8e0"/>
<rect x="1565.25" y="486.0" width="4.50" height="1.4" fill="#d3d8e0"/>
<rect x="1570.50" y="486.0" width="1.50" height="1.4" fill="#d3d8e0"/>
<rect x="1572.75" y="486.0" width="3.00" height="1.4" fill="#d3d8e0"/>
<rect x="1576.50" y="486.0" width="4.50" height="1.4" fill="#d3d8e0"/>
<rect x="1581.75" y="486.0" width="1.50" height="1.4" fill="#d3d8e0"/>
<rect x="1584.00" y="486.0" width="3.00" height="1.4" fill="#d3d8e0"/>
<rect x="1587.75" y="486.0" width="6.00" height="1.4" fill="#d3d8e0"/>
<rect x="1524.00" y="488.0" width="8.25" height="1.4" fill="#d3d8e0"/>
<rect x="1524.00" y="490.0" width="8.25" height="1.4" fill="#d3d8e0"/>
<rect x="1533.00" y="490.0" width="1.50" height="1.4" fill="#d3d8e0"/>
<rect x="1535.25" y="490.0" width="3.00" height="1.4" fill="#d3d8e0"/>
<rect x="1539.00" y="490.0" width="2.25" height="1.4" fill="#d3d8e0"/>
<rect x="1542.00" y="490.0" width="3.00" height="1.4" fill="#d3d8e0"/>
<rect x="1545.75" y="490.0" width="6.00" height="1.4" fill="#d3d8e0"/>
<rect x="1552.50" y="490.0" width="4.50" height="1.4" fill="#d3d8e0"/>
<rect x="1557.75" y="490.0" width="1.50" height="1.4" fill="#d3d8e0"/>
<rect x="1560.00" y="490.0" width="4.50" height="1.4" fill="#d3d8e0"/>
<rect x="1565.25" y="490.0" width="3.00" height="1.4" fill="#d3d8e0"/>
<rect x="1568.25" y="490.0" width="1.50" height="1.4" fill="#4fb3dd"/>
<rect x="1569.75" y="490.0" width="1.50" height="1.4" fill="#f0616d"/>
<rect x="1571.25" y="490.0" width="0.75" height="1.4" fill="#4fb3dd"/>
<rect x="1524.00" y="492.0" width="0.75" height="1.4" fill="#4fb3dd"/>
<rect x="1524.75" y="492.0" width="1.50" height="1.4" fill="#f0616d"/>
<rect x="1527.00" y="492.0" width="1.50" height="1.4" fill="#4fb3dd"/>
<rect x="1524.00" y="494.0" width="1.50" height="1.4" fill="#4fb3dd"/>
<rect x="1525.50" y="494.0" width="1.50" height="1.4" fill="#f0616d"/>
<rect x="1527.00" y="494.0" width="0.75" height="1.4" fill="#4fb3dd"/>
<rect x="1521.00" y="496.0" width="1.50" height="1.4" fill="#4fb3dd"/>
<rect x="1522.50" y="496.0" width="1.50" height="1.4" fill="#f0616d"/>
<rect x="1524.00" y="496.0" width="0.75" height="1.4" fill="#4fb3dd"/>
<rect x="1518.00" y="498.0" width="1.50" height="1.4" fill="#4fb3dd"/>
<rect x="1519.50" y="498.0" width="0.75" height="1.4" fill="#f0616d"/>
<rect x="1520.25" y="498.0" width="0.75" height="1.4" fill="#4fb3dd"/>
<rect x="1518.00" y="500.0" width="0.75" height="1.4" fill="#4fb3dd"/>
<rect x="1518.75" y="500.0" width="1.50" height="1.4" fill="#f0616d"/>
<rect x="1521.00" y="500.0" width="1.50" height="1.4" fill="#4fb3dd"/>
<rect x="1518.00" y="502.0" width="0.75" height="1.4" fill="#4fb3dd"/>
<rect x="1518.75" y="502.0" width="1.50" height="1.4" fill="#f0616d"/>
<rect x="1520.25" y="502.0" width="0.75" height="1.4" fill="#4fb3dd"/>
<rect x="1521.00" y="502.0" width="3.00" height="1.4" fill="#d3d8e0"/>
<rect x="1524.75" y="502.0" width="1.50" height="1.4" fill="#d3d8e0"/>
<rect x="1527.00" y="502.0" width="6.00" height="1.4" fill="#d3d8e0"/>
<rect x="1533.75" y="502.0" width="5.25" height="1.4" fill="#d3d8e0"/>
<rect x="1539.75" y="502.0" width="0.75" height="1.4" fill="#d3d8e0"/>
<rect x="1540.50" y="502.0" width="1.50" height="1.4" fill="#4fb3dd"/>
<rect x="1542.00" y="502.0" width="1.50" height="1.4" fill="#f0616d"/>
<rect x="1543.50" y="502.0" width="0.75" height="1.4" fill="#4fb3dd"/>
<rect x="1518.00" y="504.0" width="0.75" height="1.4" fill="#4fb3dd"/>
<rect x="1518.75" y="504.0" width="0.75" height="1.4" fill="#f0616d"/>
<rect x="1519.50" y="504.0" width="0.75" height="1.4" fill="#4fb3dd"/>
<rect x="1521.00" y="506.0" width="0.75" height="1.4" fill="#4fb3dd"/>
<rect x="1521.75" y="506.0" width="1.50" height="1.4" fill="#f0616d"/>
<rect x="1523.25" y="506.0" width="0.75" height="1.4" fill="#4fb3dd"/>
<rect x="1524.00" y="508.0" width="0.75" height="1.4" fill="#4fb3dd"/>
<rect x="1524.75" y="508.0" width="1.50" height="1.4" fill="#f0616d"/>
<rect x="1526.25" y="508.0" width="0.75" height="1.4" fill="#4fb3dd"/>
<rect x="1527.00" y="508.0" width="3.00" height="1.4" fill="#d3d8e0"/>
<rect x="1530.75" y="508.0" width="3.00" height="1.4" fill="#d3d8e0"/>
<rect x="1534.50" y="508.0" width="2.25" height="1.4" fill="#d3d8e0"/>
<rect x="1537.50" y="508.0" width="1.50" height="1.4" fill="#d3d8e0"/>
<rect x="1539.75" y="508.0" width="4.50" height="1.4" fill="#d3d8e0"/>
<rect x="1545.00" y="508.0" width="3.75" height="1.4" fill="#d3d8e0"/>
<rect x="1549.50" y="508.0" width="1.50" height="1.4" fill="#d3d8e0"/>
<rect x="1551.75" y="508.0" width="6.00" height="1.4" fill="#d3d8e0"/>
<rect x="1558.50" y="508.0" width="1.50" height="1.4" fill="#d3d8e0"/>
<rect x="1560.75" y="508.0" width="2.25" height="1.4" fill="#d3d8e0"/>
<rect x="1563.75" y="508.0" width="2.25" height="1.4" fill="#d3d8e0"/>
<rect x="1566.75" y="508.0" width="6.75" height="1.4" fill="#d3d8e0"/>
<rect x="1574.25" y="508.0" width="1.50" height="1.4" fill="#d3d8e0"/>
<rect x="1576.50" y="508.0" width="4.50" height="1.4" fill="#d3d8e0"/>
<rect x="1581.75" y="508.0" width="4.50" height="1.4" fill="#d3d8e0"/>
<rect x="1587.00" y="508.0" width="6.00" height="1.4" fill="#d3d8e0"/>
<rect x="1524.00" y="510.0" width="6.75" height="1.4" fill="#d3d8e0"/>
<rect x="1524.00" y="512.0" width="5.25" height="1.4" fill="#d3d8e0"/>
<rect x="1530.00" y="512.0" width="3.00" height="1.4" fill="#d3d8e0"/>
<rect x="1533.75" y="512.0" width="2.25" height="1.4" fill="#d3d8e0"/>
<rect x="1536.75" y="512.0" width="5.25" height="1.4" fill="#d3d8e0"/>
<rect x="1542.75" y="512.0" width="0.75" height="1.4" fill="#d3d8e0"/>
<rect x="1544.25" y="512.0" width="3.00" height="1.4" fill="#d3d8e0"/>
<rect x="1548.00" y="512.0" width="5.25" height="1.4" fill="#d3d8e0"/>
<rect x="1554.00" y="512.0" width="1.50" height="1.4" fill="#d3d8e0"/>
<rect x="1556.25" y="512.0" width="3.00" height="1.4" fill="#d3d8e0"/>
<rect x="1560.00" y="512.0" width="6.00" height="1.4" fill="#d3d8e0"/>
<rect x="1566.75" y="512.0" width="3.75" height="1.4" fill="#d3d8e0"/>
<rect x="1571.25" y="512.0" width="4.50" height="1.4" fill="#d3d8e0"/>
<rect x="1576.50" y="512.0" width="3.00" height="1.4" fill="#d3d8e0"/>
<rect x="1580.25" y="512.0" width="5.25" height="1.4" fill="#d3d8e0"/>
<rect x="1586.25" y="512.0" width="8.25" height="1.4" fill="#d3d8e0"/>
<rect x="1595.25" y="512.0" width="1.50" height="1.4" fill="#d3d8e0"/>
<rect x="1524.00" y="514.0" width="1.50" height="1.4" fill="#d3d8e0"/>
<rect x="1526.25" y="514.0" width="6.75" height="1.4" fill="#d3d8e0"/>
<rect x="1533.75" y="514.0" width="2.25" height="1.4" fill="#d3d8e0"/>
<rect x="1536.75" y="514.0" width="3.75" height="1.4" fill="#d3d8e0"/>
<rect x="1541.25" y="514.0" width="6.00" height="1.4" fill="#d3d8e0"/>
<rect x="1548.00" y="514.0" width="4.50" height="1.4" fill="#d3d8e0"/>
<rect x="1553.25" y="514.0" width="3.00" height="1.4" fill="#d3d8e0"/>
<rect x="1557.00" y="514.0" width="5.25" height="1.4" fill="#d3d8e0"/>
<rect x="1563.00" y="514.0" width="3.00" height="1.4" fill="#d3d8e0"/>
<rect x="1566.75" y="514.0" width="3.75" height="1.4" fill="#d3d8e0"/>
<rect x="1571.25" y="514.0" width="3.00" height="1.4" fill="#d3d8e0"/>
<rect x="1575.00" y="514.0" width="4.50" height="1.4" fill="#d3d8e0"/>
<rect x="1580.25" y="514.0" width="3.00" height="1.4" fill="#d3d8e0"/>
<rect x="1584.00" y="514.0" width="3.00" height="1.4" fill="#d3d8e0"/>
<rect x="1587.75" y="514.0" width="1.50" height="1.4" fill="#d3d8e0"/>
<rect x="1590.00" y="514.0" width="4.50" height="1.4" fill="#d3d8e0"/>
<rect x="1595.25" y="514.0" width="3.75" height="1.4" fill="#d3d8e0"/>
<rect x="1524.00" y="516.0" width="6.75" height="1.4" fill="#d3d8e0"/>
<rect x="1531.50" y="516.0" width="4.50" height="1.4" fill="#d3d8e0"/>
<rect x="1536.75" y="516.0" width="0.75" height="1.4" fill="#d3d8e0"/>
<rect x="1538.25" y="516.0" width="4.50" height="1.4" fill="#d3d8e0"/>
<rect x="1543.50" y="516.0" width="4.50" height="1.4" fill="#d3d8e0"/>
<rect x="1548.75" y="516.0" width="3.00" height="1.4" fill="#d3d8e0"/>
<rect x="1552.50" y="516.0" width="4.50" height="1.4" fill="#d3d8e0"/>
<rect x="1557.75" y="516.0" width="3.75" height="1.4" fill="#d3d8e0"/>
<rect x="1562.25" y="516.0" width="4.50" height="1.4" fill="#d3d8e0"/>
<rect x="1567.50" y="516.0" width="6.75" height="1.4" fill="#d3d8e0"/>
<rect x="1575.00" y="516.0" width="1.50" height="1.4" fill="#d3d8e0"/>
<rect x="1577.25" y="516.0" width="1.50" height="1.4" fill="#d3d8e0"/>
<rect x="1579.50" y="516.0" width="4.50" height="1.4" fill="#d3d8e0"/>
<rect x="1584.75" y="516.0" width="6.75" height="1.4" fill="#d3d8e0"/>
<rect x="1592.25" y="516.0" width="4.50" height="1.4" fill="#d3d8e0"/>
<rect x="1524.00" y="518.0" width="3.00" height="1.4" fill="#d3d8e0"/>
<rect x="1527.75" y="518.0" width="4.50" height="1.4" fill="#d3d8e0"/>
<rect x="1533.00" y="518.0" width="3.75" height="1.4" fill="#d3d8e0"/>
<rect x="1537.50" y="518.0" width="6.00" height="1.4" fill="#d3d8e0"/>
<rect x="1544.25" y="518.0" width="6.00" height="1.4" fill="#d3d8e0"/>
<rect x="1551.00" y="518.0" width="2.25" height="1.4" fill="#d3d8e0"/>
<rect x="1554.00" y="518.0" width="1.50" height="1.4" fill="#d3d8e0"/>
<rect x="1556.25" y="518.0" width="1.50" height="1.4" fill="#d3d8e0"/>
<rect x="1558.50" y="518.0" width="1.50" height="1.4" fill="#d3d8e0"/>
<rect x="1560.75" y="518.0" width="4.50" height="1.4" fill="#d3d8e0"/>
<rect x="1566.00" y="518.0" width="2.25" height="1.4" fill="#d3d8e0"/>
<rect x="1569.00" y="518.0" width="3.75" height="1.4" fill="#d3d8e0"/>
<rect x="1573.50" y="518.0" width="2.25" height="1.4" fill="#d3d8e0"/>
<rect x="1576.50" y="518.0" width="4.50" height="1.4" fill="#d3d8e0"/>
<rect x="1581.75" y="518.0" width="5.25" height="1.4" fill="#d3d8e0"/>
<rect x="1587.00" y="518.0" width="1.50" height="1.4" fill="#4fb3dd"/>
<rect x="1588.50" y="518.0" width="1.50" height="1.4" fill="#f0616d"/>
<rect x="1590.00" y="518.0" width="0.75" height="1.4" fill="#4fb3dd"/>
<rect x="1524.00" y="520.0" width="0.75" height="1.4" fill="#4fb3dd"/>
<rect x="1524.75" y="520.0" width="1.50" height="1.4" fill="#f0616d"/>
<rect x="1527.00" y="520.0" width="1.50" height="1.4" fill="#4fb3dd"/>
<rect x="1524.00" y="522.0" width="0.75" height="1.4" fill="#4fb3dd"/>
<rect x="1524.75" y="522.0" width="1.50" height="1.4" fill="#f0616d"/>
<rect x="1526.25" y="522.0" width="0.75" height="1.4" fill="#4fb3dd"/>
<rect x="1527.00" y="522.0" width="5.25" height="1.4" fill="#d3d8e0"/>
<rect x="1533.00" y="522.0" width="1.50" height="1.4" fill="#d3d8e0"/>
<rect x="1535.25" y="522.0" width="1.50" height="1.4" fill="#d3d8e0"/>
<rect x="1537.50" y="522.0" width="6.00" height="1.4" fill="#d3d8e0"/>
<rect x="1544.25" y="522.0" width="3.75" height="1.4" fill="#d3d8e0"/>
<rect x="1548.75" y="522.0" width="1.50" height="1.4" fill="#d3d8e0"/>
<rect x="1551.00" y="522.0" width="4.50" height="1.4" fill="#d3d8e0"/>
<rect x="1556.25" y="522.0" width="8.25" height="1.4" fill="#d3d8e0"/>
<rect x="1565.25" y="522.0" width="3.00" height="1.4" fill="#d3d8e0"/>
<rect x="1569.00" y="522.0" width="4.50" height="1.4" fill="#d3d8e0"/>
<rect x="1574.25" y="522.0" width="6.00" height="1.4" fill="#d3d8e0"/>
<rect x="1581.00" y="522.0" width="6.00" height="1.4" fill="#d3d8e0"/>
<rect x="1587.75" y="522.0" width="2.25" height="1.4" fill="#d3d8e0"/>
<rect x="1590.75" y="522.0" width="1.50" height="1.4" fill="#d3d8e0"/>
<rect x="1593.00" y="522.0" width="2.25" height="1.4" fill="#d3d8e0"/>
<rect x="1524.00" y="524.0" width="3.75" height="1.4" fill="#d3d8e0"/>
<rect x="1524.00" y="526.0" width="1.50" height="1.4" fill="#d3d8e0"/>
<rect x="1526.25" y="526.0" width="3.00" height="1.4" fill="#d3d8e0"/>
<rect x="1530.00" y="526.0" width="4.50" height="1.4" fill="#d3d8e0"/>
<rect x="1535.25" y="526.0" width="0.75" height="1.4" fill="#d3d8e0"/>
<rect x="1536.75" y="526.0" width="4.50" height="1.4" fill="#d3d8e0"/>
<rect x="1542.00" y="526.0" width="3.75" height="1.4" fill="#d3d8e0"/>
<rect x="1546.50" y="526.0" width="3.00" height="1.4" fill="#d3d8e0"/>
<rect x="1550.25" y="526.0" width="4.50" height="1.4" fill="#d3d8e0"/>
<rect x="1555.50" y="526.0" width="3.00" height="1.4" fill="#d3d8e0"/>
<rect x="1559.25" y="526.0" width="6.00" height="1.4" fill="#d3d8e0"/>
<rect x="1566.00" y="526.0" width="6.00" height="1.4" fill="#d3d8e0"/>
<rect x="1572.75" y="526.0" width="3.00" height="1.4" fill="#d3d8e0"/>
<rect x="1576.50" y="526.0" width="2.25" height="1.4" fill="#d3d8e0"/>
<rect x="1579.50" y="526.0" width="3.75" height="1.4" fill="#d3d8e0"/>
<rect x="1584.00" y="526.0" width="1.50" height="1.4" fill="#d3d8e0"/>
<rect x="1586.25" y="526.0" width="3.75" height="1.4" fill="#d3d8e0"/>
<rect x="1590.75" y="526.0" width="0.75" height="1.4" fill="#d3d8e0"/>
<rect x="1592.25" y="526.0" width="2.25" height="1.4" fill="#d3d8e0"/>
<rect x="1524.00" y="528.0" width="3.75" height="1.4" fill="#d3d8e0"/>
<rect x="1528.50" y="528.0" width="1.50" height="1.4" fill="#d3d8e0"/>
<rect x="1530.75" y="528.0" width="3.75" height="1.4" fill="#d3d8e0"/>
<rect x="1535.25" y="528.0" width="3.00" height="1.4" fill="#d3d8e0"/>
<rect x="1539.00" y="528.0" width="3.00" height="1.4" fill="#d3d8e0"/>
<rect x="1542.75" y="528.0" width="4.50" height="1.4" fill="#d3d8e0"/>
<rect x="1548.00" y="528.0" width="4.50" height="1.4" fill="#d3d8e0"/>
<rect x="1553.25" y="528.0" width="3.00" height="1.4" fill="#d3d8e0"/>
<rect x="1557.00" y="528.0" width="2.25" height="1.4" fill="#d3d8e0"/>
<rect x="1560.00" y="528.0" width="3.75" height="1.4" fill="#d3d8e0"/>
<rect x="1564.50" y="528.0" width="3.75" height="1.4" fill="#d3d8e0"/>
<rect x="1569.00" y="528.0" width="3.75" height="1.4" fill="#d3d8e0"/>
<rect x="1573.50" y="528.0" width="5.25" height="1.4" fill="#d3d8e0"/>
<rect x="1579.50" y="528.0" width="4.50" height="1.4" fill="#d3d8e0"/>
<rect x="1584.75" y="528.0" width="0.75" height="1.4" fill="#d3d8e0"/>
<rect x="1586.25" y="528.0" width="8.25" height="1.4" fill="#d3d8e0"/>
<rect x="1595.25" y="528.0" width="3.00" height="1.4" fill="#d3d8e0"/>
<rect x="1524.00" y="530.0" width="5.25" height="1.4" fill="#d3d8e0"/>
<rect x="1530.00" y="530.0" width="3.00" height="1.4" fill="#d3d8e0"/>
<rect x="1533.75" y="530.0" width="6.00" height="1.4" fill="#d3d8e0"/>
<rect x="1540.50" y="530.0" width="3.00" height="1.4" fill="#d3d8e0"/>
<rect x="1544.25" y="530.0" width="4.50" height="1.4" fill="#d3d8e0"/>
<rect x="1549.50" y="530.0" width="4.50" height="1.4" fill="#d3d8e0"/>
<rect x="1554.75" y="530.0" width="3.00" height="1.4" fill="#d3d8e0"/>
<rect x="1558.50" y="530.0" width="6.00" height="1.4" fill="#d3d8e0"/>
<rect x="1565.25" y="530.0" width="6.75" height="1.4" fill="#d3d8e0"/>
<rect x="1572.75" y="530.0" width="6.00" height="1.4" fill="#d3d8e0"/>
<rect x="1579.50" y="530.0" width="6.75" height="1.4" fill="#d3d8e0"/>
<rect x="1587.00" y="530.0" width="8.25" height="1.4" fill="#d3d8e0"/>
<rect x="1595.25" y="530.0" width="1.50" height="1.4" fill="#4fb3dd"/>
<rect x="1596.75" y="530.0" width="1.50" height="1.4" fill="#f0616d"/>
<rect x="1598.25" y="530.0" width="0.75" height="1.4" fill="#4fb3dd"/>
<rect x="1524.00" y="532.0" width="0.75" height="1.4" fill="#4fb3dd"/>
<rect x="1524.75" y="532.0" width="1.50" height="1.4" fill="#f0616d"/>
<rect x="1527.00" y="532.0" width="1.50" height="1.4" fill="#4fb3dd"/>
<rect x="1524.00" y="534.0" width="0.75" height="1.4" fill="#4fb3dd"/>
<rect x="1524.75" y="534.0" width="1.50" height="1.4" fill="#f0616d"/>
<rect x="1527.00" y="534.0" width="1.50" height="1.4" fill="#4fb3dd"/>
<rect x="1521.00" y="536.0" width="1.50" height="1.4" fill="#4fb3dd"/>
<rect x="1522.50" y="536.0" width="1.50" height="1.4" fill="#f0616d"/>
<rect x="1524.00" y="536.0" width="0.75" height="1.4" fill="#4fb3dd"/>
<rect x="1518.00" y="538.0" width="1.50" height="1.4" fill="#4fb3dd"/>
<rect x="1519.50" y="538.0" width="0.75" height="1.4" fill="#f0616d"/>
<rect x="1520.25" y="538.0" width="0.75" height="1.4" fill="#4fb3dd"/>
<rect x="1518.00" y="540.0" width="0.75" height="1.4" fill="#4fb3dd"/>
<rect x="1518.75" y="540.0" width="1.50" height="1.4" fill="#f0616d"/>
<rect x="1521.00" y="540.0" width="1.50" height="1.4" fill="#4fb3dd"/>
<rect x="1518.00" y="542.0" width="0.75" height="1.4" fill="#4fb3dd"/>
<rect x="1518.75" y="542.0" width="1.50" height="1.4" fill="#f0616d"/>
<rect x="1520.25" y="542.0" width="0.75" height="1.4" fill="#4fb3dd"/>
<rect x="1521.00" y="542.0" width="3.00" height="1.4" fill="#d3d8e0"/>
<rect x="1524.75" y="542.0" width="1.50" height="1.4" fill="#d3d8e0"/>
<rect x="1527.00" y="542.0" width="6.00" height="1.4" fill="#d3d8e0"/>
<rect x="1533.75" y="542.0" width="5.25" height="1.4" fill="#d3d8e0"/>
<rect x="1539.75" y="542.0" width="0.75" height="1.4" fill="#d3d8e0"/>
<rect x="1540.50" y="542.0" width="1.50" height="1.4" fill="#4fb3dd"/>
<rect x="1542.00" y="542.0" width="1.50" height="1.4" fill="#f0616d"/>
<rect x="1543.50" y="542.0" width="0.75" height="1.4" fill="#4fb3dd"/>
<rect x="1518.00" y="544.0" width="0.75" height="1.4" fill="#4fb3dd"/>
<rect x="1518.75" y="544.0" width="0.75" height="1.4" fill="#f0616d"/>
<rect x="1519.50" y="544.0" width="0.75" height="1.4" fill="#4fb3dd"/>
<rect x="1521.00" y="546.0" width="0.75" height="1.4" fill="#4fb3dd"/>
<rect x="1521.75" y="546.0" width="1.50" height="1.4" fill="#f0616d"/>
<rect x="1523.25" y="546.0" width="0.75" height="1.4" fill="#4fb3dd"/>
<rect x="1524.00" y="548.0" width="0.75" height="1.4" fill="#4fb3dd"/>
<rect x="1524.75" y="548.0" width="1.50" height="1.4" fill="#f0616d"/>
<rect x="1526.25" y="548.0" width="0.75" height="1.4" fill="#4fb3dd"/>
<rect x="1527.00" y="548.0" width="6.00" height="1.4" fill="#d3d8e0"/>
<rect x="1533.75" y="548.0" width="4.50" height="1.4" fill="#d3d8e0"/>
<rect x="1539.00" y="548.0" width="5.25" height="1.4" fill="#d3d8e0"/>
<rect x="1545.00" y="548.0" width="8.25" height="1.4" fill="#d3d8e0"/>
<rect x="1554.00" y="548.0" width="3.00" height="1.4" fill="#d3d8e0"/>
<rect x="1557.75" y="548.0" width="3.75" height="1.4" fill="#d3d8e0"/>
<rect x="1562.25" y="548.0" width="6.00" height="1.4" fill="#d3d8e0"/>
<rect x="1569.00" y="548.0" width="5.25" height="1.4" fill="#d3d8e0"/>
<rect x="1575.00" y="548.0" width="3.00" height="1.4" fill="#d3d8e0"/>
<rect x="1578.75" y="548.0" width="4.50" height="1.4" fill="#d3d8e0"/>
<rect x="1584.00" y="548.0" width="1.50" height="1.4" fill="#d3d8e0"/>
<rect x="1586.25" y="548.0" width="3.75" height="1.4" fill="#d3d8e0"/>
<rect x="1590.75" y="548.0" width="4.50" height="1.4" fill="#d3d8e0"/>
<rect x="1596.00" y="548.0" width="2.25" height="1.4" fill="#d3d8e0"/>
<rect x="1524.00" y="550.0" width="0.75" height="1.4" fill="#d3d8e0"/>
<rect x="1525.50" y="550.0" width="1.50" height="1.4" fill="#d3d8e0"/>
<rect x="1527.75" y="550.0" width="3.75" height="1.4" fill="#d3d8e0"/>
<rect x="1532.25" y="550.0" width="8.25" height="1.4" fill="#d3d8e0"/>
<rect x="1541.25" y="550.0" width="6.00" height="1.4" fill="#d3d8e0"/>
<rect x="1548.00" y="550.0" width="5.25" height="1.4" fill="#d3d8e0"/>
<rect x="1554.00" y="550.0" width="3.00" height="1.4" fill="#d3d8e0"/>
<rect x="1557.00" y="550.0" width="1.50" height="1.4" fill="#4fb3dd"/>
<rect x="1558.50" y="550.0" width="1.50" height="1.4" fill="#f0616d"/>
<rect x="1560.00" y="550.0" width="0.75" height="1.4" fill="#4fb3dd"/>
<rect x="1524.00" y="552.0" width="0.75" height="1.4" fill="#4fb3dd"/>
<rect x="1524.75" y="552.0" width="1.50" height="1.4" fill="#f0616d"/>
<rect x="1527.00" y="552.0" width="1.50" height="1.4" fill="#4fb3dd"/>
<rect x="1524.00" y="554.0" width="0.75" height="1.4" fill="#4fb3dd"/>
<rect x="1524.75" y="554.0" width="1.50" height="1.4" fill="#f0616d"/>
<rect x="1526.25" y="554.0" width="0.75" height="1.4" fill="#4fb3dd"/>
<rect x="1527.00" y="554.0" width="6.75" height="1.4" fill="#d3d8e0"/>
<rect x="1534.50" y="554.0" width="8.25" height="1.4" fill="#d3d8e0"/>
<rect x="1543.50" y="554.0" width="5.25" height="1.4" fill="#d3d8e0"/>
<rect x="1549.50" y="554.0" width="4.50" height="1.4" fill="#d3d8e0"/>
<rect x="1554.75" y="554.0" width="4.50" height="1.4" fill="#d3d8e0"/>
<rect x="1560.00" y="554.0" width="6.00" height="1.4" fill="#d3d8e0"/>
<rect x="1566.75" y="554.0" width="1.50" height="1.4" fill="#d3d8e0"/>
<rect x="1569.00" y="554.0" width="4.50" height="1.4" fill="#d3d8e0"/>
<rect x="1574.25" y="554.0" width="4.50" height="1.4" fill="#d3d8e0"/>
<rect x="1579.50" y="554.0" width="4.50" height="1.4" fill="#d3d8e0"/>
<rect x="1584.75" y="554.0" width="2.25" height="1.4" fill="#d3d8e0"/>
<rect x="1587.75" y="554.0" width="4.50" height="1.4" fill="#d3d8e0"/>
<rect x="1524.00" y="556.0" width="4.50" height="1.4" fill="#d3d8e0"/>
<rect x="1529.25" y="556.0" width="6.00" height="1.4" fill="#d3d8e0"/>
<rect x="1536.00" y="556.0" width="1.50" height="1.4" fill="#d3d8e0"/>
<rect x="1538.25" y="556.0" width="1.50" height="1.4" fill="#d3d8e0"/>
<rect x="1540.50" y="556.0" width="4.50" height="1.4" fill="#d3d8e0"/>
<rect x="1545.75" y="556.0" width="6.75" height="1.4" fill="#d3d8e0"/>
<rect x="1553.25" y="556.0" width="2.25" height="1.4" fill="#d3d8e0"/>
<rect x="1556.25" y="556.0" width="1.50" height="1.4" fill="#d3d8e0"/>
<rect x="1558.50" y="556.0" width="1.50" height="1.4" fill="#d3d8e0"/>
<rect x="1560.75" y="556.0" width="1.50" height="1.4" fill="#d3d8e0"/>
<rect x="1563.00" y="556.0" width="3.75" height="1.4" fill="#d3d8e0"/>
<rect x="1567.50" y="556.0" width="1.50" height="1.4" fill="#d3d8e0"/>
<rect x="1569.75" y="556.0" width="1.50" height="1.4" fill="#d3d8e0"/>
<rect x="1572.00" y="556.0" width="6.00" height="1.4" fill="#d3d8e0"/>
<rect x="1578.75" y="556.0" width="3.00" height="1.4" fill="#d3d8e0"/>
<rect x="1582.50" y="556.0" width="1.50" height="1.4" fill="#d3d8e0"/>
<rect x="1584.75" y="556.0" width="1.50" height="1.4" fill="#d3d8e0"/>
<rect x="1587.00" y="556.0" width="1.50" height="1.4" fill="#d3d8e0"/>
<rect x="1589.25" y="556.0" width="2.25" height="1.4" fill="#d3d8e0"/>
<rect x="1592.25" y="556.0" width="6.00" height="1.4" fill="#d3d8e0"/>
<rect x="1524.00" y="558.0" width="8.25" height="1.4" fill="#d3d8e0"/>
<rect x="1533.00" y="558.0" width="3.75" height="1.4" fill="#d3d8e0"/>
<rect x="1537.50" y="558.0" width="3.75" height="1.4" fill="#d3d8e0"/>
<rect x="1542.00" y="558.0" width="3.00" height="1.4" fill="#d3d8e0"/>
<rect x="1545.75" y="558.0" width="4.50" height="1.4" fill="#d3d8e0"/>
<rect x="1551.00" y="558.0" width="4.50" height="1.4" fill="#d3d8e0"/>
<rect x="1556.25" y="558.0" width="3.00" height="1.4" fill="#d3d8e0"/>
<rect x="1560.00" y="558.0" width="0.75" height="1.4" fill="#d3d8e0"/>
<rect x="1561.50" y="558.0" width="2.25" height="1.4" fill="#d3d8e0"/>
<rect x="1564.50" y="558.0" width="1.50" height="1.4" fill="#d3d8e0"/>
<rect x="1566.75" y="558.0" width="2.25" height="1.4" fill="#d3d8e0"/>
<rect x="1569.75" y="558.0" width="3.00" height="1.4" fill="#d3d8e0"/>
<rect x="1573.50" y="558.0" width="3.75" height="1.4" fill="#d3d8e0"/>
<rect x="1578.00" y="558.0" width="1.50" height="1.4" fill="#d3d8e0"/>
<rect x="1580.25" y="558.0" width="1.50" height="1.4" fill="#d3d8e0"/>
<rect x="1582.50" y="558.0" width="1.50" height="1.4" fill="#d3d8e0"/>
<rect x="1584.75" y="558.0" width="6.75" height="1.4" fill="#d3d8e0"/>
<rect x="1592.25" y="558.0" width="3.00" height="1.4" fill="#d3d8e0"/>
<rect x="1596.00" y="558.0" width="3.00" height="1.4" fill="#d3d8e0"/>
<rect x="1524.00" y="560.0" width="3.00" height="1.4" fill="#d3d8e0"/>
<rect x="1527.75" y="560.0" width="3.00" height="1.4" fill="#d3d8e0"/>
<rect x="1531.50" y="560.0" width="3.75" height="1.4" fill="#d3d8e0"/>
<rect x="1536.00" y="560.0" width="5.25" height="1.4" fill="#d3d8e0"/>
<rect x="1542.00" y="560.0" width="2.25" height="1.4" fill="#d3d8e0"/>
<rect x="1545.00" y="560.0" width="3.75" height="1.4" fill="#d3d8e0"/>
<rect x="1549.50" y="560.0" width="1.50" height="1.4" fill="#d3d8e0"/>
<rect x="1551.75" y="560.0" width="3.00" height="1.4" fill="#d3d8e0"/>
<rect x="1555.50" y="560.0" width="3.00" height="1.4" fill="#d3d8e0"/>
<rect x="1559.25" y="560.0" width="2.25" height="1.4" fill="#d3d8e0"/>
<rect x="1562.25" y="560.0" width="1.50" height="1.4" fill="#d3d8e0"/>
<rect x="1564.50" y="560.0" width="6.00" height="1.4" fill="#d3d8e0"/>
<rect x="1571.25" y="560.0" width="4.50" height="1.4" fill="#d3d8e0"/>
<rect x="1576.50" y="560.0" width="4.50" height="1.4" fill="#d3d8e0"/>
<rect x="1581.75" y="560.0" width="3.75" height="1.4" fill="#d3d8e0"/>
<rect x="1586.25" y="560.0" width="0.75" height="1.4" fill="#d3d8e0"/>
<rect x="1587.75" y="560.0" width="1.50" height="1.4" fill="#d3d8e0"/>
<rect x="1590.00" y="560.0" width="4.50" height="1.4" fill="#d3d8e0"/>
<rect x="1524.00" y="562.0" width="6.00" height="1.4" fill="#d3d8e0"/>
<rect x="1530.75" y="562.0" width="3.75" height="1.4" fill="#d3d8e0"/>
<rect x="1535.25" y="562.0" width="6.75" height="1.4" fill="#d3d8e0"/>
<rect x="1542.75" y="562.0" width="8.25" height="1.4" fill="#d3d8e0"/>
<rect x="1551.75" y="562.0" width="4.50" height="1.4" fill="#d3d8e0"/>
<rect x="1556.25" y="562.0" width="1.50" height="1.4" fill="#4fb3dd"/>
<rect x="1557.75" y="562.0" width="1.50" height="1.4" fill="#f0616d"/>
<rect x="1559.25" y="562.0" width="0.75" height="1.4" fill="#4fb3dd"/>
<rect x="1524.00" y="564.0" width="0.75" height="1.4" fill="#4fb3dd"/>
<rect x="1524.75" y="564.0" width="1.50" height="1.4" fill="#f0616d"/>
<rect x="1527.00" y="564.0" width="1.50" height="1.4" fill="#4fb3dd"/>
<rect x="1524.00" y="566.0" width="0.75" height="1.4" fill="#4fb3dd"/>
<rect x="1524.75" y="566.0" width="1.50" height="1.4" fill="#f0616d"/>
<rect x="1527.00" y="566.0" width="1.50" height="1.4" fill="#4fb3dd"/>
<rect x="1521.00" y="568.0" width="1.50" height="1.4" fill="#4fb3dd"/>
<rect x="1522.50" y="568.0" width="1.50" height="1.4" fill="#f0616d"/>
<rect x="1524.00" y="568.0" width="0.75" height="1.4" fill="#4fb3dd"/>
<rect x="1518.00" y="570.0" width="1.50" height="1.4" fill="#4fb3dd"/>
<rect x="1519.50" y="570.0" width="0.75" height="1.4" fill="#f0616d"/>
<rect x="1520.25" y="570.0" width="0.75" height="1.4" fill="#4fb3dd"/>
<rect x="1518.00" y="572.0" width="0.75" height="1.4" fill="#4fb3dd"/>
<rect x="1518.75" y="572.0" width="1.50" height="1.4" fill="#f0616d"/>
<rect x="1521.00" y="572.0" width="1.50" height="1.4" fill="#4fb3dd"/>
<rect x="1518.00" y="574.0" width="0.75" height="1.4" fill="#4fb3dd"/>
<rect x="1518.75" y="574.0" width="1.50" height="1.4" fill="#f0616d"/>
<rect x="1520.25" y="574.0" width="0.75" height="1.4" fill="#4fb3dd"/>
<rect x="1521.00" y="574.0" width="3.00" height="1.4" fill="#d3d8e0"/>
<rect x="1524.75" y="574.0" width="1.50" height="1.4" fill="#d3d8e0"/>
<rect x="1527.00" y="574.0" width="6.00" height="1.4" fill="#d3d8e0"/>
<rect x="1533.75" y="574.0" width="5.25" height="1.4" fill="#d3d8e0"/>
<rect x="1539.75" y="574.0" width="0.75" height="1.4" fill="#d3d8e0"/>
<rect x="1540.50" y="574.0" width="1.50" height="1.4" fill="#4fb3dd"/>
<rect x="1542.00" y="574.0" width="1.50" height="1.4" fill="#f0616d"/>
<rect x="1543.50" y="574.0" width="0.75" height="1.4" fill="#4fb3dd"/>
<rect x="1518.00" y="576.0" width="0.75" height="1.4" fill="#4fb3dd"/>
<rect x="1518.75" y="576.0" width="0.75" height="1.4" fill="#f0616d"/>
<rect x="1519.50" y="576.0" width="0.75" height="1.4" fill="#4fb3dd"/>
<rect x="1521.00" y="578.0" width="0.75" height="1.4" fill="#4fb3dd"/>
<rect x="1521.75" y="578.0" width="1.50" height="1.4" fill="#f0616d"/>
<rect x="1523.25" y="578.0" width="0.75" height="1.4" fill="#4fb3dd"/>
<rect x="1524.00" y="580.0" width="0.75" height="1.4" fill="#4fb3dd"/>
<rect x="1524.75" y="580.0" width="1.50" height="1.4" fill="#f0616d"/>
<rect x="1526.25" y="580.0" width="0.75" height="1.4" fill="#4fb3dd"/>
<rect x="1527.00" y="580.0" width="4.50" height="1.4" fill="#d3d8e0"/>
<rect x="1532.25" y="580.0" width="3.75" height="1.4" fill="#d3d8e0"/>
<rect x="1536.75" y="580.0" width="3.00" height="1.4" fill="#d3d8e0"/>
<rect x="1540.50" y="580.0" width="3.75" height="1.4" fill="#d3d8e0"/>
<rect x="1545.00" y="580.0" width="3.75" height="1.4" fill="#d3d8e0"/>
<rect x="1549.50" y="580.0" width="6.75" height="1.4" fill="#d3d8e0"/>
<rect x="1557.00" y="580.0" width="3.75" height="1.4" fill="#d3d8e0"/>
<rect x="1561.50" y="580.0" width="3.75" height="1.4" fill="#d3d8e0"/>
<rect x="1566.00" y="580.0" width="3.00" height="1.4" fill="#d3d8e0"/>
<rect x="1569.75" y="580.0" width="1.50" height="1.4" fill="#d3d8e0"/>
<rect x="1572.00" y="580.0" width="3.00" height="1.4" fill="#d3d8e0"/>
<rect x="1575.75" y="580.0" width="8.25" height="1.4" fill="#d3d8e0"/>
<rect x="1584.75" y="580.0" width="2.25" height="1.4" fill="#d3d8e0"/>
<rect x="1587.75" y="580.0" width="6.00" height="1.4" fill="#d3d8e0"/>
<rect x="1594.50" y="580.0" width="2.25" height="1.4" fill="#d3d8e0"/>
<rect x="1597.50" y="580.0" width="1.50" height="1.4" fill="#d3d8e0"/>
<rect x="1524.00" y="582.0" width="5.25" height="1.4" fill="#d3d8e0"/>
<rect x="1530.00" y="582.0" width="6.00" height="1.4" fill="#d3d8e0"/>
<rect x="1536.75" y="582.0" width="6.00" height="1.4" fill="#d3d8e0"/>
<rect x="1543.50" y="582.0" width="1.50" height="1.4" fill="#d3d8e0"/>
<rect x="1545.75" y="582.0" width="6.00" height="1.4" fill="#d3d8e0"/>
<rect x="1552.50" y="582.0" width="8.25" height="1.4" fill="#d3d8e0"/>
<rect x="1560.75" y="582.0" width="1.50" height="1.4" fill="#4fb3dd"/>
<rect x="1562.25" y="582.0" width="1.50" height="1.4" fill="#f0616d"/>
<rect x="1563.75" y="582.0" width="0.75" height="1.4" fill="#4fb3dd"/>
<rect x="1524.00" y="584.0" width="0.75" height="1.4" fill="#4fb3dd"/>
<rect x="1524.75" y="584.0" width="1.50" height="1.4" fill="#f0616d"/>
<rect x="1527.00" y="584.0" width="1.50" height="1.4" fill="#4fb3dd"/>
<rect x="1524.00" y="586.0" width="0.75" height="1.4" fill="#4fb3dd"/>
<rect x="1524.75" y="586.0" width="1.50" height="1.4" fill="#f0616d"/>
<rect x="1526.25" y="586.0" width="0.75" height="1.4" fill="#4fb3dd"/>
<rect x="1527.00" y="586.0" width="1.50" height="1.4" fill="#d3d8e0"/>
<rect x="1529.25" y="586.0" width="1.50" height="1.4" fill="#d3d8e0"/>
<rect x="1531.50" y="586.0" width="3.00" height="1.4" fill="#d3d8e0"/>
<rect x="1535.25" y="586.0" width="3.00" height="1.4" fill="#d3d8e0"/>
<rect x="1539.00" y="586.0" width="5.25" height="1.4" fill="#d3d8e0"/>
<rect x="1545.00" y="586.0" width="6.00" height="1.4" fill="#d3d8e0"/>
<rect x="1551.75" y="586.0" width="1.50" height="1.4" fill="#d3d8e0"/>
<rect x="1554.00" y="586.0" width="6.00" height="1.4" fill="#d3d8e0"/>
<rect x="1560.75" y="586.0" width="1.50" height="1.4" fill="#d3d8e0"/>
<rect x="1563.00" y="586.0" width="1.50" height="1.4" fill="#d3d8e0"/>
<rect x="1565.25" y="586.0" width="5.25" height="1.4" fill="#d3d8e0"/>
<rect x="1571.25" y="586.0" width="2.25" height="1.4" fill="#d3d8e0"/>
<rect x="1574.25" y="586.0" width="3.00" height="1.4" fill="#d3d8e0"/>
<rect x="1578.00" y="586.0" width="5.25" height="1.4" fill="#d3d8e0"/>
<rect x="1584.00" y="586.0" width="3.75" height="1.4" fill="#d3d8e0"/>
<rect x="1588.50" y="586.0" width="4.50" height="1.4" fill="#d3d8e0"/>
<rect x="1593.75" y="586.0" width="3.75" height="1.4" fill="#d3d8e0"/>
<rect x="1524.00" y="588.0" width="6.75" height="1.4" fill="#d3d8e0"/>
<rect x="1531.50" y="588.0" width="5.25" height="1.4" fill="#d3d8e0"/>
<rect x="1537.50" y="588.0" width="6.00" height="1.4" fill="#d3d8e0"/>
<rect x="1544.25" y="588.0" width="4.50" height="1.4" fill="#d3d8e0"/>
<rect x="1549.50" y="588.0" width="3.75" height="1.4" fill="#d3d8e0"/>
<rect x="1554.00" y="588.0" width="3.75" height="1.4" fill="#d3d8e0"/>
<rect x="1558.50" y="588.0" width="3.75" height="1.4" fill="#d3d8e0"/>
<rect x="1563.00" y="588.0" width="1.50" height="1.4" fill="#d3d8e0"/>
<rect x="1565.25" y="588.0" width="4.50" height="1.4" fill="#d3d8e0"/>
<rect x="1570.50" y="588.0" width="2.25" height="1.4" fill="#d3d8e0"/>
<rect x="1573.50" y="588.0" width="1.50" height="1.4" fill="#d3d8e0"/>
<rect x="1575.75" y="588.0" width="3.00" height="1.4" fill="#d3d8e0"/>
<rect x="1579.50" y="588.0" width="4.50" height="1.4" fill="#d3d8e0"/>
<rect x="1584.75" y="588.0" width="4.50" height="1.4" fill="#d3d8e0"/>
<rect x="1590.00" y="588.0" width="2.25" height="1.4" fill="#d3d8e0"/>
<rect x="1593.00" y="588.0" width="4.50" height="1.4" fill="#d3d8e0"/>
<rect x="1524.00" y="590.0" width="4.50" height="1.4" fill="#d3d8e0"/>
<rect x="1529.25" y="590.0" width="1.50" height="1.4" fill="#d3d8e0"/>
<rect x="1531.50" y="590.0" width="6.00" height="1.4" fill="#d3d8e0"/>
<rect x="1538.25" y="590.0" width="6.75" height="1.4" fill="#d3d8e0"/>
<rect x="1545.75" y="590.0" width="6.00" height="1.4" fill="#d3d8e0"/>
<rect x="1552.50" y="590.0" width="6.00" height="1.4" fill="#d3d8e0"/>
<rect x="1559.25" y="590.0" width="4.50" height="1.4" fill="#d3d8e0"/>
<rect x="1564.50" y="590.0" width="1.50" height="1.4" fill="#d3d8e0"/>
<rect x="1566.75" y="590.0" width="4.50" height="1.4" fill="#d3d8e0"/>
<rect x="1572.00" y="590.0" width="4.50" height="1.4" fill="#d3d8e0"/>
<rect x="1577.25" y="590.0" width="4.50" height="1.4" fill="#d3d8e0"/>
<rect x="1582.50" y="590.0" width="4.50" height="1.4" fill="#d3d8e0"/>
<rect x="1587.75" y="590.0" width="3.75" height="1.4" fill="#d3d8e0"/>
<rect x="1592.25" y="590.0" width="3.75" height="1.4" fill="#d3d8e0"/>
<rect x="1596.75" y="590.0" width="2.25" height="1.4" fill="#d3d8e0"/>
<rect x="1524.00" y="592.0" width="4.50" height="1.4" fill="#d3d8e0"/>
<rect x="1529.25" y="592.0" width="2.25" height="1.4" fill="#d3d8e0"/>
<rect x="1532.25" y="592.0" width="6.00" height="1.4" fill="#d3d8e0"/>
<rect x="1539.00" y="592.0" width="0.75" height="1.4" fill="#d3d8e0"/>
<rect x="1540.50" y="592.0" width="2.25" height="1.4" fill="#d3d8e0"/>
<rect x="1543.50" y="592.0" width="5.25" height="1.4" fill="#d3d8e0"/>
<rect x="1549.50" y="592.0" width="2.25" height="1.4" fill="#d3d8e0"/>
<rect x="1552.50" y="592.0" width="3.00" height="1.4" fill="#d3d8e0"/>
<rect x="1556.25" y="592.0" width="1.50" height="1.4" fill="#d3d8e0"/>
<rect x="1558.50" y="592.0" width="1.50" height="1.4" fill="#d3d8e0"/>
<rect x="1560.75" y="592.0" width="3.75" height="1.4" fill="#d3d8e0"/>
<rect x="1565.25" y="592.0" width="6.00" height="1.4" fill="#d3d8e0"/>
<rect x="1571.25" y="592.0" width="1.50" height="1.4" fill="#4fb3dd"/>
<rect x="1572.75" y="592.0" width="1.50" height="1.4" fill="#f0616d"/>
<rect x="1574.25" y="592.0" width="0.75" height="1.4" fill="#4fb3dd"/>
<rect x="1524.00" y="594.0" width="0.75" height="1.4" fill="#4fb3dd"/>
<rect x="1524.75" y="594.0" width="1.50" height="1.4" fill="#f0616d"/>
<rect x="1527.00" y="594.0" width="1.50" height="1.4" fill="#4fb3dd"/>
<rect x="1524.00" y="596.0" width="1.50" height="1.4" fill="#4fb3dd"/>
<rect x="1525.50" y="596.0" width="1.50" height="1.4" fill="#f0616d"/>
<rect x="1527.00" y="596.0" width="0.75" height="1.4" fill="#4fb3dd"/>
<rect x="1521.00" y="598.0" width="1.50" height="1.4" fill="#4fb3dd"/>
<rect x="1522.50" y="598.0" width="1.50" height="1.4" fill="#f0616d"/>
<rect x="1524.00" y="598.0" width="0.75" height="1.4" fill="#4fb3dd"/>
<rect x="1518.00" y="600.0" width="1.50" height="1.4" fill="#4fb3dd"/>
<rect x="1519.50" y="600.0" width="0.75" height="1.4" fill="#f0616d"/>
<rect x="1520.25" y="600.0" width="0.75" height="1.4" fill="#4fb3dd"/>
<rect x="1518.00" y="602.0" width="0.75" height="1.4" fill="#4fb3dd"/>
<rect x="1518.75" y="602.0" width="1.50" height="1.4" fill="#f0616d"/>
<rect x="1521.00" y="602.0" width="1.50" height="1.4" fill="#4fb3dd"/>
<rect x="1518.00" y="604.0" width="0.75" height="1.4" fill="#4fb3dd"/>
<rect x="1518.75" y="604.0" width="1.50" height="1.4" fill="#f0616d"/>
<rect x="1520.25" y="604.0" width="0.75" height="1.4" fill="#4fb3dd"/>
<rect x="1521.00" y="604.0" width="3.00" height="1.4" fill="#d3d8e0"/>
<rect x="1524.75" y="604.0" width="1.50" height="1.4" fill="#d3d8e0"/>
<rect x="1527.00" y="604.0" width="6.00" height="1.4" fill="#d3d8e0"/>
<rect x="1533.75" y="604.0" width="5.25" height="1.4" fill="#d3d8e0"/>
<rect x="1539.75" y="604.0" width="0.75" height="1.4" fill="#d3d8e0"/>
<rect x="1540.50" y="604.0" width="1.50" height="1.4" fill="#4fb3dd"/>
<rect x="1542.00" y="604.0" width="1.50" height="1.4" fill="#f0616d"/>
<rect x="1543.50" y="604.0" width="0.75" height="1.4" fill="#4fb3dd"/>
<rect x="1518.00" y="606.0" width="0.75" height="1.4" fill="#4fb3dd"/>
<rect x="1518.75" y="606.0" width="0.75" height="1.4" fill="#f0616d"/>
<rect x="1519.50" y="606.0" width="0.75" height="1.4" fill="#4fb3dd"/>
<rect x="1521.00" y="608.0" width="0.75" height="1.4" fill="#4fb3dd"/>
<rect x="1521.75" y="608.0" width="1.50" height="1.4" fill="#f0616d"/>
<rect x="1523.25" y="608.0" width="0.75" height="1.4" fill="#4fb3dd"/>
<rect x="1524.00" y="610.0" width="0.75" height="1.4" fill="#4fb3dd"/>
<rect x="1524.75" y="610.0" width="1.50" height="1.4" fill="#f0616d"/>
<rect x="1526.25" y="610.0" width="0.75" height="1.4" fill="#4fb3dd"/>
<rect x="1527.00" y="610.0" width="8.25" height="1.4" fill="#d3d8e0"/>
<rect x="1536.00" y="610.0" width="1.50" height="1.4" fill="#d3d8e0"/>
<rect x="1538.25" y="610.0" width="1.50" height="1.4" fill="#d3d8e0"/>
<rect x="1540.50" y="610.0" width="4.50" height="1.4" fill="#d3d8e0"/>
<rect x="1545.75" y="610.0" width="4.50" height="1.4" fill="#d3d8e0"/>
<rect x="1551.00" y="610.0" width="4.50" height="1.4" fill="#d3d8e0"/>
<rect x="1556.25" y="610.0" width="6.00" height="1.4" fill="#d3d8e0"/>
<rect x="1563.00" y="610.0" width="3.00" height="1.4" fill="#d3d8e0"/>
<rect x="1566.75" y="610.0" width="6.75" height="1.4" fill="#d3d8e0"/>
<rect x="1573.50" y="610.0" width="1.50" height="1.4" fill="#4fb3dd"/>
<rect x="1575.00" y="610.0" width="1.50" height="1.4" fill="#f0616d"/>
<rect x="1576.50" y="610.0" width="0.75" height="1.4" fill="#4fb3dd"/>
<rect x="1524.00" y="612.0" width="0.75" height="1.4" fill="#4fb3dd"/>
<rect x="1524.75" y="612.0" width="1.50" height="1.4" fill="#f0616d"/>
<rect x="1527.00" y="612.0" width="1.50" height="1.4" fill="#4fb3dd"/>
<rect x="1524.00" y="614.0" width="0.75" height="1.4" fill="#4fb3dd"/>
<rect x="1524.75" y="614.0" width="1.50" height="1.4" fill="#f0616d"/>
<rect x="1526.25" y="614.0" width="0.75" height="1.4" fill="#4fb3dd"/>
<rect x="1527.00" y="614.0" width="3.75" height="1.4" fill="#d3d8e0"/>
<rect x="1531.50" y="614.0" width="3.00" height="1.4" fill="#d3d8e0"/>
<rect x="1535.25" y="614.0" width="1.50" height="1.4" fill="#d3d8e0"/>
<rect x="1537.50" y="614.0" width="0.75" height="1.4" fill="#d3d8e0"/>
<rect x="1539.00" y="614.0" width="4.50" height="1.4" fill="#d3d8e0"/>
<rect x="1544.25" y="614.0" width="6.00" height="1.4" fill="#d3d8e0"/>
<rect x="1551.00" y="614.0" width="4.50" height="1.4" fill="#d3d8e0"/>
<rect x="1556.25" y="614.0" width="1.50" height="1.4" fill="#d3d8e0"/>
<rect x="1558.50" y="614.0" width="1.50" height="1.4" fill="#d3d8e0"/>
<rect x="1560.75" y="614.0" width="1.50" height="1.4" fill="#d3d8e0"/>
<rect x="1563.00" y="614.0" width="2.25" height="1.4" fill="#d3d8e0"/>
<rect x="1566.00" y="614.0" width="6.00" height="1.4" fill="#d3d8e0"/>
<rect x="1572.75" y="614.0" width="3.00" height="1.4" fill="#d3d8e0"/>
<rect x="1576.50" y="614.0" width="0.75" height="1.4" fill="#d3d8e0"/>
<rect x="1578.00" y="614.0" width="3.00" height="1.4" fill="#d3d8e0"/>
<rect x="1581.75" y="614.0" width="1.50" height="1.4" fill="#d3d8e0"/>
<rect x="1584.00" y="614.0" width="6.00" height="1.4" fill="#d3d8e0"/>
<rect x="1590.75" y="614.0" width="4.50" height="1.4" fill="#d3d8e0"/>
<rect x="1524.00" y="616.0" width="1.50" height="1.4" fill="#d3d8e0"/>
<rect x="1526.25" y="616.0" width="3.00" height="1.4" fill="#d3d8e0"/>
<rect x="1530.00" y="616.0" width="1.50" height="1.4" fill="#d3d8e0"/>
<rect x="1532.25" y="616.0" width="6.00" height="1.4" fill="#d3d8e0"/>
<rect x="1539.00" y="616.0" width="2.25" height="1.4" fill="#d3d8e0"/>
<rect x="1542.00" y="616.0" width="4.50" height="1.4" fill="#d3d8e0"/>
<rect x="1547.25" y="616.0" width="4.50" height="1.4" fill="#d3d8e0"/>
<rect x="1552.50" y="616.0" width="1.50" height="1.4" fill="#d3d8e0"/>
<rect x="1554.75" y="616.0" width="2.25" height="1.4" fill="#d3d8e0"/>
<rect x="1557.75" y="616.0" width="4.50" height="1.4" fill="#d3d8e0"/>
<rect x="1563.00" y="616.0" width="1.50" height="1.4" fill="#d3d8e0"/>
<rect x="1565.25" y="616.0" width="1.50" height="1.4" fill="#d3d8e0"/>
<rect x="1567.50" y="616.0" width="6.00" height="1.4" fill="#d3d8e0"/>
<rect x="1574.25" y="616.0" width="4.50" height="1.4" fill="#d3d8e0"/>
<rect x="1579.50" y="616.0" width="6.00" height="1.4" fill="#d3d8e0"/>
<rect x="1586.25" y="616.0" width="0.75" height="1.4" fill="#d3d8e0"/>
<rect x="1587.75" y="616.0" width="5.25" height="1.4" fill="#d3d8e0"/>
<rect x="1524.00" y="618.0" width="6.00" height="1.4" fill="#d3d8e0"/>
<rect x="1530.75" y="618.0" width="8.25" height="1.4" fill="#d3d8e0"/>
<rect x="1539.75" y="618.0" width="3.00" height="1.4" fill="#d3d8e0"/>
<rect x="1543.50" y="618.0" width="3.75" height="1.4" fill="#d3d8e0"/>
<rect x="1548.00" y="618.0" width="0.75" height="1.4" fill="#d3d8e0"/>
<rect x="1549.50" y="618.0" width="1.50" height="1.4" fill="#d3d8e0"/>
<rect x="1551.75" y="618.0" width="3.00" height="1.4" fill="#d3d8e0"/>
<rect x="1555.50" y="618.0" width="3.75" height="1.4" fill="#d3d8e0"/>
<rect x="1560.00" y="618.0" width="1.50" height="1.4" fill="#d3d8e0"/>
<rect x="1562.25" y="618.0" width="6.75" height="1.4" fill="#d3d8e0"/>
<rect x="1569.75" y="618.0" width="0.75" height="1.4" fill="#d3d8e0"/>
<rect x="1571.25" y="618.0" width="1.50" height="1.4" fill="#d3d8e0"/>
<rect x="1573.50" y="618.0" width="4.50" height="1.4" fill="#d3d8e0"/>
<rect x="1578.75" y="618.0" width="3.00" height="1.4" fill="#d3d8e0"/>
<rect x="1581.75" y="618.0" width="1.50" height="1.4" fill="#4fb3dd"/>
<rect x="1583.25" y="618.0" width="1.50" height="1.4" fill="#f0616d"/>
<rect x="1584.75" y="618.0" width="0.75" height="1.4" fill="#4fb3dd"/>
<rect x="1524.00" y="620.0" width="0.75" height="1.4" fill="#4fb3dd"/>
<rect x="1524.75" y="620.0" width="1.50" height="1.4" fill="#f0616d"/>
<rect x="1527.00" y="620.0" width="1.50" height="1.4" fill="#4fb3dd"/>
<rect x="1524.00" y="622.0" width="0.75" height="1.4" fill="#4fb3dd"/>
<rect x="1524.75" y="622.0" width="1.50" height="1.4" fill="#f0616d"/>
<rect x="1526.25" y="622.0" width="0.75" height="1.4" fill="#4fb3dd"/>
<rect x="1527.00" y="622.0" width="4.50" height="1.4" fill="#d3d8e0"/>
<rect x="1532.25" y="622.0" width="3.75" height="1.4" fill="#d3d8e0"/>
<rect x="1536.75" y="622.0" width="1.50" height="1.4" fill="#d3d8e0"/>
<rect x="1539.00" y="622.0" width="1.50" height="1.4" fill="#d3d8e0"/>
<rect x="1541.25" y="622.0" width="3.00" height="1.4" fill="#d3d8e0"/>
<rect x="1545.00" y="622.0" width="4.50" height="1.4" fill="#d3d8e0"/>
<rect x="1550.25" y="622.0" width="8.25" height="1.4" fill="#d3d8e0"/>
<rect x="1559.25" y="622.0" width="4.50" height="1.4" fill="#d3d8e0"/>
<rect x="1564.50" y="622.0" width="6.00" height="1.4" fill="#d3d8e0"/>
<rect x="1571.25" y="622.0" width="2.25" height="1.4" fill="#d3d8e0"/>
<rect x="1574.25" y="622.0" width="6.00" height="1.4" fill="#d3d8e0"/>
<rect x="1581.00" y="622.0" width="4.50" height="1.4" fill="#d3d8e0"/>
<rect x="1586.25" y="622.0" width="6.00" height="1.4" fill="#d3d8e0"/>
<rect x="1593.00" y="622.0" width="1.50" height="1.4" fill="#d3d8e0"/>
<rect x="1524.00" y="624.0" width="6.00" height="1.4" fill="#d3d8e0"/>
<rect x="1524.00" y="626.0" width="1.50" height="1.4" fill="#d3d8e0"/>
<rect x="1526.25" y="626.0" width="3.75" height="1.4" fill="#d3d8e0"/>
<rect x="1530.75" y="626.0" width="6.00" height="1.4" fill="#d3d8e0"/>
<rect x="1537.50" y="626.0" width="1.50" height="1.4" fill="#d3d8e0"/>
<rect x="1539.75" y="626.0" width="3.00" height="1.4" fill="#d3d8e0"/>
<rect x="1543.50" y="626.0" width="3.00" height="1.4" fill="#d3d8e0"/>
<rect x="1547.25" y="626.0" width="4.50" height="1.4" fill="#d3d8e0"/>
<rect x="1552.50" y="626.0" width="1.50" height="1.4" fill="#d3d8e0"/>
<rect x="1554.75" y="626.0" width="4.50" height="1.4" fill="#d3d8e0"/>
<rect x="1560.00" y="626.0" width="3.75" height="1.4" fill="#d3d8e0"/>
<rect x="1564.50" y="626.0" width="1.50" height="1.4" fill="#d3d8e0"/>
<rect x="1566.75" y="626.0" width="3.75" height="1.4" fill="#d3d8e0"/>
<rect x="1571.25" y="626.0" width="3.00" height="1.4" fill="#d3d8e0"/>
<rect x="1575.00" y="626.0" width="3.00" height="1.4" fill="#d3d8e0"/>
<rect x="1578.75" y="626.0" width="2.25" height="1.4" fill="#d3d8e0"/>
<rect x="1581.75" y="626.0" width="4.50" height="1.4" fill="#d3d8e0"/>
<rect x="1587.00" y="626.0" width="1.50" height="1.4" fill="#d3d8e0"/>
<rect x="1589.25" y="626.0" width="6.00" height="1.4" fill="#d3d8e0"/>
<rect x="1595.25" y="626.0" width="1.50" height="1.4" fill="#4fb3dd"/>
<rect x="1596.75" y="626.0" width="1.50" height="1.4" fill="#f0616d"/>
<rect x="1598.25" y="626.0" width="0.75" height="1.4" fill="#4fb3dd"/>
<rect x="1524.00" y="628.0" width="0.75" height="1.4" fill="#4fb3dd"/>
<rect x="1524.75" y="628.0" width="1.50" height="1.4" fill="#f0616d"/>
<rect x="1527.00" y="628.0" width="1.50" height="1.4" fill="#4fb3dd"/>
<rect x="1524.00" y="630.0" width="0.75" height="1.4" fill="#4fb3dd"/>
<rect x="1524.75" y="630.0" width="1.50" height="1.4" fill="#f0616d"/>
<rect x="1526.25" y="630.0" width="0.75" height="1.4" fill="#4fb3dd"/>
<rect x="1527.00" y="630.0" width="0.75" height="1.4" fill="#d3d8e0"/>
<rect x="1528.50" y="630.0" width="1.50" height="1.4" fill="#d3d8e0"/>
<rect x="1530.75" y="630.0" width="5.25" height="1.4" fill="#d3d8e0"/>
<rect x="1536.75" y="630.0" width="1.50" height="1.4" fill="#d3d8e0"/>
<rect x="1539.00" y="630.0" width="6.00" height="1.4" fill="#d3d8e0"/>
<rect x="1545.75" y="630.0" width="4.50" height="1.4" fill="#d3d8e0"/>
<rect x="1551.00" y="630.0" width="1.50" height="1.4" fill="#d3d8e0"/>
<rect x="1553.25" y="630.0" width="4.50" height="1.4" fill="#d3d8e0"/>
<rect x="1558.50" y="630.0" width="4.50" height="1.4" fill="#d3d8e0"/>
<rect x="1563.75" y="630.0" width="1.50" height="1.4" fill="#d3d8e0"/>
<rect x="1566.00" y="630.0" width="8.25" height="1.4" fill="#d3d8e0"/>
<rect x="1575.00" y="630.0" width="6.00" height="1.4" fill="#d3d8e0"/>
<rect x="1581.75" y="630.0" width="3.75" height="1.4" fill="#d3d8e0"/>
<rect x="1586.25" y="630.0" width="1.50" height="1.4" fill="#d3d8e0"/>
<rect x="1588.50" y="630.0" width="4.50" height="1.4" fill="#d3d8e0"/>
<rect x="1593.75" y="630.0" width="3.00" height="1.4" fill="#d3d8e0"/>
<rect x="1524.00" y="632.0" width="4.50" height="1.4" fill="#d3d8e0"/>
<rect x="1529.25" y="632.0" width="3.00" height="1.4" fill="#d3d8e0"/>
<rect x="1533.00" y="632.0" width="6.00" height="1.4" fill="#d3d8e0"/>
<rect x="1539.75" y="632.0" width="3.75" height="1.4" fill="#d3d8e0"/>
<rect x="1544.25" y="632.0" width="3.75" height="1.4" fill="#d3d8e0"/>
<rect x="1548.75" y="632.0" width="3.00" height="1.4" fill="#d3d8e0"/>
<rect x="1552.50" y="632.0" width="6.75" height="1.4" fill="#d3d8e0"/>
<rect x="1560.00" y="632.0" width="4.50" height="1.4" fill="#d3d8e0"/>
<rect x="1565.25" y="632.0" width="1.50" height="1.4" fill="#d3d8e0"/>
<rect x="1567.50" y="632.0" width="4.50" height="1.4" fill="#d3d8e0"/>
<rect x="1572.75" y="632.0" width="4.50" height="1.4" fill="#d3d8e0"/>
<rect x="1578.00" y="632.0" width="1.50" height="1.4" fill="#d3d8e0"/>
<rect x="1580.25" y="632.0" width="3.75" height="1.4" fill="#d3d8e0"/>
<rect x="1584.75" y="632.0" width="3.00" height="1.4" fill="#d3d8e0"/>
<rect x="1588.50" y="632.0" width="1.50" height="1.4" fill="#d3d8e0"/>
<rect x="1590.75" y="632.0" width="3.00" height="1.4" fill="#d3d8e0"/>
<rect x="1594.50" y="632.0" width="3.75" height="1.4" fill="#d3d8e0"/>
<rect x="1524.00" y="634.0" width="3.75" height="1.4" fill="#d3d8e0"/>
<rect x="1528.50" y="634.0" width="1.50" height="1.4" fill="#d3d8e0"/>
<rect x="1530.75" y="634.0" width="4.50" height="1.4" fill="#d3d8e0"/>
<rect x="1536.00" y="634.0" width="1.50" height="1.4" fill="#d3d8e0"/>
<rect x="1538.25" y="634.0" width="1.50" height="1.4" fill="#d3d8e0"/>
<rect x="1540.50" y="634.0" width="4.50" height="1.4" fill="#d3d8e0"/>
<rect x="1545.75" y="634.0" width="3.00" height="1.4" fill="#d3d8e0"/>
<rect x="1549.50" y="634.0" width="4.50" height="1.4" fill="#d3d8e0"/>
<rect x="1554.75" y="634.0" width="5.25" height="1.4" fill="#d3d8e0"/>
<rect x="1560.75" y="634.0" width="6.00" height="1.4" fill="#d3d8e0"/>
<rect x="1567.50" y="634.0" width="3.75" height="1.4" fill="#d3d8e0"/>
<rect x="1572.00" y="634.0" width="3.00" height="1.4" fill="#d3d8e0"/>
<rect x="1575.75" y="634.0" width="6.75" height="1.4" fill="#d3d8e0"/>
<rect x="1583.25" y="634.0" width="4.50" height="1.4" fill="#d3d8e0"/>
<rect x="1588.50" y="634.0" width="1.50" height="1.4" fill="#d3d8e0"/>
<rect x="1590.75" y="634.0" width="6.75" height="1.4" fill="#d3d8e0"/>
<rect x="1524.00" y="636.0" width="1.50" height="1.4" fill="#d3d8e0"/>
<rect x="1526.25" y="636.0" width="4.50" height="1.4" fill="#d3d8e0"/>
<rect x="1531.50" y="636.0" width="4.50" height="1.4" fill="#d3d8e0"/>
<rect x="1536.75" y="636.0" width="6.75" height="1.4" fill="#d3d8e0"/>
<rect x="1544.25" y="636.0" width="1.50" height="1.4" fill="#d3d8e0"/>
<rect x="1546.50" y="636.0" width="6.75" height="1.4" fill="#d3d8e0"/>
<rect x="1554.00" y="636.0" width="3.75" height="1.4" fill="#d3d8e0"/>
<rect x="1558.50" y="636.0" width="3.00" height="1.4" fill="#d3d8e0"/>
<rect x="1562.25" y="636.0" width="1.50" height="1.4" fill="#d3d8e0"/>
<rect x="1564.50" y="636.0" width="1.50" height="1.4" fill="#d3d8e0"/>
<rect x="1566.75" y="636.0" width="4.50" height="1.4" fill="#d3d8e0"/>
<rect x="1572.00" y="636.0" width="4.50" height="1.4" fill="#d3d8e0"/>
<rect x="1577.25" y="636.0" width="3.00" height="1.4" fill="#d3d8e0"/>
<rect x="1581.00" y="636.0" width="6.00" height="1.4" fill="#d3d8e0"/>
<rect x="1587.75" y="636.0" width="5.25" height="1.4" fill="#d3d8e0"/>
<rect x="1524.00" y="638.0" width="6.00" height="1.4" fill="#d3d8e0"/>
<rect x="1530.75" y="638.0" width="1.50" height="1.4" fill="#d3d8e0"/>
<rect x="1533.00" y="638.0" width="1.50" height="1.4" fill="#d3d8e0"/>
<rect x="1535.25" y="638.0" width="3.75" height="1.4" fill="#d3d8e0"/>
<rect x="1539.75" y="638.0" width="1.50" height="1.4" fill="#d3d8e0"/>
<rect x="1542.00" y="638.0" width="6.00" height="1.4" fill="#d3d8e0"/>
<rect x="1548.75" y="638.0" width="1.50" height="1.4" fill="#d3d8e0"/>
<rect x="1551.00" y="638.0" width="8.25" height="1.4" fill="#d3d8e0"/>
<rect x="1559.25" y="638.0" width="1.50" height="1.4" fill="#4fb3dd"/>
<rect x="1560.75" y="638.0" width="1.50" height="1.4" fill="#f0616d"/>
<rect x="1562.25" y="638.0" width="0.75" height="1.4" fill="#4fb3dd"/>
<rect x="1524.00" y="640.0" width="0.75" height="1.4" fill="#4fb3dd"/>
<rect x="1524.75" y="640.0" width="1.50" height="1.4" fill="#f0616d"/>
<rect x="1527.00" y="640.0" width="1.50" height="1.4" fill="#4fb3dd"/>
<rect x="1524.00" y="642.0" width="0.75" height="1.4" fill="#4fb3dd"/>
<rect x="1524.75" y="642.0" width="1.50" height="1.4" fill="#f0616d"/>
<rect x="1527.00" y="642.0" width="1.50" height="1.4" fill="#4fb3dd"/>
<rect x="1521.00" y="644.0" width="1.50" height="1.4" fill="#4fb3dd"/>
<rect x="1522.50" y="644.0" width="1.50" height="1.4" fill="#f0616d"/>
<rect x="1524.00" y="644.0" width="0.75" height="1.4" fill="#4fb3dd"/>
<rect x="1518.00" y="646.0" width="1.50" height="1.4" fill="#4fb3dd"/>
<rect x="1519.50" y="646.0" width="0.75" height="1.4" fill="#f0616d"/>
<rect x="1520.25" y="646.0" width="0.75" height="1.4" fill="#4fb3dd"/>
<rect x="1518.00" y="648.0" width="0.75" height="1.4" fill="#4fb3dd"/>
<rect x="1518.75" y="648.0" width="1.50" height="1.4" fill="#f0616d"/>
<rect x="1521.00" y="648.0" width="1.50" height="1.4" fill="#4fb3dd"/>
<rect x="1518.00" y="650.0" width="0.75" height="1.4" fill="#4fb3dd"/>
<rect x="1518.75" y="650.0" width="1.50" height="1.4" fill="#f0616d"/>
<rect x="1520.25" y="650.0" width="0.75" height="1.4" fill="#4fb3dd"/>
<rect x="1521.00" y="650.0" width="3.00" height="1.4" fill="#d3d8e0"/>
<rect x="1524.75" y="650.0" width="1.50" height="1.4" fill="#d3d8e0"/>
<rect x="1527.00" y="650.0" width="6.00" height="1.4" fill="#d3d8e0"/>
<rect x="1533.75" y="650.0" width="5.25" height="1.4" fill="#d3d8e0"/>
<rect x="1539.75" y="650.0" width="0.75" height="1.4" fill="#d3d8e0"/>
<rect x="1540.50" y="650.0" width="1.50" height="1.4" fill="#4fb3dd"/>
<rect x="1542.00" y="650.0" width="1.50" height="1.4" fill="#f0616d"/>
<rect x="1543.50" y="650.0" width="0.75" height="1.4" fill="#4fb3dd"/>
<rect x="1518.00" y="652.0" width="0.75" height="1.4" fill="#4fb3dd"/>
<rect x="1518.75" y="652.0" width="0.75" height="1.4" fill="#f0616d"/>
<rect x="1519.50" y="652.0" width="0.75" height="1.4" fill="#4fb3dd"/>
<rect x="1521.00" y="654.0" width="0.75" height="1.4" fill="#4fb3dd"/>
<rect x="1521.75" y="654.0" width="1.50" height="1.4" fill="#f0616d"/>
<rect x="1523.25" y="654.0" width="0.75" height="1.4" fill="#4fb3dd"/>
<rect x="1524.00" y="656.0" width="0.75" height="1.4" fill="#4fb3dd"/>
<rect x="1524.75" y="656.0" width="1.50" height="1.4" fill="#f0616d"/>
<rect x="1526.25" y="656.0" width="0.75" height="1.4" fill="#4fb3dd"/>
<rect x="1527.00" y="656.0" width="3.75" height="1.4" fill="#d3d8e0"/>
<rect x="1531.50" y="656.0" width="3.00" height="1.4" fill="#d3d8e0"/>
<rect x="1535.25" y="656.0" width="5.25" height="1.4" fill="#d3d8e0"/>
<rect x="1541.25" y="656.0" width="5.25" height="1.4" fill="#d3d8e0"/>
<rect x="1547.25" y="656.0" width="6.00" height="1.4" fill="#d3d8e0"/>
<rect x="1554.00" y="656.0" width="4.50" height="1.4" fill="#d3d8e0"/>
<rect x="1559.25" y="656.0" width="5.25" height="1.4" fill="#d3d8e0"/>
<rect x="1565.25" y="656.0" width="6.00" height="1.4" fill="#d3d8e0"/>
<rect x="1572.00" y="656.0" width="1.50" height="1.4" fill="#d3d8e0"/>
<rect x="1574.25" y="656.0" width="4.50" height="1.4" fill="#d3d8e0"/>
<rect x="1579.50" y="656.0" width="3.00" height="1.4" fill="#d3d8e0"/>
<rect x="1583.25" y="656.0" width="4.50" height="1.4" fill="#d3d8e0"/>
<rect x="1588.50" y="656.0" width="4.50" height="1.4" fill="#d3d8e0"/>
<rect x="1593.75" y="656.0" width="3.00" height="1.4" fill="#d3d8e0"/>
<rect x="1524.00" y="658.0" width="3.00" height="1.4" fill="#d3d8e0"/>
<rect x="1527.75" y="658.0" width="8.25" height="1.4" fill="#d3d8e0"/>
<rect x="1536.75" y="658.0" width="1.50" height="1.4" fill="#d3d8e0"/>
<rect x="1539.00" y="658.0" width="6.75" height="1.4" fill="#d3d8e0"/>
<rect x="1546.50" y="658.0" width="1.50" height="1.4" fill="#d3d8e0"/>
<rect x="1548.75" y="658.0" width="4.50" height="1.4" fill="#d3d8e0"/>
<rect x="1554.00" y="658.0" width="1.50" height="1.4" fill="#d3d8e0"/>
<rect x="1556.25" y="658.0" width="1.50" height="1.4" fill="#d3d8e0"/>
<rect x="1558.50" y="658.0" width="3.75" height="1.4" fill="#d3d8e0"/>
<rect x="1563.00" y="658.0" width="1.50" height="1.4" fill="#d3d8e0"/>
<rect x="1565.25" y="658.0" width="6.00" height="1.4" fill="#d3d8e0"/>
<rect x="1572.00" y="658.0" width="6.00" height="1.4" fill="#d3d8e0"/>
<rect x="1578.75" y="658.0" width="4.50" height="1.4" fill="#d3d8e0"/>
<rect x="1584.00" y="658.0" width="3.75" height="1.4" fill="#d3d8e0"/>
<rect x="1588.50" y="658.0" width="5.25" height="1.4" fill="#d3d8e0"/>
<rect x="1593.75" y="658.0" width="1.50" height="1.4" fill="#4fb3dd"/>
<rect x="1595.25" y="658.0" width="1.50" height="1.4" fill="#f0616d"/>
<rect x="1596.75" y="658.0" width="0.75" height="1.4" fill="#4fb3dd"/>
<rect x="1524.00" y="660.0" width="0.75" height="1.4" fill="#4fb3dd"/>
<rect x="1524.75" y="660.0" width="1.50" height="1.4" fill="#f0616d"/>
<rect x="1527.00" y="660.0" width="1.50" height="1.4" fill="#4fb3dd"/>
<rect x="1524.00" y="662.0" width="0.75" height="1.4" fill="#4fb3dd"/>
<rect x="1524.75" y="662.0" width="1.50" height="1.4" fill="#f0616d"/>
<rect x="1526.25" y="662.0" width="0.75" height="1.4" fill="#4fb3dd"/>
<rect x="1527.00" y="662.0" width="6.00" height="1.4" fill="#d3d8e0"/>
<rect x="1533.75" y="662.0" width="3.00" height="1.4" fill="#d3d8e0"/>
<rect x="1537.50" y="662.0" width="3.75" height="1.4" fill="#d3d8e0"/>
<rect x="1542.00" y="662.0" width="0.75" height="1.4" fill="#d3d8e0"/>
<rect x="1543.50" y="662.0" width="3.00" height="1.4" fill="#d3d8e0"/>
<rect x="1547.25" y="662.0" width="1.50" height="1.4" fill="#d3d8e0"/>
<rect x="1549.50" y="662.0" width="4.50" height="1.4" fill="#d3d8e0"/>
<rect x="1554.75" y="662.0" width="4.50" height="1.4" fill="#d3d8e0"/>
<rect x="1560.00" y="662.0" width="6.00" height="1.4" fill="#d3d8e0"/>
<rect x="1566.75" y="662.0" width="3.00" height="1.4" fill="#d3d8e0"/>
<rect x="1570.50" y="662.0" width="3.75" height="1.4" fill="#d3d8e0"/>
<rect x="1575.00" y="662.0" width="2.25" height="1.4" fill="#d3d8e0"/>
<rect x="1578.00" y="662.0" width="0.75" height="1.4" fill="#d3d8e0"/>
<rect x="1579.50" y="662.0" width="6.75" height="1.4" fill="#d3d8e0"/>
<rect x="1587.00" y="662.0" width="1.50" height="1.4" fill="#d3d8e0"/>
<rect x="1589.25" y="662.0" width="1.50" height="1.4" fill="#d3d8e0"/>
<rect x="1591.50" y="662.0" width="3.00" height="1.4" fill="#d3d8e0"/>
<rect x="1524.00" y="664.0" width="6.75" height="1.4" fill="#d3d8e0"/>
<rect x="1531.50" y="664.0" width="4.50" height="1.4" fill="#d3d8e0"/>
<rect x="1536.75" y="664.0" width="4.50" height="1.4" fill="#d3d8e0"/>
<rect x="1542.00" y="664.0" width="3.00" height="1.4" fill="#d3d8e0"/>
<rect x="1545.75" y="664.0" width="6.75" height="1.4" fill="#d3d8e0"/>
<rect x="1553.25" y="664.0" width="3.00" height="1.4" fill="#d3d8e0"/>
<rect x="1557.00" y="664.0" width="3.75" height="1.4" fill="#d3d8e0"/>
<rect x="1561.50" y="664.0" width="3.00" height="1.4" fill="#d3d8e0"/>
<rect x="1565.25" y="664.0" width="3.00" height="1.4" fill="#d3d8e0"/>
<rect x="1569.00" y="664.0" width="4.50" height="1.4" fill="#d3d8e0"/>
<rect x="1574.25" y="664.0" width="6.00" height="1.4" fill="#d3d8e0"/>
<rect x="1581.00" y="664.0" width="2.25" height="1.4" fill="#d3d8e0"/>
<rect x="1584.00" y="664.0" width="2.25" height="1.4" fill="#d3d8e0"/>
<rect x="1587.00" y="664.0" width="5.25" height="1.4" fill="#d3d8e0"/>
<rect x="1524.00" y="666.0" width="8.25" height="1.4" fill="#d3d8e0"/>
<rect x="1524.00" y="668.0" width="6.00" height="1.4" fill="#d3d8e0"/>
<rect x="1530.75" y="668.0" width="6.75" height="1.4" fill="#d3d8e0"/>
<rect x="1538.25" y="668.0" width="3.00" height="1.4" fill="#d3d8e0"/>
<rect x="1542.00" y="668.0" width="6.00" height="1.4" fill="#d3d8e0"/>
<rect x="1548.75" y="668.0" width="4.50" height="1.4" fill="#d3d8e0"/>
<rect x="1554.00" y="668.0" width="2.25" height="1.4" fill="#d3d8e0"/>
<rect x="1557.00" y="668.0" width="3.00" height="1.4" fill="#d3d8e0"/>
<rect x="1560.75" y="668.0" width="6.75" height="1.4" fill="#d3d8e0"/>
<rect x="1568.25" y="668.0" width="4.50" height="1.4" fill="#d3d8e0"/>
<rect x="1573.50" y="668.0" width="4.50" height="1.4" fill="#d3d8e0"/>
<rect x="1578.75" y="668.0" width="1.50" height="1.4" fill="#d3d8e0"/>
<rect x="1581.00" y="668.0" width="5.25" height="1.4" fill="#d3d8e0"/>
<rect x="1587.00" y="668.0" width="5.25" height="1.4" fill="#d3d8e0"/>
<rect x="1593.00" y="668.0" width="4.50" height="1.4" fill="#d3d8e0"/>
<rect x="1524.00" y="670.0" width="3.00" height="1.4" fill="#d3d8e0"/>
<rect x="1524.00" y="672.0" width="4.50" height="1.4" fill="#d3d8e0"/>
<rect x="1529.25" y="672.0" width="3.00" height="1.4" fill="#d3d8e0"/>
<rect x="1533.00" y="672.0" width="3.75" height="1.4" fill="#d3d8e0"/>
<rect x="1537.50" y="672.0" width="2.25" height="1.4" fill="#d3d8e0"/>
<rect x="1540.50" y="672.0" width="4.50" height="1.4" fill="#d3d8e0"/>
<rect x="1545.75" y="672.0" width="3.00" height="1.4" fill="#d3d8e0"/>
<rect x="1548.75" y="672.0" width="1.50" height="1.4" fill="#4fb3dd"/>
<rect x="1550.25" y="672.0" width="1.50" height="1.4" fill="#f0616d"/>
<rect x="1551.75" y="672.0" width="0.75" height="1.4" fill="#4fb3dd"/>
<rect x="1524.00" y="674.0" width="0.75" height="1.4" fill="#4fb3dd"/>
<rect x="1524.75" y="674.0" width="1.50" height="1.4" fill="#f0616d"/>
<rect x="1527.00" y="674.0" width="1.50" height="1.4" fill="#4fb3dd"/>
<rect x="1524.00" y="676.0" width="0.75" height="1.4" fill="#4fb3dd"/>
<rect x="1524.75" y="676.0" width="1.50" height="1.4" fill="#f0616d"/>
<rect x="1526.25" y="676.0" width="0.75" height="1.4" fill="#4fb3dd"/>
<rect x="1527.00" y="676.0" width="4.50" height="1.4" fill="#d3d8e0"/>
<rect x="1532.25" y="676.0" width="0.75" height="1.4" fill="#d3d8e0"/>
<rect x="1533.75" y="676.0" width="4.50" height="1.4" fill="#d3d8e0"/>
<rect x="1539.00" y="676.0" width="3.75" height="1.4" fill="#d3d8e0"/>
<rect x="1543.50" y="676.0" width="2.25" height="1.4" fill="#d3d8e0"/>
<rect x="1546.50" y="676.0" width="4.50" height="1.4" fill="#d3d8e0"/>
<rect x="1551.75" y="676.0" width="5.25" height="1.4" fill="#d3d8e0"/>
<rect x="1557.75" y="676.0" width="4.50" height="1.4" fill="#d3d8e0"/>
<rect x="1563.00" y="676.0" width="5.25" height="1.4" fill="#d3d8e0"/>
<rect x="1569.00" y="676.0" width="5.25" height="1.4" fill="#d3d8e0"/>
<rect x="1575.00" y="676.0" width="1.50" height="1.4" fill="#d3d8e0"/>
<rect x="1577.25" y="676.0" width="1.50" height="1.4" fill="#d3d8e0"/>
<rect x="1579.50" y="676.0" width="1.50" height="1.4" fill="#d3d8e0"/>
<rect x="1581.75" y="676.0" width="2.25" height="1.4" fill="#d3d8e0"/>
<rect x="1584.75" y="676.0" width="1.50" height="1.4" fill="#d3d8e0"/>
<rect x="1587.00" y="676.0" width="3.00" height="1.4" fill="#d3d8e0"/>
<rect x="1590.75" y="676.0" width="4.50" height="1.4" fill="#d3d8e0"/>
<rect x="1596.00" y="676.0" width="3.00" height="1.4" fill="#d3d8e0"/>
<rect x="1524.00" y="678.0" width="3.00" height="1.4" fill="#d3d8e0"/>
<rect x="1527.75" y="678.0" width="5.25" height="1.4" fill="#d3d8e0"/>
<rect x="1533.75" y="678.0" width="2.25" height="1.4" fill="#d3d8e0"/>
<rect x="1536.75" y="678.0" width="6.00" height="1.4" fill="#d3d8e0"/>
<rect x="1543.50" y="678.0" width="1.50" height="1.4" fill="#d3d8e0"/>
<rect x="1545.75" y="678.0" width="3.00" height="1.4" fill="#d3d8e0"/>
<rect x="1549.50" y="678.0" width="4.50" height="1.4" fill="#d3d8e0"/>
<rect x="1554.75" y="678.0" width="4.50" height="1.4" fill="#d3d8e0"/>
<rect x="1560.00" y="678.0" width="6.00" height="1.4" fill="#d3d8e0"/>
<rect x="1566.75" y="678.0" width="3.75" height="1.4" fill="#d3d8e0"/>
<rect x="1571.25" y="678.0" width="1.50" height="1.4" fill="#d3d8e0"/>
<rect x="1573.50" y="678.0" width="3.75" height="1.4" fill="#d3d8e0"/>
<rect x="1578.00" y="678.0" width="1.50" height="1.4" fill="#d3d8e0"/>
<rect x="1580.25" y="678.0" width="1.50" height="1.4" fill="#d3d8e0"/>
<rect x="1582.50" y="678.0" width="1.50" height="1.4" fill="#d3d8e0"/>
<rect x="1584.75" y="678.0" width="1.50" height="1.4" fill="#d3d8e0"/>
<rect x="1587.00" y="678.0" width="2.25" height="1.4" fill="#d3d8e0"/>
<rect x="1590.00" y="678.0" width="4.50" height="1.4" fill="#d3d8e0"/>
<rect x="1595.25" y="678.0" width="2.25" height="1.4" fill="#d3d8e0"/>
<rect x="1524.00" y="680.0" width="6.75" height="1.4" fill="#d3d8e0"/>
<rect x="1531.50" y="680.0" width="3.00" height="1.4" fill="#d3d8e0"/>
<rect x="1535.25" y="680.0" width="4.50" height="1.4" fill="#d3d8e0"/>
<rect x="1540.50" y="680.0" width="6.00" height="1.4" fill="#d3d8e0"/>
<rect x="1547.25" y="680.0" width="5.25" height="1.4" fill="#d3d8e0"/>
<rect x="1553.25" y="680.0" width="6.75" height="1.4" fill="#d3d8e0"/>
<rect x="1560.75" y="680.0" width="4.50" height="1.4" fill="#d3d8e0"/>
<rect x="1566.00" y="680.0" width="8.25" height="1.4" fill="#d3d8e0"/>
<rect x="1575.00" y="680.0" width="3.00" height="1.4" fill="#d3d8e0"/>
<rect x="1578.75" y="680.0" width="6.00" height="1.4" fill="#d3d8e0"/>
<rect x="1585.50" y="680.0" width="8.25" height="1.4" fill="#d3d8e0"/>
<rect x="1593.75" y="680.0" width="1.50" height="1.4" fill="#4fb3dd"/>
<rect x="1595.25" y="680.0" width="1.50" height="1.4" fill="#f0616d"/>
<rect x="1596.75" y="680.0" width="0.75" height="1.4" fill="#4fb3dd"/>
<rect x="1524.00" y="682.0" width="0.75" height="1.4" fill="#4fb3dd"/>
<rect x="1524.75" y="682.0" width="1.50" height="1.4" fill="#f0616d"/>
<rect x="1527.00" y="682.0" width="1.50" height="1.4" fill="#4fb3dd"/>
<rect x="1524.00" y="684.0" width="0.75" height="1.4" fill="#4fb3dd"/>
<rect x="1524.75" y="684.0" width="1.50" height="1.4" fill="#f0616d"/>
<rect x="1526.25" y="684.0" width="0.75" height="1.4" fill="#4fb3dd"/>
<rect x="1527.00" y="684.0" width="1.50" height="1.4" fill="#d3d8e0"/>
<rect x="1529.25" y="684.0" width="1.50" height="1.4" fill="#d3d8e0"/>
<rect x="1531.50" y="684.0" width="1.50" height="1.4" fill="#d3d8e0"/>
<rect x="1533.75" y="684.0" width="5.25" height="1.4" fill="#d3d8e0"/>
<rect x="1539.75" y="684.0" width="4.50" height="1.4" fill="#d3d8e0"/>
<rect x="1545.00" y="684.0" width="2.25" height="1.4" fill="#d3d8e0"/>
<rect x="1548.00" y="684.0" width="2.25" height="1.4" fill="#d3d8e0"/>
<rect x="1551.00" y="684.0" width="3.00" height="1.4" fill="#d3d8e0"/>
<rect x="1554.75" y="684.0" width="1.50" height="1.4" fill="#d3d8e0"/>
<rect x="1557.00" y="684.0" width="2.25" height="1.4" fill="#d3d8e0"/>
<rect x="1560.00" y="684.0" width="3.00" height="1.4" fill="#d3d8e0"/>
<rect x="1563.75" y="684.0" width="4.50" height="1.4" fill="#d3d8e0"/>
<rect x="1569.00" y="684.0" width="3.00" height="1.4" fill="#d3d8e0"/>
<rect x="1572.75" y="684.0" width="6.75" height="1.4" fill="#d3d8e0"/>
<rect x="1580.25" y="684.0" width="3.75" height="1.4" fill="#d3d8e0"/>
<rect x="1584.75" y="684.0" width="8.25" height="1.4" fill="#d3d8e0"/>
<rect x="1593.75" y="684.0" width="3.75" height="1.4" fill="#d3d8e0"/>
<rect x="1524.00" y="686.0" width="6.00" height="1.4" fill="#d3d8e0"/>
<rect x="1530.75" y="686.0" width="2.25" height="1.4" fill="#d3d8e0"/>
<rect x="1533.75" y="686.0" width="8.25" height="1.4" fill="#d3d8e0"/>
<rect x="1542.75" y="686.0" width="1.50" height="1.4" fill="#d3d8e0"/>
<rect x="1545.00" y="686.0" width="1.50" height="1.4" fill="#d3d8e0"/>
<rect x="1547.25" y="686.0" width="6.00" height="1.4" fill="#d3d8e0"/>
<rect x="1554.00" y="686.0" width="3.75" height="1.4" fill="#d3d8e0"/>
<rect x="1558.50" y="686.0" width="4.50" height="1.4" fill="#d3d8e0"/>
<rect x="1563.75" y="686.0" width="8.25" height="1.4" fill="#d3d8e0"/>
<rect x="1572.75" y="686.0" width="5.25" height="1.4" fill="#d3d8e0"/>
<rect x="1578.75" y="686.0" width="6.75" height="1.4" fill="#d3d8e0"/>
<rect x="1586.25" y="686.0" width="1.50" height="1.4" fill="#d3d8e0"/>
<rect x="1588.50" y="686.0" width="3.00" height="1.4" fill="#d3d8e0"/>
<rect x="1592.25" y="686.0" width="3.75" height="1.4" fill="#d3d8e0"/>
<rect x="1524.00" y="688.0" width="4.50" height="1.4" fill="#d3d8e0"/>
<rect x="1524.00" y="690.0" width="3.00" height="1.4" fill="#d3d8e0"/>
<rect x="1527.75" y="690.0" width="3.75" height="1.4" fill="#d3d8e0"/>
<rect x="1532.25" y="690.0" width="6.75" height="1.4" fill="#d3d8e0"/>
<rect x="1539.75" y="690.0" width="4.50" height="1.4" fill="#d3d8e0"/>
<rect x="1545.00" y="690.0" width="3.75" height="1.4" fill="#d3d8e0"/>
<rect x="1549.50" y="690.0" width="4.50" height="1.4" fill="#d3d8e0"/>
<rect x="1554.00" y="690.0" width="1.50" height="1.4" fill="#4fb3dd"/>
<rect x="1555.50" y="690.0" width="1.50" height="1.4" fill="#f0616d"/>
<rect x="1557.00" y="690.0" width="0.75" height="1.4" fill="#4fb3dd"/>
<rect x="1524.00" y="692.0" width="0.75" height="1.4" fill="#4fb3dd"/>
<rect x="1524.75" y="692.0" width="1.50" height="1.4" fill="#f0616d"/>
<rect x="1527.00" y="692.0" width="1.50" height="1.4" fill="#4fb3dd"/>
<rect x="1524.00" y="694.0" width="0.75" height="1.4" fill="#4fb3dd"/>
<rect x="1524.75" y="694.0" width="1.50" height="1.4" fill="#f0616d"/>
<rect x="1527.00" y="694.0" width="1.50" height="1.4" fill="#4fb3dd"/>
<rect x="1521.00" y="696.0" width="1.50" height="1.4" fill="#4fb3dd"/>
<rect x="1522.50" y="696.0" width="1.50" height="1.4" fill="#f0616d"/>
<rect x="1524.00" y="696.0" width="0.75" height="1.4" fill="#4fb3dd"/>
<rect x="1518.00" y="698.0" width="1.50" height="1.4" fill="#4fb3dd"/>
<rect x="1519.50" y="698.0" width="0.75" height="1.4" fill="#f0616d"/>
<rect x="1520.25" y="698.0" width="0.75" height="1.4" fill="#4fb3dd"/>
<rect x="1518.00" y="700.0" width="0.75" height="1.4" fill="#4fb3dd"/>
<rect x="1518.75" y="700.0" width="1.50" height="1.4" fill="#f0616d"/>
<rect x="1521.00" y="700.0" width="1.50" height="1.4" fill="#4fb3dd"/>
<rect x="1518.00" y="702.0" width="0.75" height="1.4" fill="#4fb3dd"/>
<rect x="1518.75" y="702.0" width="1.50" height="1.4" fill="#f0616d"/>
<rect x="1520.25" y="702.0" width="0.75" height="1.4" fill="#4fb3dd"/>
<rect x="1521.00" y="702.0" width="3.00" height="1.4" fill="#d3d8e0"/>
<rect x="1524.75" y="702.0" width="1.50" height="1.4" fill="#d3d8e0"/>
<rect x="1527.00" y="702.0" width="6.00" height="1.4" fill="#d3d8e0"/>
<rect x="1533.75" y="702.0" width="5.25" height="1.4" fill="#d3d8e0"/>
<rect x="1539.75" y="702.0" width="0.75" height="1.4" fill="#d3d8e0"/>
<rect x="1540.50" y="702.0" width="1.50" height="1.4" fill="#4fb3dd"/>
<rect x="1542.00" y="702.0" width="1.50" height="1.4" fill="#f0616d"/>
<rect x="1543.50" y="702.0" width="0.75" height="1.4" fill="#4fb3dd"/>
<rect x="1518.00" y="704.0" width="0.75" height="1.4" fill="#4fb3dd"/>
<rect x="1518.75" y="704.0" width="0.75" height="1.4" fill="#f0616d"/>
<rect x="1519.50" y="704.0" width="0.75" height="1.4" fill="#4fb3dd"/>
<rect x="1521.00" y="706.0" width="0.75" height="1.4" fill="#4fb3dd"/>
<rect x="1521.75" y="706.0" width="1.50" height="1.4" fill="#f0616d"/>
<rect x="1523.25" y="706.0" width="0.75" height="1.4" fill="#4fb3dd"/>
<rect x="1524.00" y="708.0" width="0.75" height="1.4" fill="#4fb3dd"/>
<rect x="1524.75" y="708.0" width="1.50" height="1.4" fill="#f0616d"/>
<rect x="1526.25" y="708.0" width="0.75" height="1.4" fill="#4fb3dd"/>
<rect x="1527.00" y="708.0" width="4.50" height="1.4" fill="#d3d8e0"/>
<rect x="1532.25" y="708.0" width="4.50" height="1.4" fill="#d3d8e0"/>
<rect x="1537.50" y="708.0" width="3.00" height="1.4" fill="#d3d8e0"/>
<rect x="1541.25" y="708.0" width="4.50" height="1.4" fill="#d3d8e0"/>
<rect x="1546.50" y="708.0" width="6.00" height="1.4" fill="#d3d8e0"/>
<rect x="1553.25" y="708.0" width="6.00" height="1.4" fill="#d3d8e0"/>
<rect x="1560.00" y="708.0" width="3.75" height="1.4" fill="#d3d8e0"/>
<rect x="1564.50" y="708.0" width="3.00" height="1.4" fill="#d3d8e0"/>
<rect x="1568.25" y="708.0" width="1.50" height="1.4" fill="#d3d8e0"/>
<rect x="1570.50" y="708.0" width="6.00" height="1.4" fill="#d3d8e0"/>
<rect x="1577.25" y="708.0" width="4.50" height="1.4" fill="#d3d8e0"/>
<rect x="1582.50" y="708.0" width="1.50" height="1.4" fill="#d3d8e0"/>
<rect x="1584.75" y="708.0" width="2.25" height="1.4" fill="#d3d8e0"/>
<rect x="1587.75" y="708.0" width="5.25" height="1.4" fill="#d3d8e0"/>
<rect x="1593.75" y="708.0" width="4.50" height="1.4" fill="#d3d8e0"/>
<rect x="1524.00" y="710.0" width="1.50" height="1.4" fill="#d3d8e0"/>
<rect x="1526.25" y="710.0" width="6.00" height="1.4" fill="#d3d8e0"/>
<rect x="1533.00" y="710.0" width="4.50" height="1.4" fill="#d3d8e0"/>
<rect x="1538.25" y="710.0" width="1.50" height="1.4" fill="#d3d8e0"/>
<rect x="1540.50" y="710.0" width="3.75" height="1.4" fill="#d3d8e0"/>
<rect x="1545.00" y="710.0" width="4.50" height="1.4" fill="#d3d8e0"/>
<rect x="1550.25" y="710.0" width="6.00" height="1.4" fill="#d3d8e0"/>
<rect x="1557.00" y="710.0" width="4.50" height="1.4" fill="#d3d8e0"/>
<rect x="1562.25" y="710.0" width="1.50" height="1.4" fill="#d3d8e0"/>
<rect x="1564.50" y="710.0" width="1.50" height="1.4" fill="#d3d8e0"/>
<rect x="1566.75" y="710.0" width="0.75" height="1.4" fill="#d3d8e0"/>
<rect x="1568.25" y="710.0" width="4.50" height="1.4" fill="#d3d8e0"/>
<rect x="1573.50" y="710.0" width="6.00" height="1.4" fill="#d3d8e0"/>
<rect x="1580.25" y="710.0" width="2.25" height="1.4" fill="#d3d8e0"/>
<rect x="1583.25" y="710.0" width="6.75" height="1.4" fill="#d3d8e0"/>
<rect x="1590.75" y="710.0" width="2.25" height="1.4" fill="#d3d8e0"/>
<rect x="1524.00" y="712.0" width="6.00" height="1.4" fill="#d3d8e0"/>
<rect x="1524.00" y="714.0" width="2.25" height="1.4" fill="#d3d8e0"/>
<rect x="1527.00" y="714.0" width="6.00" height="1.4" fill="#d3d8e0"/>
<rect x="1533.75" y="714.0" width="5.25" height="1.4" fill="#d3d8e0"/>
<rect x="1539.75" y="714.0" width="1.50" height="1.4" fill="#d3d8e0"/>
<rect x="1542.00" y="714.0" width="0.75" height="1.4" fill="#d3d8e0"/>
<rect x="1543.50" y="714.0" width="4.50" height="1.4" fill="#d3d8e0"/>
<rect x="1548.75" y="714.0" width="8.25" height="1.4" fill="#d3d8e0"/>
<rect x="1557.00" y="714.0" width="1.50" height="1.4" fill="#4fb3dd"/>
<rect x="1558.50" y="714.0" width="1.50" height="1.4" fill="#f0616d"/>
<rect x="1560.00" y="714.0" width="0.75" height="1.4" fill="#4fb3dd"/>
<rect x="1524.00" y="716.0" width="0.75" height="1.4" fill="#4fb3dd"/>
<rect x="1524.75" y="716.0" width="1.50" height="1.4" fill="#f0616d"/>
<rect x="1527.00" y="716.0" width="1.50" height="1.4" fill="#4fb3dd"/>
<rect x="1524.00" y="718.0" width="0.75" height="1.4" fill="#4fb3dd"/>
<rect x="1524.75" y="718.0" width="1.50" height="1.4" fill="#f0616d"/>
<rect x="1526.25" y="718.0" width="0.75" height="1.4" fill="#4fb3dd"/>
<rect x="1527.00" y="718.0" width="3.75" height="1.4" fill="#d3d8e0"/>
<rect x="1531.50" y="718.0" width="5.25" height="1.4" fill="#d3d8e0"/>
<rect x="1537.50" y="718.0" width="3.75" height="1.4" fill="#d3d8e0"/>
<rect x="1542.00" y="718.0" width="1.50" height="1.4" fill="#d3d8e0"/>
<rect x="1544.25" y="718.0" width="1.50" height="1.4" fill="#d3d8e0"/>
<rect x="1546.50" y="718.0" width="6.75" height="1.4" fill="#d3d8e0"/>
<rect x="1554.00" y="718.0" width="2.25" height="1.4" fill="#d3d8e0"/>
<rect x="1557.00" y="718.0" width="1.50" height="1.4" fill="#d3d8e0"/>
<rect x="1559.25" y="718.0" width="6.00" height="1.4" fill="#d3d8e0"/>
<rect x="1566.00" y="718.0" width="1.50" height="1.4" fill="#d3d8e0"/>
<rect x="1568.25" y="718.0" width="0.75" height="1.4" fill="#d3d8e0"/>
<rect x="1569.75" y="718.0" width="5.25" height="1.4" fill="#d3d8e0"/>
<rect x="1575.75" y="718.0" width="1.50" height="1.4" fill="#d3d8e0"/>
<rect x="1578.00" y="718.0" width="4.50" height="1.4" fill="#d3d8e0"/>
<rect x="1583.25" y="718.0" width="6.00" height="1.4" fill="#d3d8e0"/>
<rect x="1590.00" y="718.0" width="6.75" height="1.4" fill="#d3d8e0"/>
<rect x="1597.50" y="718.0" width="1.50" height="1.4" fill="#d3d8e0"/>
<rect x="1524.00" y="720.0" width="5.25" height="1.4" fill="#d3d8e0"/>
<rect x="1530.00" y="720.0" width="1.50" height="1.4" fill="#d3d8e0"/>
<rect x="1532.25" y="720.0" width="4.50" height="1.4" fill="#d3d8e0"/>
<rect x="1537.50" y="720.0" width="2.25" height="1.4" fill="#d3d8e0"/>
<rect x="1540.50" y="720.0" width="6.75" height="1.4" fill="#d3d8e0"/>
<rect x="1548.00" y="720.0" width="8.25" height="1.4" fill="#d3d8e0"/>
<rect x="1557.00" y="720.0" width="8.25" height="1.4" fill="#d3d8e0"/>
<rect x="1566.00" y="720.0" width="6.00" height="1.4" fill="#d3d8e0"/>
<rect x="1572.75" y="720.0" width="0.75" height="1.4" fill="#d3d8e0"/>
<rect x="1574.25" y="720.0" width="3.75" height="1.4" fill="#d3d8e0"/>
<rect x="1578.75" y="720.0" width="0.75" height="1.4" fill="#d3d8e0"/>
<rect x="1580.25" y="720.0" width="1.50" height="1.4" fill="#d3d8e0"/>
<rect x="1582.50" y="720.0" width="3.75" height="1.4" fill="#d3d8e0"/>
<rect x="1587.00" y="720.0" width="5.25" height="1.4" fill="#d3d8e0"/>
<rect x="1593.00" y="720.0" width="6.00" height="1.4" fill="#d3d8e0"/>
<rect x="1524.00" y="722.0" width="2.25" height="1.4" fill="#d3d8e0"/>
<rect x="1527.00" y="722.0" width="3.75" height="1.4" fill="#d3d8e0"/>
<rect x="1531.50" y="722.0" width="1.50" height="1.4" fill="#d3d8e0"/>
<rect x="1533.75" y="722.0" width="5.25" height="1.4" fill="#d3d8e0"/>
<rect x="1539.75" y="722.0" width="5.25" height="1.4" fill="#d3d8e0"/>
<rect x="1545.75" y="722.0" width="1.50" height="1.4" fill="#d3d8e0"/>
<rect x="1548.00" y="722.0" width="3.75" height="1.4" fill="#d3d8e0"/>
<rect x="1552.50" y="722.0" width="4.50" height="1.4" fill="#d3d8e0"/>
<rect x="1557.75" y="722.0" width="3.75" height="1.4" fill="#d3d8e0"/>
<rect x="1562.25" y="722.0" width="6.75" height="1.4" fill="#d3d8e0"/>
<rect x="1569.75" y="722.0" width="4.50" height="1.4" fill="#d3d8e0"/>
<rect x="1575.00" y="722.0" width="5.25" height="1.4" fill="#d3d8e0"/>
<rect x="1581.00" y="722.0" width="4.50" height="1.4" fill="#d3d8e0"/>
<rect x="1586.25" y="722.0" width="0.75" height="1.4" fill="#d3d8e0"/>
<rect x="1587.75" y="722.0" width="0.75" height="1.4" fill="#d3d8e0"/>
<rect x="1589.25" y="722.0" width="3.75" height="1.4" fill="#d3d8e0"/>
<rect x="1593.75" y="722.0" width="4.50" height="1.4" fill="#d3d8e0"/>
<rect x="1524.00" y="724.0" width="1.50" height="1.4" fill="#d3d8e0"/>
<rect x="1526.25" y="724.0" width="1.50" height="1.4" fill="#d3d8e0"/>
<rect x="1528.50" y="724.0" width="5.25" height="1.4" fill="#d3d8e0"/>
<rect x="1534.50" y="724.0" width="4.50" height="1.4" fill="#d3d8e0"/>
<rect x="1539.75" y="724.0" width="4.50" height="1.4" fill="#d3d8e0"/>
<rect x="1545.00" y="724.0" width="3.00" height="1.4" fill="#d3d8e0"/>
<rect x="1548.75" y="724.0" width="4.50" height="1.4" fill="#d3d8e0"/>
<rect x="1554.00" y="724.0" width="1.50" height="1.4" fill="#d3d8e0"/>
<rect x="1556.25" y="724.0" width="5.25" height="1.4" fill="#d3d8e0"/>
<rect x="1562.25" y="724.0" width="6.00" height="1.4" fill="#d3d8e0"/>
<rect x="1569.00" y="724.0" width="4.50" height="1.4" fill="#d3d8e0"/>
<rect x="1574.25" y="724.0" width="1.50" height="1.4" fill="#d3d8e0"/>
<rect x="1575.75" y="724.0" width="1.50" height="1.4" fill="#4fb3dd"/>
<rect x="1577.25" y="724.0" width="1.50" height="1.4" fill="#f0616d"/>
<rect x="1578.75" y="724.0" width="0.75" height="1.4" fill="#4fb3dd"/>
<rect x="1524.00" y="726.0" width="0.75" height="1.4" fill="#4fb3dd"/>
<rect x="1524.75" y="726.0" width="1.50" height="1.4" fill="#f0616d"/>
<rect x="1527.00" y="726.0" width="1.50" height="1.4" fill="#4fb3dd"/>
<rect x="1524.00" y="728.0" width="0.75" height="1.4" fill="#4fb3dd"/>
<rect x="1524.75" y="728.0" width="1.50" height="1.4" fill="#f0616d"/>
<rect x="1526.25" y="728.0" width="0.75" height="1.4" fill="#4fb3dd"/>
<rect x="1527.00" y="728.0" width="4.50" height="1.4" fill="#d3d8e0"/>
<rect x="1532.25" y="728.0" width="4.50" height="1.4" fill="#d3d8e0"/>
<rect x="1537.50" y="728.0" width="3.75" height="1.4" fill="#d3d8e0"/>
<rect x="1542.00" y="728.0" width="1.50" height="1.4" fill="#d3d8e0"/>
<rect x="1544.25" y="728.0" width="6.75" height="1.4" fill="#d3d8e0"/>
<rect x="1551.00" y="728.0" width="1.50" height="1.4" fill="#4fb3dd"/>
<rect x="1552.50" y="728.0" width="1.50" height="1.4" fill="#f0616d"/>
<rect x="1554.00" y="728.0" width="0.75" height="1.4" fill="#4fb3dd"/>
<rect x="1524.00" y="730.0" width="0.75" height="1.4" fill="#4fb3dd"/>
<rect x="1524.75" y="730.0" width="1.50" height="1.4" fill="#f0616d"/>
<rect x="1527.00" y="730.0" width="1.50" height="1.4" fill="#4fb3dd"/>
<rect x="1524.00" y="732.0" width="0.75" height="1.4" fill="#4fb3dd"/>
<rect x="1524.75" y="732.0" width="1.50" height="1.4" fill="#f0616d"/>
<rect x="1526.25" y="732.0" width="0.75" height="1.4" fill="#4fb3dd"/>
<rect x="1527.00" y="732.0" width="4.50" height="1.4" fill="#d3d8e0"/>
<rect x="1532.25" y="732.0" width="4.50" height="1.4" fill="#d3d8e0"/>
<rect x="1537.50" y="732.0" width="1.50" height="1.4" fill="#d3d8e0"/>
<rect x="1539.75" y="732.0" width="1.50" height="1.4" fill="#d3d8e0"/>
<rect x="1542.00" y="732.0" width="0.75" height="1.4" fill="#d3d8e0"/>
<rect x="1543.50" y="732.0" width="1.50" height="1.4" fill="#d3d8e0"/>
<rect x="1545.75" y="732.0" width="6.00" height="1.4" fill="#d3d8e0"/>
<rect x="1552.50" y="732.0" width="3.75" height="1.4" fill="#d3d8e0"/>
<rect x="1557.00" y="732.0" width="4.50" height="1.4" fill="#d3d8e0"/>
<rect x="1562.25" y="732.0" width="1.50" height="1.4" fill="#d3d8e0"/>
<rect x="1564.50" y="732.0" width="3.75" height="1.4" fill="#d3d8e0"/>
<rect x="1569.00" y="732.0" width="1.50" height="1.4" fill="#d3d8e0"/>
<rect x="1571.25" y="732.0" width="3.00" height="1.4" fill="#d3d8e0"/>
<rect x="1575.00" y="732.0" width="4.50" height="1.4" fill="#d3d8e0"/>
<rect x="1580.25" y="732.0" width="1.50" height="1.4" fill="#d3d8e0"/>
<rect x="1582.50" y="732.0" width="6.75" height="1.4" fill="#d3d8e0"/>
<rect x="1590.00" y="732.0" width="6.00" height="1.4" fill="#d3d8e0"/>
<rect x="1524.00" y="734.0" width="6.00" height="1.4" fill="#d3d8e0"/>
<rect x="1524.00" y="736.0" width="4.50" height="1.4" fill="#d3d8e0"/>
<rect x="1529.25" y="736.0" width="1.50" height="1.4" fill="#d3d8e0"/>
<rect x="1531.50" y="736.0" width="6.75" height="1.4" fill="#d3d8e0"/>
<rect x="1539.00" y="736.0" width="3.75" height="1.4" fill="#d3d8e0"/>
<rect x="1543.50" y="736.0" width="4.50" height="1.4" fill="#d3d8e0"/>
<rect x="1548.75" y="736.0" width="6.00" height="1.4" fill="#d3d8e0"/>
<rect x="1555.50" y="736.0" width="6.00" height="1.4" fill="#d3d8e0"/>
<rect x="1562.25" y="736.0" width="2.25" height="1.4" fill="#d3d8e0"/>
<rect x="1565.25" y="736.0" width="4.50" height="1.4" fill="#d3d8e0"/>
<rect x="1570.50" y="736.0" width="6.75" height="1.4" fill="#d3d8e0"/>
<rect x="1578.00" y="736.0" width="6.00" height="1.4" fill="#d3d8e0"/>
<rect x="1584.75" y="736.0" width="4.50" height="1.4" fill="#d3d8e0"/>
<rect x="1589.25" y="736.0" width="1.50" height="1.4" fill="#4fb3dd"/>
<rect x="1590.75" y="736.0" width="1.50" height="1.4" fill="#f0616d"/>
<rect x="1592.25" y="736.0" width="0.75" height="1.4" fill="#4fb3dd"/>
<rect x="1524.00" y="738.0" width="0.75" height="1.4" fill="#4fb3dd"/>
<rect x="1524.75" y="738.0" width="1.50" height="1.4" fill="#f0616d"/>
<rect x="1527.00" y="738.0" width="1.50" height="1.4" fill="#4fb3dd"/>
<rect x="1524.00" y="740.0" width="1.50" height="1.4" fill="#4fb3dd"/>
<rect x="1525.50" y="740.0" width="1.50" height="1.4" fill="#f0616d"/>
<rect x="1527.00" y="740.0" width="0.75" height="1.4" fill="#4fb3dd"/>
<rect x="1521.00" y="742.0" width="1.50" height="1.4" fill="#4fb3dd"/>
<rect x="1522.50" y="742.0" width="1.50" height="1.4" fill="#f0616d"/>
<rect x="1524.00" y="742.0" width="0.75" height="1.4" fill="#4fb3dd"/>
<rect x="1518.00" y="744.0" width="1.50" height="1.4" fill="#4fb3dd"/>
<rect x="1519.50" y="744.0" width="0.75" height="1.4" fill="#f0616d"/>
<rect x="1520.25" y="744.0" width="0.75" height="1.4" fill="#4fb3dd"/>
<rect x="1518.00" y="746.0" width="0.75" height="1.4" fill="#4fb3dd"/>
<rect x="1518.75" y="746.0" width="1.50" height="1.4" fill="#f0616d"/>
<rect x="1521.00" y="746.0" width="1.50" height="1.4" fill="#4fb3dd"/>
<rect x="1518.00" y="748.0" width="0.75" height="1.4" fill="#4fb3dd"/>
<rect x="1518.75" y="748.0" width="1.50" height="1.4" fill="#f0616d"/>
<rect x="1520.25" y="748.0" width="0.75" height="1.4" fill="#4fb3dd"/>
<rect x="1521.00" y="748.0" width="3.00" height="1.4" fill="#d3d8e0"/>
<rect x="1524.75" y="748.0" width="1.50" height="1.4" fill="#d3d8e0"/>
<rect x="1527.00" y="748.0" width="6.00" height="1.4" fill="#d3d8e0"/>
<rect x="1533.75" y="748.0" width="5.25" height="1.4" fill="#d3d8e0"/>
<rect x="1539.75" y="748.0" width="0.75" height="1.4" fill="#d3d8e0"/>
<rect x="1540.50" y="748.0" width="1.50" height="1.4" fill="#4fb3dd"/>
<rect x="1542.00" y="748.0" width="1.50" height="1.4" fill="#f0616d"/>
<rect x="1543.50" y="748.0" width="0.75" height="1.4" fill="#4fb3dd"/>
<rect x="1518.00" y="750.0" width="0.75" height="1.4" fill="#4fb3dd"/>
<rect x="1518.75" y="750.0" width="0.75" height="1.4" fill="#f0616d"/>
<rect x="1519.50" y="750.0" width="0.75" height="1.4" fill="#4fb3dd"/>
<rect x="1521.00" y="752.0" width="0.75" height="1.4" fill="#4fb3dd"/>
<rect x="1521.75" y="752.0" width="1.50" height="1.4" fill="#f0616d"/>
<rect x="1523.25" y="752.0" width="0.75" height="1.4" fill="#4fb3dd"/>
<rect x="1524.00" y="754.0" width="0.75" height="1.4" fill="#4fb3dd"/>
<rect x="1524.75" y="754.0" width="1.50" height="1.4" fill="#f0616d"/>
<rect x="1526.25" y="754.0" width="0.75" height="1.4" fill="#4fb3dd"/>
<rect x="1527.00" y="754.0" width="1.50" height="1.4" fill="#d3d8e0"/>
<rect x="1529.25" y="754.0" width="1.50" height="1.4" fill="#d3d8e0"/>
<rect x="1531.50" y="754.0" width="5.25" height="1.4" fill="#d3d8e0"/>
<rect x="1537.50" y="754.0" width="1.50" height="1.4" fill="#d3d8e0"/>
<rect x="1539.75" y="754.0" width="4.50" height="1.4" fill="#d3d8e0"/>
<rect x="1545.00" y="754.0" width="6.75" height="1.4" fill="#d3d8e0"/>
<rect x="1552.50" y="754.0" width="4.50" height="1.4" fill="#d3d8e0"/>
<rect x="1557.75" y="754.0" width="6.00" height="1.4" fill="#d3d8e0"/>
<rect x="1564.50" y="754.0" width="1.50" height="1.4" fill="#d3d8e0"/>
<rect x="1566.75" y="754.0" width="1.50" height="1.4" fill="#d3d8e0"/>
<rect x="1569.00" y="754.0" width="3.75" height="1.4" fill="#d3d8e0"/>
<rect x="1573.50" y="754.0" width="4.50" height="1.4" fill="#d3d8e0"/>
<rect x="1578.75" y="754.0" width="6.75" height="1.4" fill="#d3d8e0"/>
<rect x="1586.25" y="754.0" width="6.75" height="1.4" fill="#d3d8e0"/>
<rect x="1524.00" y="756.0" width="1.50" height="1.4" fill="#d3d8e0"/>
<rect x="1526.25" y="756.0" width="4.50" height="1.4" fill="#d3d8e0"/>
<rect x="1531.50" y="756.0" width="1.50" height="1.4" fill="#d3d8e0"/>
<rect x="1533.75" y="756.0" width="3.00" height="1.4" fill="#d3d8e0"/>
<rect x="1537.50" y="756.0" width="1.50" height="1.4" fill="#d3d8e0"/>
<rect x="1539.75" y="756.0" width="1.50" height="1.4" fill="#d3d8e0"/>
<rect x="1542.00" y="756.0" width="6.00" height="1.4" fill="#d3d8e0"/>
<rect x="1548.75" y="756.0" width="4.50" height="1.4" fill="#d3d8e0"/>
<rect x="1554.00" y="756.0" width="1.50" height="1.4" fill="#d3d8e0"/>
<rect x="1556.25" y="756.0" width="1.50" height="1.4" fill="#d3d8e0"/>
<rect x="1558.50" y="756.0" width="6.75" height="1.4" fill="#d3d8e0"/>
<rect x="1565.25" y="756.0" width="1.50" height="1.4" fill="#4fb3dd"/>
<rect x="1566.75" y="756.0" width="1.50" height="1.4" fill="#f0616d"/>
<rect x="1568.25" y="756.0" width="0.75" height="1.4" fill="#4fb3dd"/>
<rect x="1524.00" y="758.0" width="0.75" height="1.4" fill="#4fb3dd"/>
<rect x="1524.75" y="758.0" width="1.50" height="1.4" fill="#f0616d"/>
<rect x="1527.00" y="758.0" width="1.50" height="1.4" fill="#4fb3dd"/>
<rect x="1524.00" y="760.0" width="0.75" height="1.4" fill="#4fb3dd"/>
<rect x="1524.75" y="760.0" width="1.50" height="1.4" fill="#f0616d"/>
<rect x="1526.25" y="760.0" width="0.75" height="1.4" fill="#4fb3dd"/>
<rect x="1527.00" y="760.0" width="2.25" height="1.4" fill="#d3d8e0"/>
<rect x="1530.00" y="760.0" width="1.50" height="1.4" fill="#d3d8e0"/>
<rect x="1532.25" y="760.0" width="4.50" height="1.4" fill="#d3d8e0"/>
<rect x="1537.50" y="760.0" width="8.25" height="1.4" fill="#d3d8e0"/>
<rect x="1546.50" y="760.0" width="3.00" height="1.4" fill="#d3d8e0"/>
<rect x="1550.25" y="760.0" width="3.00" height="1.4" fill="#d3d8e0"/>
<rect x="1554.00" y="760.0" width="4.50" height="1.4" fill="#d3d8e0"/>
<rect x="1559.25" y="760.0" width="3.00" height="1.4" fill="#d3d8e0"/>
<rect x="1563.00" y="760.0" width="1.50" height="1.4" fill="#d3d8e0"/>
<rect x="1565.25" y="760.0" width="4.50" height="1.4" fill="#d3d8e0"/>
<rect x="1570.50" y="760.0" width="5.25" height="1.4" fill="#d3d8e0"/>
<rect x="1576.50" y="760.0" width="3.75" height="1.4" fill="#d3d8e0"/>
<rect x="1581.00" y="760.0" width="6.75" height="1.4" fill="#d3d8e0"/>
<rect x="1588.50" y="760.0" width="3.75" height="1.4" fill="#d3d8e0"/>
<rect x="1593.00" y="760.0" width="5.25" height="1.4" fill="#d3d8e0"/>
<rect x="1524.00" y="762.0" width="4.50" height="1.4" fill="#d3d8e0"/>
<rect x="1529.25" y="762.0" width="4.50" height="1.4" fill="#d3d8e0"/>
<rect x="1534.50" y="762.0" width="6.00" height="1.4" fill="#d3d8e0"/>
<rect x="1541.25" y="762.0" width="1.50" height="1.4" fill="#d3d8e0"/>
<rect x="1543.50" y="762.0" width="4.50" height="1.4" fill="#d3d8e0"/>
<rect x="1548.75" y="762.0" width="5.25" height="1.4" fill="#d3d8e0"/>
<rect x="1554.75" y="762.0" width="6.75" height="1.4" fill="#d3d8e0"/>
<rect x="1562.25" y="762.0" width="3.00" height="1.4" fill="#d3d8e0"/>
<rect x="1566.00" y="762.0" width="1.50" height="1.4" fill="#d3d8e0"/>
<rect x="1568.25" y="762.0" width="1.50" height="1.4" fill="#d3d8e0"/>
<rect x="1570.50" y="762.0" width="4.50" height="1.4" fill="#d3d8e0"/>
<rect x="1575.75" y="762.0" width="3.75" height="1.4" fill="#d3d8e0"/>
<rect x="1579.50" y="762.0" width="1.50" height="1.4" fill="#4fb3dd"/>
<rect x="1581.00" y="762.0" width="1.50" height="1.4" fill="#f0616d"/>
<rect x="1582.50" y="762.0" width="0.75" height="1.4" fill="#4fb3dd"/>
<rect x="1524.00" y="764.0" width="0.75" height="1.4" fill="#4fb3dd"/>
<rect x="1524.75" y="764.0" width="1.50" height="1.4" fill="#f0616d"/>
<rect x="1527.00" y="764.0" width="1.50" height="1.4" fill="#4fb3dd"/>
<rect x="1524.00" y="766.0" width="0.75" height="1.4" fill="#4fb3dd"/>
<rect x="1524.75" y="766.0" width="1.50" height="1.4" fill="#f0616d"/>
<rect x="1527.00" y="766.0" width="1.50" height="1.4" fill="#4fb3dd"/>
<rect x="1521.00" y="768.0" width="1.50" height="1.4" fill="#4fb3dd"/>
<rect x="1522.50" y="768.0" width="1.50" height="1.4" fill="#f0616d"/>
<rect x="1524.00" y="768.0" width="0.75" height="1.4" fill="#4fb3dd"/>
<rect x="1518.00" y="770.0" width="1.50" height="1.4" fill="#4fb3dd"/>
<rect x="1519.50" y="770.0" width="0.75" height="1.4" fill="#f0616d"/>
<rect x="1520.25" y="770.0" width="0.75" height="1.4" fill="#4fb3dd"/>
<rect x="1518.00" y="772.0" width="0.75" height="1.4" fill="#4fb3dd"/>
<rect x="1518.75" y="772.0" width="1.50" height="1.4" fill="#f0616d"/>
<rect x="1521.00" y="772.0" width="1.50" height="1.4" fill="#4fb3dd"/>
<rect x="1518.00" y="774.0" width="0.75" height="1.4" fill="#4fb3dd"/>
<rect x="1518.75" y="774.0" width="1.50" height="1.4" fill="#f0616d"/>
<rect x="1520.25" y="774.0" width="0.75" height="1.4" fill="#4fb3dd"/>
<rect x="1521.00" y="774.0" width="3.00" height="1.4" fill="#d3d8e0"/>
<rect x="1524.75" y="774.0" width="1.50" height="1.4" fill="#d3d8e0"/>
<rect x="1527.00" y="774.0" width="6.00" height="1.4" fill="#d3d8e0"/>
<rect x="1533.75" y="774.0" width="5.25" height="1.4" fill="#d3d8e0"/>
<rect x="1539.75" y="774.0" width="0.75" height="1.4" fill="#d3d8e0"/>
<rect x="1540.50" y="774.0" width="1.50" height="1.4" fill="#4fb3dd"/>
<rect x="1542.00" y="774.0" width="1.50" height="1.4" fill="#f0616d"/>
<rect x="1543.50" y="774.0" width="0.75" height="1.4" fill="#4fb3dd"/>
<rect x="1518.00" y="776.0" width="0.75" height="1.4" fill="#4fb3dd"/>
<rect x="1518.75" y="776.0" width="0.75" height="1.4" fill="#f0616d"/>
<rect x="1519.50" y="776.0" width="0.75" height="1.4" fill="#4fb3dd"/>
<rect x="1521.00" y="778.0" width="0.75" height="1.4" fill="#4fb3dd"/>
<rect x="1521.75" y="778.0" width="1.50" height="1.4" fill="#f0616d"/>
<rect x="1523.25" y="778.0" width="0.75" height="1.4" fill="#4fb3dd"/>
<rect x="1524.00" y="780.0" width="0.75" height="1.4" fill="#4fb3dd"/>
<rect x="1524.75" y="780.0" width="1.50" height="1.4" fill="#f0616d"/>
<rect x="1526.25" y="780.0" width="0.75" height="1.4" fill="#4fb3dd"/>
<rect x="1527.00" y="780.0" width="1.50" height="1.4" fill="#d3d8e0"/>
<rect x="1529.25" y="780.0" width="3.75" height="1.4" fill="#d3d8e0"/>
<rect x="1533.75" y="780.0" width="1.50" height="1.4" fill="#d3d8e0"/>
<rect x="1536.00" y="780.0" width="5.25" height="1.4" fill="#d3d8e0"/>
<rect x="1542.00" y="780.0" width="6.75" height="1.4" fill="#d3d8e0"/>
<rect x="1549.50" y="780.0" width="3.75" height="1.4" fill="#d3d8e0"/>
<rect x="1554.00" y="780.0" width="4.50" height="1.4" fill="#d3d8e0"/>
<rect x="1559.25" y="780.0" width="1.50" height="1.4" fill="#d3d8e0"/>
<rect x="1561.50" y="780.0" width="2.25" height="1.4" fill="#d3d8e0"/>
<rect x="1564.50" y="780.0" width="3.00" height="1.4" fill="#d3d8e0"/>
<rect x="1568.25" y="780.0" width="4.50" height="1.4" fill="#d3d8e0"/>
<rect x="1573.50" y="780.0" width="3.75" height="1.4" fill="#d3d8e0"/>
<rect x="1578.00" y="780.0" width="6.00" height="1.4" fill="#d3d8e0"/>
<rect x="1584.75" y="780.0" width="2.25" height="1.4" fill="#d3d8e0"/>
<rect x="1587.75" y="780.0" width="4.50" height="1.4" fill="#d3d8e0"/>
<rect x="1593.00" y="780.0" width="3.00" height="1.4" fill="#d3d8e0"/>
<rect x="1524.00" y="782.0" width="1.50" height="1.4" fill="#d3d8e0"/>
<rect x="1526.25" y="782.0" width="4.50" height="1.4" fill="#d3d8e0"/>
<rect x="1531.50" y="782.0" width="4.50" height="1.4" fill="#d3d8e0"/>
<rect x="1536.75" y="782.0" width="3.00" height="1.4" fill="#d3d8e0"/>
<rect x="1540.50" y="782.0" width="1.50" height="1.4" fill="#d3d8e0"/>
<rect x="1542.75" y="782.0" width="3.00" height="1.4" fill="#d3d8e0"/>
<rect x="1546.50" y="782.0" width="1.50" height="1.4" fill="#d3d8e0"/>
<rect x="1548.75" y="782.0" width="3.00" height="1.4" fill="#d3d8e0"/>
<rect x="1552.50" y="782.0" width="1.50" height="1.4" fill="#d3d8e0"/>
<rect x="1554.75" y="782.0" width="4.50" height="1.4" fill="#d3d8e0"/>
<rect x="1560.00" y="782.0" width="6.75" height="1.4" fill="#d3d8e0"/>
<rect x="1567.50" y="782.0" width="6.75" height="1.4" fill="#d3d8e0"/>
<rect x="1575.00" y="782.0" width="2.25" height="1.4" fill="#d3d8e0"/>
<rect x="1578.00" y="782.0" width="6.00" height="1.4" fill="#d3d8e0"/>
<rect x="1584.75" y="782.0" width="1.50" height="1.4" fill="#d3d8e0"/>
<rect x="1587.00" y="782.0" width="4.50" height="1.4" fill="#d3d8e0"/>
<rect x="1592.25" y="782.0" width="1.50" height="1.4" fill="#d3d8e0"/>
<rect x="1594.50" y="782.0" width="4.50" height="1.4" fill="#d3d8e0"/>
<rect x="1524.00" y="784.0" width="1.50" height="1.4" fill="#d3d8e0"/>
<rect x="1526.25" y="784.0" width="1.50" height="1.4" fill="#d3d8e0"/>
<rect x="1528.50" y="784.0" width="3.75" height="1.4" fill="#d3d8e0"/>
<rect x="1533.00" y="784.0" width="4.50" height="1.4" fill="#d3d8e0"/>
<rect x="1538.25" y="784.0" width="1.50" height="1.4" fill="#d3d8e0"/>
<rect x="1540.50" y="784.0" width="5.25" height="1.4" fill="#d3d8e0"/>
<rect x="1546.50" y="784.0" width="3.75" height="1.4" fill="#d3d8e0"/>
<rect x="1551.00" y="784.0" width="0.75" height="1.4" fill="#d3d8e0"/>
<rect x="1552.50" y="784.0" width="3.00" height="1.4" fill="#d3d8e0"/>
<rect x="1556.25" y="784.0" width="2.25" height="1.4" fill="#d3d8e0"/>
<rect x="1559.25" y="784.0" width="3.00" height="1.4" fill="#d3d8e0"/>
<rect x="1563.00" y="784.0" width="3.75" height="1.4" fill="#d3d8e0"/>
<rect x="1567.50" y="784.0" width="3.75" height="1.4" fill="#d3d8e0"/>
<rect x="1572.00" y="784.0" width="4.50" height="1.4" fill="#d3d8e0"/>
<rect x="1577.25" y="784.0" width="5.25" height="1.4" fill="#d3d8e0"/>
<rect x="1583.25" y="784.0" width="3.00" height="1.4" fill="#d3d8e0"/>
<rect x="1587.00" y="784.0" width="4.50" height="1.4" fill="#d3d8e0"/>
<rect x="1592.25" y="784.0" width="4.50" height="1.4" fill="#d3d8e0"/>
<rect x="1524.00" y="786.0" width="8.25" height="1.4" fill="#d3d8e0"/>
<rect x="1533.00" y="786.0" width="0.75" height="1.4" fill="#d3d8e0"/>
<rect x="1534.50" y="786.0" width="2.25" height="1.4" fill="#d3d8e0"/>
<rect x="1537.50" y="786.0" width="6.75" height="1.4" fill="#d3d8e0"/>
<rect x="1545.00" y="786.0" width="4.50" height="1.4" fill="#d3d8e0"/>
<rect x="1550.25" y="786.0" width="8.25" height="1.4" fill="#d3d8e0"/>
<rect x="1559.25" y="786.0" width="8.25" height="1.4" fill="#d3d8e0"/>
<rect x="1568.25" y="786.0" width="3.75" height="1.4" fill="#d3d8e0"/>
<rect x="1572.75" y="786.0" width="8.25" height="1.4" fill="#d3d8e0"/>
<rect x="1581.75" y="786.0" width="1.50" height="1.4" fill="#d3d8e0"/>
<rect x="1584.00" y="786.0" width="1.50" height="1.4" fill="#d3d8e0"/>
<rect x="1586.25" y="786.0" width="4.50" height="1.4" fill="#d3d8e0"/>
<rect x="1591.50" y="786.0" width="2.25" height="1.4" fill="#d3d8e0"/>
<rect x="1594.50" y="786.0" width="4.50" height="1.4" fill="#d3d8e0"/>
<rect x="1524.00" y="788.0" width="2.25" height="1.4" fill="#d3d8e0"/>
<rect x="1527.00" y="788.0" width="8.25" height="1.4" fill="#d3d8e0"/>
<rect x="1536.00" y="788.0" width="3.00" height="1.4" fill="#d3d8e0"/>
<rect x="1539.75" y="788.0" width="2.25" height="1.4" fill="#d3d8e0"/>
<rect x="1542.75" y="788.0" width="3.75" height="1.4" fill="#d3d8e0"/>
<rect x="1547.25" y="788.0" width="4.50" height="1.4" fill="#d3d8e0"/>
<rect x="1552.50" y="788.0" width="1.50" height="1.4" fill="#d3d8e0"/>
<rect x="1554.75" y="788.0" width="1.50" height="1.4" fill="#d3d8e0"/>
<rect x="1557.00" y="788.0" width="6.75" height="1.4" fill="#d3d8e0"/>
<rect x="1563.75" y="788.0" width="1.50" height="1.4" fill="#4fb3dd"/>
<rect x="1565.25" y="788.0" width="1.50" height="1.4" fill="#f0616d"/>
<rect x="1566.75" y="788.0" width="0.75" height="1.4" fill="#4fb3dd"/>
<rect x="1524.00" y="790.0" width="0.75" height="1.4" fill="#4fb3dd"/>
<rect x="1524.75" y="790.0" width="1.50" height="1.4" fill="#f0616d"/>
<rect x="1527.00" y="790.0" width="1.50" height="1.4" fill="#4fb3dd"/>
<rect x="1524.00" y="792.0" width="0.75" height="1.4" fill="#4fb3dd"/>
<rect x="1524.75" y="792.0" width="1.50" height="1.4" fill="#f0616d"/>
<rect x="1526.25" y="792.0" width="0.75" height="1.4" fill="#4fb3dd"/>
<rect x="1527.00" y="792.0" width="1.50" height="1.4" fill="#d3d8e0"/>
<rect x="1529.25" y="792.0" width="6.75" height="1.4" fill="#d3d8e0"/>
<rect x="1536.75" y="792.0" width="3.75" height="1.4" fill="#d3d8e0"/>
<rect x="1541.25" y="792.0" width="3.00" height="1.4" fill="#d3d8e0"/>
<rect x="1545.00" y="792.0" width="1.50" height="1.4" fill="#d3d8e0"/>
<rect x="1547.25" y="792.0" width="3.75" height="1.4" fill="#d3d8e0"/>
<rect x="1551.75" y="792.0" width="3.75" height="1.4" fill="#d3d8e0"/>
<rect x="1556.25" y="792.0" width="3.75" height="1.4" fill="#d3d8e0"/>
<rect x="1560.75" y="792.0" width="1.50" height="1.4" fill="#d3d8e0"/>
<rect x="1563.00" y="792.0" width="2.25" height="1.4" fill="#d3d8e0"/>
<rect x="1566.00" y="792.0" width="1.50" height="1.4" fill="#d3d8e0"/>
<rect x="1568.25" y="792.0" width="4.50" height="1.4" fill="#d3d8e0"/>
<rect x="1573.50" y="792.0" width="4.50" height="1.4" fill="#d3d8e0"/>
<rect x="1578.75" y="792.0" width="5.25" height="1.4" fill="#d3d8e0"/>
<rect x="1584.75" y="792.0" width="3.00" height="1.4" fill="#d3d8e0"/>
<rect x="1588.50" y="792.0" width="3.00" height="1.4" fill="#d3d8e0"/>
<rect x="1592.25" y="792.0" width="1.50" height="1.4" fill="#d3d8e0"/>
<rect x="1524.00" y="794.0" width="6.00" height="1.4" fill="#d3d8e0"/>
<rect x="1524.00" y="796.0" width="6.75" height="1.4" fill="#d3d8e0"/>
<rect x="1531.50" y="796.0" width="6.00" height="1.4" fill="#d3d8e0"/>
<rect x="1538.25" y="796.0" width="2.25" height="1.4" fill="#d3d8e0"/>
<rect x="1541.25" y="796.0" width="0.75" height="1.4" fill="#d3d8e0"/>
<rect x="1542.75" y="796.0" width="3.00" height="1.4" fill="#d3d8e0"/>
<rect x="1546.50" y="796.0" width="4.50" height="1.4" fill="#d3d8e0"/>
<rect x="1551.75" y="796.0" width="4.50" height="1.4" fill="#d3d8e0"/>
<rect x="1557.00" y="796.0" width="4.50" height="1.4" fill="#d3d8e0"/>
<rect x="1562.25" y="796.0" width="3.00" height="1.4" fill="#d3d8e0"/>
<rect x="1566.00" y="796.0" width="3.00" height="1.4" fill="#d3d8e0"/>
<rect x="1569.75" y="796.0" width="8.25" height="1.4" fill="#d3d8e0"/>
<rect x="1578.75" y="796.0" width="6.00" height="1.4" fill="#d3d8e0"/>
<rect x="1585.50" y="796.0" width="6.00" height="1.4" fill="#d3d8e0"/>
<rect x="1592.25" y="796.0" width="5.25" height="1.4" fill="#d3d8e0"/>
<rect x="1524.00" y="798.0" width="1.50" height="1.4" fill="#d3d8e0"/>
<rect x="1526.25" y="798.0" width="8.25" height="1.4" fill="#d3d8e0"/>
<rect x="1535.25" y="798.0" width="2.25" height="1.4" fill="#d3d8e0"/>
<rect x="1538.25" y="798.0" width="4.50" height="1.4" fill="#d3d8e0"/>
<rect x="1543.50" y="798.0" width="6.00" height="1.4" fill="#d3d8e0"/>
<rect x="1550.25" y="798.0" width="1.50" height="1.4" fill="#d3d8e0"/>
<rect x="1552.50" y="798.0" width="6.75" height="1.4" fill="#d3d8e0"/>
<rect x="1560.00" y="798.0" width="1.50" height="1.4" fill="#d3d8e0"/>
<rect x="1562.25" y="798.0" width="5.25" height="1.4" fill="#d3d8e0"/>
<rect x="1568.25" y="798.0" width="3.00" height="1.4" fill="#d3d8e0"/>
<rect x="1572.00" y="798.0" width="4.50" height="1.4" fill="#d3d8e0"/>
<rect x="1577.25" y="798.0" width="4.50" height="1.4" fill="#d3d8e0"/>
<rect x="1582.50" y="798.0" width="1.50" height="1.4" fill="#d3d8e0"/>
<rect x="1584.75" y="798.0" width="6.00" height="1.4" fill="#d3d8e0"/>
<rect x="1591.50" y="798.0" width="4.50" height="1.4" fill="#d3d8e0"/>
<rect x="1524.00" y="800.0" width="4.50" height="1.4" fill="#d3d8e0"/>
<rect x="1529.25" y="800.0" width="1.50" height="1.4" fill="#d3d8e0"/>
<rect x="1531.50" y="800.0" width="3.75" height="1.4" fill="#d3d8e0"/>
<rect x="1536.00" y="800.0" width="2.25" height="1.4" fill="#d3d8e0"/>
<rect x="1539.00" y="800.0" width="1.50" height="1.4" fill="#d3d8e0"/>
<rect x="1541.25" y="800.0" width="2.25" height="1.4" fill="#d3d8e0"/>
<rect x="1544.25" y="800.0" width="3.75" height="1.4" fill="#d3d8e0"/>
<rect x="1548.75" y="800.0" width="0.75" height="1.4" fill="#d3d8e0"/>
<rect x="1550.25" y="800.0" width="5.25" height="1.4" fill="#d3d8e0"/>
<rect x="1556.25" y="800.0" width="6.00" height="1.4" fill="#d3d8e0"/>
<rect x="1562.25" y="800.0" width="1.50" height="1.4" fill="#4fb3dd"/>
<rect x="1563.75" y="800.0" width="1.50" height="1.4" fill="#f0616d"/>
<rect x="1565.25" y="800.0" width="0.75" height="1.4" fill="#4fb3dd"/>
<rect x="1524.00" y="802.0" width="0.75" height="1.4" fill="#4fb3dd"/>
<rect x="1524.75" y="802.0" width="1.50" height="1.4" fill="#f0616d"/>
<rect x="1527.00" y="802.0" width="1.50" height="1.4" fill="#4fb3dd"/>
<rect x="1524.00" y="804.0" width="0.75" height="1.4" fill="#4fb3dd"/>
<rect x="1524.75" y="804.0" width="1.50" height="1.4" fill="#f0616d"/>
<rect x="1526.25" y="804.0" width="0.75" height="1.4" fill="#4fb3dd"/>
<rect x="1527.00" y="804.0" width="3.75" height="1.4" fill="#d3d8e0"/>
<rect x="1531.50" y="804.0" width="6.00" height="1.4" fill="#d3d8e0"/>
<rect x="1538.25" y="804.0" width="6.00" height="1.4" fill="#d3d8e0"/>
<rect x="1545.00" y="804.0" width="6.75" height="1.4" fill="#d3d8e0"/>
<rect x="1552.50" y="804.0" width="6.00" height="1.4" fill="#d3d8e0"/>
<rect x="1559.25" y="804.0" width="3.75" height="1.4" fill="#d3d8e0"/>
<rect x="1563.75" y="804.0" width="3.00" height="1.4" fill="#d3d8e0"/>
<rect x="1567.50" y="804.0" width="6.75" height="1.4" fill="#d3d8e0"/>
<rect x="1575.00" y="804.0" width="6.00" height="1.4" fill="#d3d8e0"/>
<rect x="1581.75" y="804.0" width="6.00" height="1.4" fill="#d3d8e0"/>
<rect x="1588.50" y="804.0" width="4.50" height="1.4" fill="#d3d8e0"/>
<rect x="1593.75" y="804.0" width="3.75" height="1.4" fill="#d3d8e0"/>
<rect x="1524.00" y="806.0" width="4.50" height="1.4" fill="#d3d8e0"/>
<rect x="1524.00" y="808.0" width="5.25" height="1.4" fill="#d3d8e0"/>
<rect x="1530.00" y="808.0" width="3.00" height="1.4" fill="#d3d8e0"/>
<rect x="1533.75" y="808.0" width="6.75" height="1.4" fill="#d3d8e0"/>
<rect x="1541.25" y="808.0" width="5.25" height="1.4" fill="#d3d8e0"/>
<rect x="1547.25" y="808.0" width="1.50" height="1.4" fill="#d3d8e0"/>
<rect x="1549.50" y="808.0" width="3.00" height="1.4" fill="#d3d8e0"/>
<rect x="1553.25" y="808.0" width="3.75" height="1.4" fill="#d3d8e0"/>
<rect x="1557.75" y="808.0" width="8.25" height="1.4" fill="#d3d8e0"/>
<rect x="1566.75" y="808.0" width="1.50" height="1.4" fill="#d3d8e0"/>
<rect x="1569.00" y="808.0" width="6.75" height="1.4" fill="#d3d8e0"/>
<rect x="1576.50" y="808.0" width="6.00" height="1.4" fill="#d3d8e0"/>
<rect x="1583.25" y="808.0" width="4.50" height="1.4" fill="#d3d8e0"/>
<rect x="1588.50" y="808.0" width="4.50" height="1.4" fill="#d3d8e0"/>
<rect x="1593.75" y="808.0" width="4.50" height="1.4" fill="#d3d8e0"/>
<rect x="1524.00" y="810.0" width="1.50" height="1.4" fill="#d3d8e0"/>
<rect x="1526.25" y="810.0" width="1.50" height="1.4" fill="#d3d8e0"/>
<rect x="1528.50" y="810.0" width="8.25" height="1.4" fill="#d3d8e0"/>
<rect x="1537.50" y="810.0" width="0.75" height="1.4" fill="#d3d8e0"/>
<rect x="1539.00" y="810.0" width="3.00" height="1.4" fill="#d3d8e0"/>
<rect x="1542.75" y="810.0" width="3.00" height="1.4" fill="#d3d8e0"/>
<rect x="1546.50" y="810.0" width="4.50" height="1.4" fill="#d3d8e0"/>
<rect x="1551.75" y="810.0" width="3.00" height="1.4" fill="#d3d8e0"/>
<rect x="1555.50" y="810.0" width="3.00" height="1.4" fill="#d3d8e0"/>
<rect x="1559.25" y="810.0" width="1.50" height="1.4" fill="#d3d8e0"/>
<rect x="1561.50" y="810.0" width="6.00" height="1.4" fill="#d3d8e0"/>
<rect x="1568.25" y="810.0" width="0.75" height="1.4" fill="#d3d8e0"/>
<rect x="1569.75" y="810.0" width="6.75" height="1.4" fill="#d3d8e0"/>
<rect x="1577.25" y="810.0" width="3.00" height="1.4" fill="#d3d8e0"/>
<rect x="1581.00" y="810.0" width="1.50" height="1.4" fill="#d3d8e0"/>
<rect x="1583.25" y="810.0" width="3.00" height="1.4" fill="#d3d8e0"/>
<rect x="1587.00" y="810.0" width="3.75" height="1.4" fill="#d3d8e0"/>
<rect x="1591.50" y="810.0" width="4.50" height="1.4" fill="#d3d8e0"/>
<rect x="1524.00" y="812.0" width="3.75" height="1.4" fill="#d3d8e0"/>
<rect x="1528.50" y="812.0" width="8.25" height="1.4" fill="#d3d8e0"/>
<rect x="1537.50" y="812.0" width="5.25" height="1.4" fill="#d3d8e0"/>
<rect x="1543.50" y="812.0" width="1.50" height="1.4" fill="#d3d8e0"/>
<rect x="1545.75" y="812.0" width="6.75" height="1.4" fill="#d3d8e0"/>
<rect x="1552.50" y="812.0" width="1.50" height="1.4" fill="#4fb3dd"/>
<rect x="1554.00" y="812.0" width="1.50" height="1.4" fill="#f0616d"/>
<rect x="1555.50" y="812.0" width="0.75" height="1.4" fill="#4fb3dd"/>
<rect x="1524.00" y="814.0" width="0.75" height="1.4" fill="#4fb3dd"/>
<rect x="1524.75" y="814.0" width="1.50" height="1.4" fill="#f0616d"/>
<rect x="1527.00" y="814.0" width="1.50" height="1.4" fill="#4fb3dd"/>
<rect x="1524.00" y="816.0" width="0.75" height="1.4" fill="#4fb3dd"/>
<rect x="1524.75" y="816.0" width="1.50" height="1.4" fill="#f0616d"/>
<rect x="1527.00" y="816.0" width="1.50" height="1.4" fill="#4fb3dd"/>
<rect x="1521.00" y="818.0" width="1.50" height="1.4" fill="#4fb3dd"/>
<rect x="1522.50" y="818.0" width="1.50" height="1.4" fill="#f0616d"/>
<rect x="1524.00" y="818.0" width="0.75" height="1.4" fill="#4fb3dd"/>
<rect x="1518.00" y="820.0" width="1.50" height="1.4" fill="#4fb3dd"/>
<rect x="1519.50" y="820.0" width="0.75" height="1.4" fill="#f0616d"/>
<rect x="1520.25" y="820.0" width="0.75" height="1.4" fill="#4fb3dd"/>
<rect x="1518.00" y="822.0" width="0.75" height="1.4" fill="#4fb3dd"/>
<rect x="1518.75" y="822.0" width="1.50" height="1.4" fill="#f0616d"/>
<rect x="1521.00" y="822.0" width="1.50" height="1.4" fill="#4fb3dd"/>
<rect x="1518.00" y="824.0" width="0.75" height="1.4" fill="#4fb3dd"/>
<rect x="1518.75" y="824.0" width="1.50" height="1.4" fill="#f0616d"/>
<rect x="1520.25" y="824.0" width="0.75" height="1.4" fill="#4fb3dd"/>
<rect x="1521.00" y="824.0" width="3.00" height="1.4" fill="#d3d8e0"/>
<rect x="1524.75" y="824.0" width="1.50" height="1.4" fill="#d3d8e0"/>
<rect x="1527.00" y="824.0" width="6.00" height="1.4" fill="#d3d8e0"/>
<rect x="1533.75" y="824.0" width="5.25" height="1.4" fill="#d3d8e0"/>
<rect x="1539.75" y="824.0" width="0.75" height="1.4" fill="#d3d8e0"/>
<rect x="1540.50" y="824.0" width="1.50" height="1.4" fill="#4fb3dd"/>
<rect x="1542.00" y="824.0" width="1.50" height="1.4" fill="#f0616d"/>
<rect x="1543.50" y="824.0" width="0.75" height="1.4" fill="#4fb3dd"/>
<rect x="1518.00" y="826.0" width="0.75" height="1.4" fill="#4fb3dd"/>
<rect x="1518.75" y="826.0" width="0.75" height="1.4" fill="#f0616d"/>
<rect x="1519.50" y="826.0" width="0.75" height="1.4" fill="#4fb3dd"/>
<rect x="1521.00" y="828.0" width="0.75" height="1.4" fill="#4fb3dd"/>
<rect x="1521.75" y="828.0" width="1.50" height="1.4" fill="#f0616d"/>
<rect x="1523.25" y="828.0" width="0.75" height="1.4" fill="#4fb3dd"/>
<rect x="1524.00" y="830.0" width="0.75" height="1.4" fill="#4fb3dd"/>
<rect x="1524.75" y="830.0" width="1.50" height="1.4" fill="#f0616d"/>
<rect x="1526.25" y="830.0" width="0.75" height="1.4" fill="#4fb3dd"/>
<rect x="1527.00" y="830.0" width="8.25" height="1.4" fill="#d3d8e0"/>
<rect x="1536.00" y="830.0" width="1.50" height="1.4" fill="#d3d8e0"/>
<rect x="1538.25" y="830.0" width="2.25" height="1.4" fill="#d3d8e0"/>
<rect x="1541.25" y="830.0" width="1.50" height="1.4" fill="#d3d8e0"/>
<rect x="1543.50" y="830.0" width="1.50" height="1.4" fill="#d3d8e0"/>
<rect x="1545.75" y="830.0" width="6.75" height="1.4" fill="#d3d8e0"/>
<rect x="1553.25" y="830.0" width="3.00" height="1.4" fill="#d3d8e0"/>
<rect x="1557.00" y="830.0" width="3.75" height="1.4" fill="#d3d8e0"/>
<rect x="1561.50" y="830.0" width="4.50" height="1.4" fill="#d3d8e0"/>
<rect x="1566.75" y="830.0" width="2.25" height="1.4" fill="#d3d8e0"/>
<rect x="1569.75" y="830.0" width="4.50" height="1.4" fill="#d3d8e0"/>
<rect x="1575.00" y="830.0" width="4.50" height="1.4" fill="#d3d8e0"/>
<rect x="1580.25" y="830.0" width="1.50" height="1.4" fill="#d3d8e0"/>
<rect x="1582.50" y="830.0" width="1.50" height="1.4" fill="#d3d8e0"/>
<rect x="1584.75" y="830.0" width="6.00" height="1.4" fill="#d3d8e0"/>
<rect x="1591.50" y="830.0" width="3.00" height="1.4" fill="#d3d8e0"/>
<rect x="1524.00" y="832.0" width="6.75" height="1.4" fill="#d3d8e0"/>
<rect x="1524.00" y="834.0" width="3.75" height="1.4" fill="#d3d8e0"/>
<rect x="1528.50" y="834.0" width="4.50" height="1.4" fill="#d3d8e0"/>
<rect x="1533.75" y="834.0" width="1.50" height="1.4" fill="#d3d8e0"/>
<rect x="1536.00" y="834.0" width="3.00" height="1.4" fill="#d3d8e0"/>
<rect x="1539.75" y="834.0" width="3.00" height="1.4" fill="#d3d8e0"/>
<rect x="1543.50" y="834.0" width="2.25" height="1.4" fill="#d3d8e0"/>
<rect x="1546.50" y="834.0" width="6.00" height="1.4" fill="#d3d8e0"/>
<rect x="1553.25" y="834.0" width="0.75" height="1.4" fill="#d3d8e0"/>
<rect x="1554.75" y="834.0" width="3.00" height="1.4" fill="#d3d8e0"/>
<rect x="1558.50" y="834.0" width="5.25" height="1.4" fill="#d3d8e0"/>
<rect x="1564.50" y="834.0" width="6.75" height="1.4" fill="#d3d8e0"/>
<rect x="1572.00" y="834.0" width="1.50" height="1.4" fill="#d3d8e0"/>
<rect x="1574.25" y="834.0" width="4.50" height="1.4" fill="#d3d8e0"/>
<rect x="1579.50" y="834.0" width="0.75" height="1.4" fill="#d3d8e0"/>
<rect x="1581.00" y="834.0" width="5.25" height="1.4" fill="#d3d8e0"/>
<rect x="1587.00" y="834.0" width="4.50" height="1.4" fill="#d3d8e0"/>
<rect x="1592.25" y="834.0" width="4.50" height="1.4" fill="#d3d8e0"/>
</g>
</svg>

<div class="abs" style="left:4px;top:850px;width:16px;height:10px;border-radius:2px;background:#0d1417"></div><div class="abs" style="left:5px;top:851px;width:14px;height:5px;border-radius:1px;background:linear-gradient(#3a4a52,#26333a)"></div><div class="abs" style="left:5px;top:856px;width:14px;height:3px;background:#0f171b"></div>
<div class="lb" style="left:569.00px;top:11px;letter-spacing:-0.030px;font-weight:bold;font-size:13.5px;color:#4b5b66">/opt/lampp/htdocs/loi/cgu.php (htdocs) - Sublime Text (UNREGISTERED)</div>
<div class="lb" style="left:6.50px;top:40px;letter-spacing:-0.667px;font-size:13px;color:#2f3338">File</div>
<div class="lb" style="left:39.50px;top:40px;letter-spacing:-0.467px;font-size:13px;color:#2f3338">Edit</div>
<div class="lb" style="left:74.00px;top:40px;letter-spacing:-0.175px;font-size:13px;color:#2f3338">Selection</div>
<div class="lb" style="left:139.80px;top:40px;letter-spacing:-0.667px;font-size:13px;color:#2f3338">Find</div>
<div class="lb" style="left:177.00px;top:40px;letter-spacing:-0.867px;font-size:13px;color:#2f3338">View</div>
<div class="lb" style="left:216.70px;top:40px;letter-spacing:-0.333px;font-size:13px;color:#2f3338">Goto</div>
<div class="lb" style="left:258.60px;top:40px;letter-spacing:-0.150px;font-size:13px;color:#2f3338">Tools</div>
<div class="lb" style="left:301.70px;top:40px;letter-spacing:-0.167px;font-size:13px;color:#2f3338">Project</div>
<div class="lb" style="left:353.90px;top:40px;letter-spacing:-0.160px;font-size:13px;color:#2f3338">Preferences</div>
<div class="lb" style="left:436.80px;top:40px;letter-spacing:0.000px;font-size:13px;color:#2f3338">Help</div>
<div class="lb" style="left:23.40px;top:75px;letter-spacing:-0.433px;font-size:12.5px;color:#d5dce0">FOLDERS</div>
<div class="lb" style="left:53.60px;top:98px;letter-spacing:0.360px;font-weight:bold;font-size:12.5px;color:#ccd5da">htdocs</div>
<div class="lb" style="left:403.80px;top:72px;letter-spacing:0.167px;font-style:italic;font-size:12.5px;color:#e3e8eb">cgu.php</div>
<div class="lb" style="left:47.50px;top:847px;letter-spacing:0.333px;font-size:12px;color:#889ca7">Line 1, Column 1</div>
<div class="lb" style="left:1429.00px;top:847px;letter-spacing:0.250px;font-size:12px;color:#889ca7">Spaces: 4</div>
<div class="lb" style="left:1540.6px;top:847px;transform:scaleX(0.872);transform-origin:0 0;font-size:12px;color:#889ca7">PHP</div>
</body></html>
